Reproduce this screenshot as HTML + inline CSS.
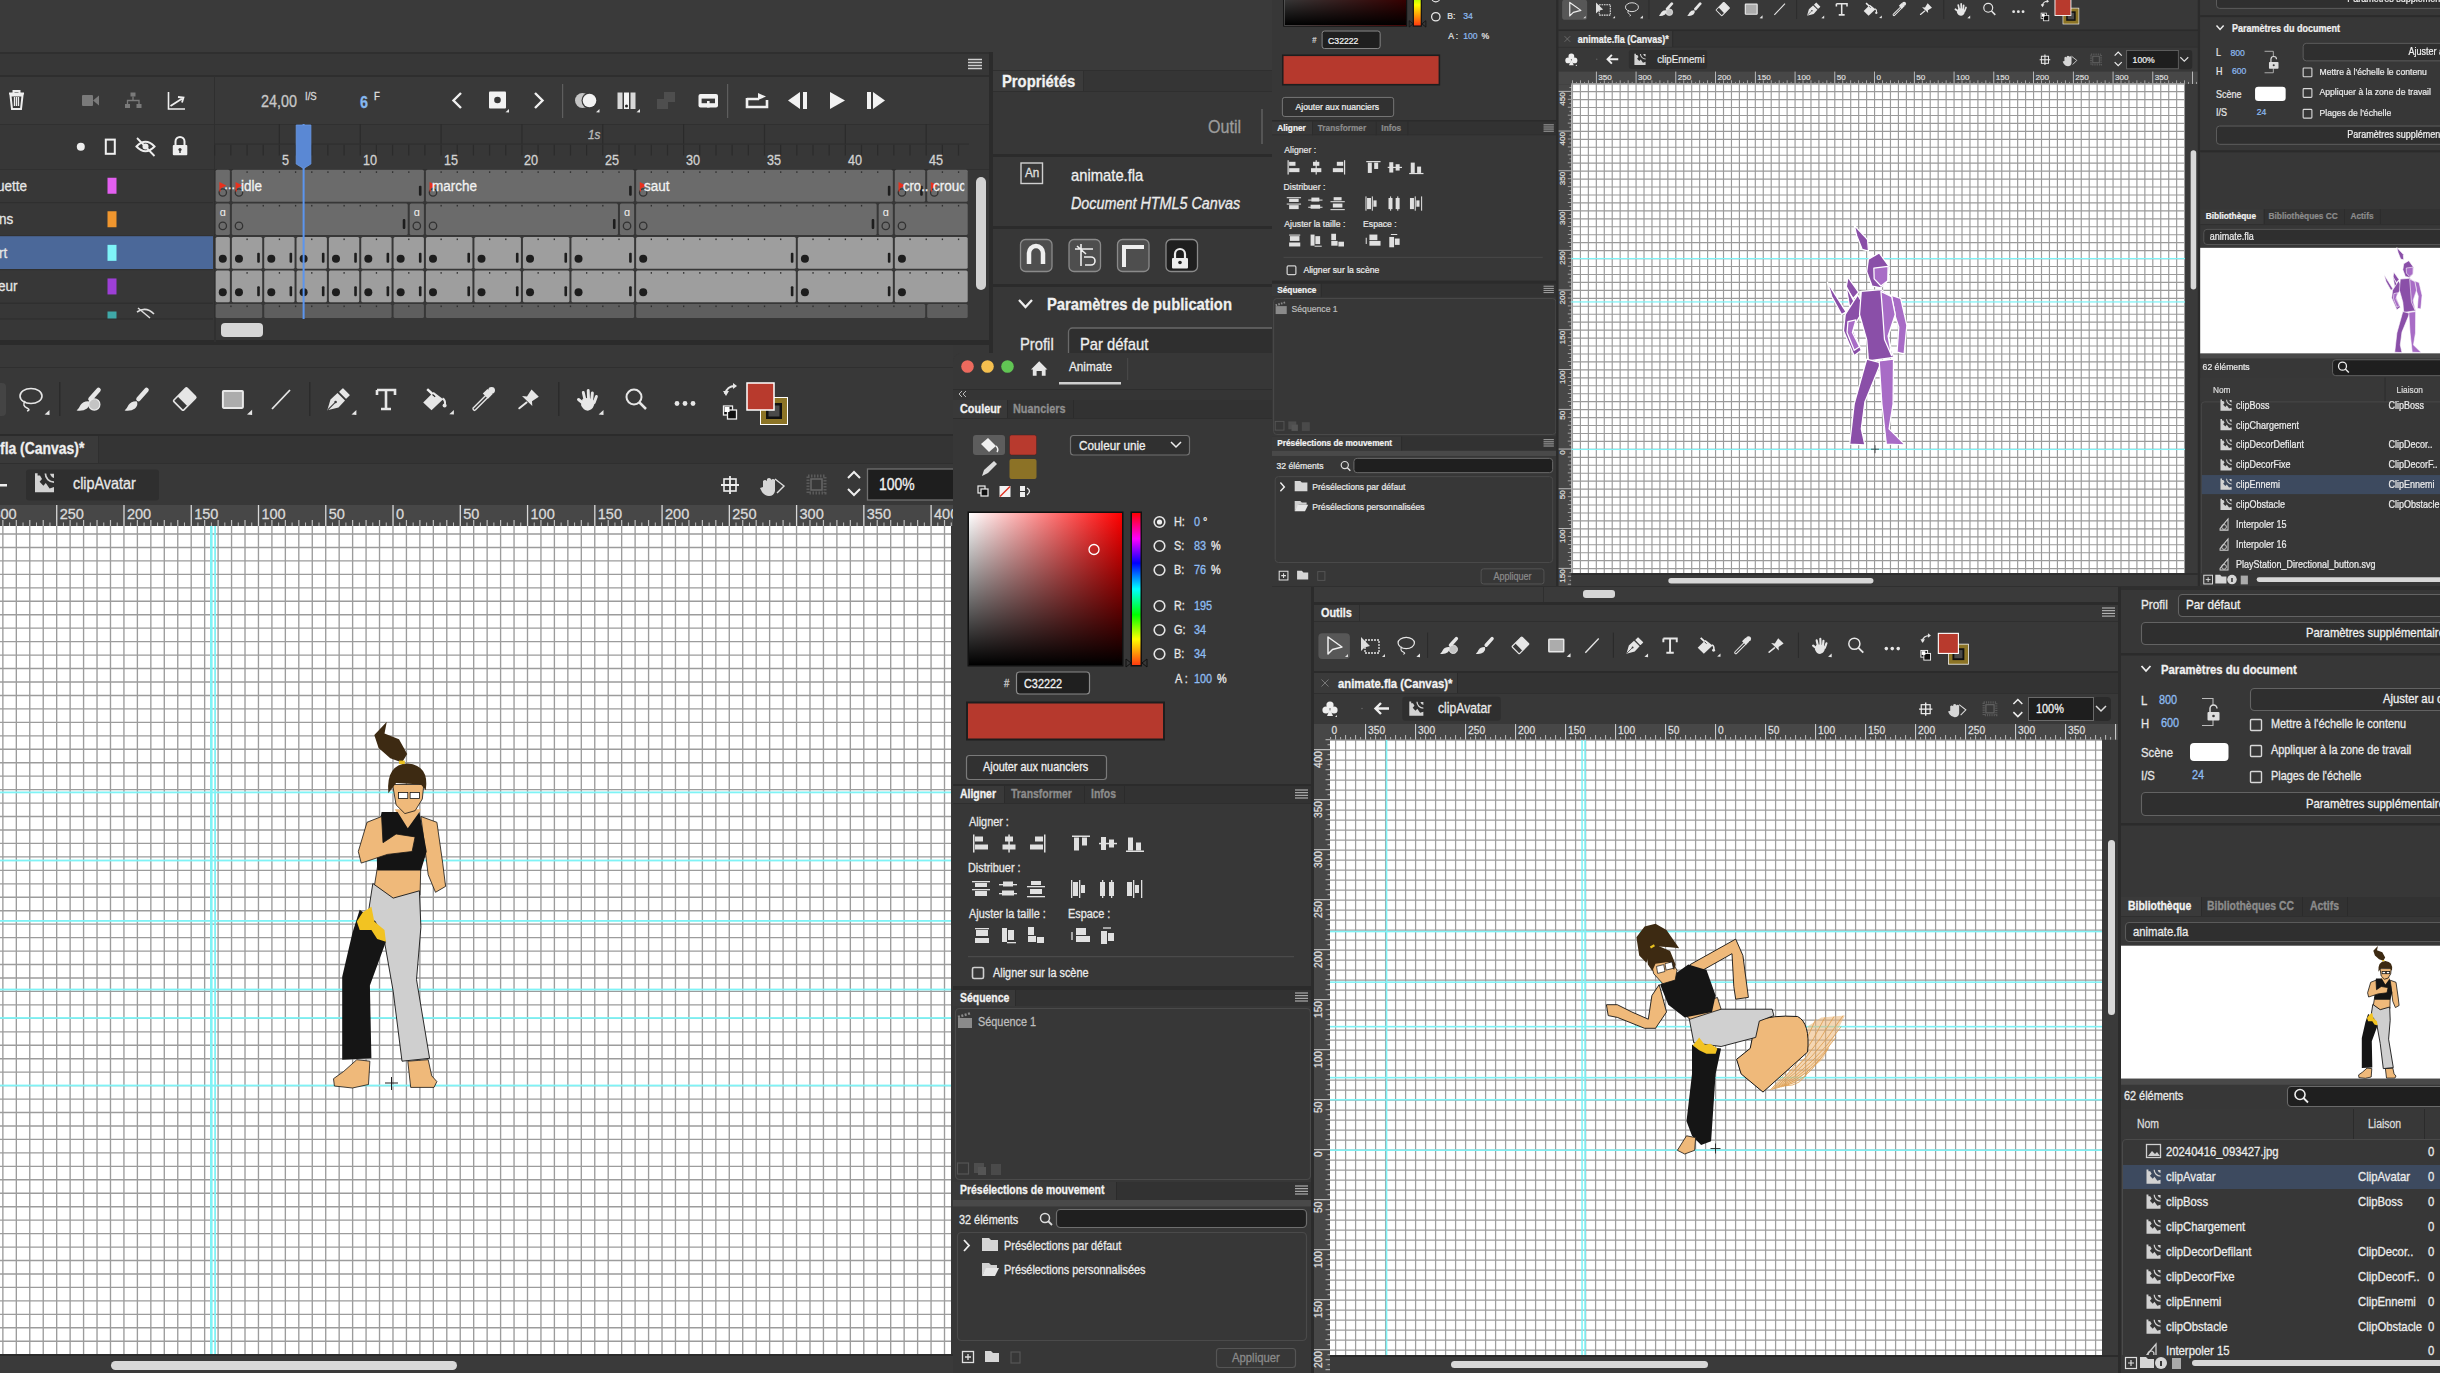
<!DOCTYPE html>
<html><head><meta charset="utf-8">
<style>
*{margin:0;padding:0;box-sizing:border-box}
html,body{width:2440px;height:1373px;overflow:hidden;background:#2f2f2f;font-family:"Liberation Sans",sans-serif;color:#e8e8e8}
.a{position:absolute}
.t{position:absolute;white-space:nowrap;line-height:1;transform:scaleX(.87);transform-origin:0 0;-webkit-text-stroke-width:.3px}
svg{overflow:visible}
</style></head><body>
<div class="a" style="left:993px;top:0;width:279px;height:52px;background:#3a3a3a"></div><div class="a" id="L" style="left:0;top:0;width:993px;height:1373px;background:#373737;overflow:hidden">
<div class="a" style="left:0px;top:0px;width:993px;height:52px;background:#3a3a3a;"></div>
<div class="a" style="left:0px;top:52px;width:993px;height:2px;background:#2f2f2f;"></div>
<div class="a" style="left:0px;top:54px;width:989px;height:22px;background:#373737;"></div>
<div class="a" style="left:0px;top:75px;width:989px;height:1.5px;background:#2e2e2e;"></div>
<div class="a" style="left:0px;top:76.5px;width:989px;height:47.5px;background:#393939;"></div>
<div class="a" style="left:0px;top:123.5px;width:989px;height:1px;background:#303030;"></div>
<div class="a" style="left:0px;top:124.5px;width:989px;height:45px;background:#373737;"></div>
<div class="a" style="left:0px;top:168.5px;width:989px;height:1.2px;background:#303030;"></div>
<div class="a" style="left:213.7px;top:76px;width:1.5px;height:266px;background:#2f2f2f;"></div>
<div class="a" style="left:0px;top:318px;width:989px;height:22px;background:#373737;"></div>
<div class="a" style="left:0px;top:340px;width:993px;height:5px;background:#2b2b2b;"></div>
<div class="a" style="left:989px;top:52px;width:4px;height:301px;background:#2b2b2b;"></div>
<div class="a" style="left:0px;top:345px;width:953px;height:21.5px;background:#383838;"></div>
<div class="a" style="left:0px;top:366.5px;width:953px;height:1px;background:#2f2f2f;"></div>
<div class="a" style="left:0px;top:367.5px;width:953px;height:66.5px;background:#383838;"></div>
<div class="a" style="left:0px;top:434px;width:953px;height:2px;background:#2b2b2b;"></div>
<div class="a" style="left:0px;top:436px;width:953px;height:27px;background:#343434;"></div>
<div class="a" style="left:0px;top:436px;width:98px;height:27px;background:#3a3a3a;"></div>
<div class="a" style="left:98px;top:436px;width:1px;height:27px;background:#2f2f2f;"></div>
<div class="a" style="left:0px;top:463px;width:953px;height:1px;background:#2f2f2f;"></div>
<div class="a" style="left:0px;top:464px;width:953px;height:41px;background:#383838;"></div>
<div class="a" style="left:0px;top:505px;width:953px;height:21px;background:#474747;"></div>
<svg class="a" style="left:0px;top:0px;" width="990" height="125" viewBox="0 0 990 125"><path d="M9 93.5 H24 M13.5 93 V91 H19.5 V93 M10.5 95.5 L12 109 H21 L22.5 95.5Z" fill="none" stroke="#eee" stroke-width="2"/><path d="M14.5 97 V106 M16.5 97 V106 M18.5 97 V106" stroke="#eee" stroke-width="1.3"/><rect x="82" y="95" width="11" height="11" rx="1" fill="#7a7a7a"/><path d="M93 100.5 L99 95.5 V105.5Z" fill="#7a7a7a"/><rect x="130.5" y="92.5" width="5" height="4" fill="#7a7a7a"/><rect x="125" y="104" width="5" height="4" fill="#7a7a7a"/><rect x="136.5" y="104" width="5" height="4" fill="#7a7a7a"/><path d="M133 96.5 V100.5 M127.5 104 V100.5 H139 V104" fill="none" stroke="#7a7a7a" stroke-width="1.3"/><path d="M168.5 92 V109 H185" fill="none" stroke="#eee" stroke-width="1.6"/><path d="M170.5 106 L183 98 M178 97 L183.5 97.5 L182 102.5" fill="none" stroke="#eee" stroke-width="1.8"/><path d="M461 93 L453.5 100.5 L461 108" fill="none" stroke="#f0f0f0" stroke-width="2.4"/><rect x="489" y="91.5" width="17" height="17" rx="1" fill="#f2f2f2"/><circle cx="497.5" cy="100" r="3.3" fill="#383838"/><path d="M505.5 112.3 L509 109 L509 112.5Z" fill="#e6e6e6"/><path d="M535 93 L542.5 100.5 L535 108" fill="none" stroke="#f0f0f0" stroke-width="2.4"/><rect x="562" y="84" width="1.2" height="34" fill="#5e5e5e"/><circle cx="582.5" cy="100.5" r="7.5" fill="#c4c4c4"/><circle cx="589.5" cy="100.5" r="8" fill="#383838"/><circle cx="589.5" cy="100.5" r="6.8" fill="#f2f2f2"/><path d="M596 112.3 L599.5 109 L599.5 112.5Z" fill="#e6e6e6"/><rect x="617.5" y="92.5" width="5" height="16.5" fill="#d8d8d8"/><rect x="624" y="92.5" width="5" height="16.5" fill="#f4f4f4"/><rect x="630.5" y="92.5" width="5" height="16.5" fill="#d8d8d8"/><circle cx="626.5" cy="106" r="1.5" fill="#222"/><path d="M636.5 112.3 L640 109 L640 112.5Z" fill="#e6e6e6"/><rect x="657" y="99" width="11" height="10" fill="#4e4e4e"/><rect x="664" y="92" width="11" height="10" fill="#4e4e4e"/><rect x="698.5" y="94" width="19.5" height="13.5" rx="2" fill="#f2f2f2"/><rect x="701.6" y="98.6" width="13.4" height="4.6" fill="#3a3a3a"/><rect x="707" y="101" width="2.6" height="6.5" fill="#f2f2f2"/><rect x="727" y="84" width="1.2" height="34" fill="#5e5e5e"/><path d="M747 98 V107 H767 V100 M747 99 H759" fill="none" stroke="#f0f0f0" stroke-width="2.6"/><path d="M758 93 L766 96.5 L758 100Z" fill="#f0f0f0"/><path d="M800 92 V109 L788 100.5Z" fill="#f2f2f2"/><rect x="803" y="92" width="4" height="17" fill="#f2f2f2"/><path d="M830 92 V109 L845 100.5Z" fill="#f2f2f2"/><rect x="867" y="92" width="4" height="17" fill="#f2f2f2"/><path d="M873 92 V109 L885 100.5Z" fill="#f2f2f2"/><path d="M968 59.5H982M968 62.5H982M968 65.5H982M968 68.5H982" stroke="#cfcfcf" stroke-width="1.4"/></svg>
<div class="t" style="left:260.5px;top:93px;font-size:16.5px;color:#c8c8c8;font-weight:normal;">24,00</div>
<div class="t" style="left:304.5px;top:90.5px;font-size:11px;color:#d8d8d8;font-weight:normal;">I/S</div>
<div class="t" style="left:360px;top:94px;font-size:16.5px;color:#86b8f0;font-weight:bold;">6</div>
<div class="t" style="left:373.5px;top:90.5px;font-size:11px;color:#e0e0e0;font-weight:normal;">F</div>
<svg class="a" style="left:0px;top:0px;" width="990" height="170" viewBox="0 0 990 170"><rect x="214.1" y="144.5" width="1.2" height="11" fill="#2b2b2b"/><rect x="230.27" y="144.5" width="1.2" height="11" fill="#2b2b2b"/><rect x="246.44" y="144.5" width="1.2" height="11" fill="#2b2b2b"/><rect x="262.61" y="144.5" width="1.2" height="11" fill="#2b2b2b"/><rect x="278.78" y="124" width="1.2" height="20" fill="#2b2b2b"/><rect x="278.78" y="144.5" width="1.2" height="11" fill="#2b2b2b"/><rect x="294.95" y="144.5" width="1.2" height="11" fill="#2b2b2b"/><rect x="311.12" y="144.5" width="1.2" height="11" fill="#2b2b2b"/><rect x="327.29" y="144.5" width="1.2" height="11" fill="#2b2b2b"/><rect x="343.46" y="144.5" width="1.2" height="11" fill="#2b2b2b"/><rect x="359.63" y="124" width="1.2" height="20" fill="#2b2b2b"/><rect x="359.63" y="144.5" width="1.2" height="11" fill="#2b2b2b"/><rect x="375.8" y="144.5" width="1.2" height="11" fill="#2b2b2b"/><rect x="391.97" y="144.5" width="1.2" height="11" fill="#2b2b2b"/><rect x="408.14" y="144.5" width="1.2" height="11" fill="#2b2b2b"/><rect x="424.31" y="144.5" width="1.2" height="11" fill="#2b2b2b"/><rect x="440.48" y="124" width="1.2" height="20" fill="#2b2b2b"/><rect x="440.48" y="144.5" width="1.2" height="11" fill="#2b2b2b"/><rect x="456.65" y="144.5" width="1.2" height="11" fill="#2b2b2b"/><rect x="472.82" y="144.5" width="1.2" height="11" fill="#2b2b2b"/><rect x="488.99" y="144.5" width="1.2" height="11" fill="#2b2b2b"/><rect x="505.16" y="144.5" width="1.2" height="11" fill="#2b2b2b"/><rect x="521.33" y="124" width="1.2" height="20" fill="#2b2b2b"/><rect x="521.33" y="144.5" width="1.2" height="11" fill="#2b2b2b"/><rect x="537.5" y="144.5" width="1.2" height="11" fill="#2b2b2b"/><rect x="553.67" y="144.5" width="1.2" height="11" fill="#2b2b2b"/><rect x="569.84" y="144.5" width="1.2" height="11" fill="#2b2b2b"/><rect x="586.01" y="144.5" width="1.2" height="11" fill="#2b2b2b"/><rect x="602.18" y="124" width="1.2" height="20" fill="#2b2b2b"/><rect x="602.18" y="144.5" width="1.2" height="11" fill="#2b2b2b"/><rect x="618.35" y="144.5" width="1.2" height="11" fill="#2b2b2b"/><rect x="634.52" y="144.5" width="1.2" height="11" fill="#2b2b2b"/><rect x="650.69" y="144.5" width="1.2" height="11" fill="#2b2b2b"/><rect x="666.86" y="144.5" width="1.2" height="11" fill="#2b2b2b"/><rect x="683.03" y="124" width="1.2" height="20" fill="#2b2b2b"/><rect x="683.03" y="144.5" width="1.2" height="11" fill="#2b2b2b"/><rect x="699.2" y="144.5" width="1.2" height="11" fill="#2b2b2b"/><rect x="715.37" y="144.5" width="1.2" height="11" fill="#2b2b2b"/><rect x="731.54" y="144.5" width="1.2" height="11" fill="#2b2b2b"/><rect x="747.71" y="144.5" width="1.2" height="11" fill="#2b2b2b"/><rect x="763.88" y="124" width="1.2" height="20" fill="#2b2b2b"/><rect x="763.88" y="144.5" width="1.2" height="11" fill="#2b2b2b"/><rect x="780.05" y="144.5" width="1.2" height="11" fill="#2b2b2b"/><rect x="796.22" y="144.5" width="1.2" height="11" fill="#2b2b2b"/><rect x="812.39" y="144.5" width="1.2" height="11" fill="#2b2b2b"/><rect x="828.56" y="144.5" width="1.2" height="11" fill="#2b2b2b"/><rect x="844.73" y="124" width="1.2" height="20" fill="#2b2b2b"/><rect x="844.73" y="144.5" width="1.2" height="11" fill="#2b2b2b"/><rect x="860.9" y="144.5" width="1.2" height="11" fill="#2b2b2b"/><rect x="877.07" y="144.5" width="1.2" height="11" fill="#2b2b2b"/><rect x="893.24" y="144.5" width="1.2" height="11" fill="#2b2b2b"/><rect x="909.41" y="144.5" width="1.2" height="11" fill="#2b2b2b"/><rect x="925.58" y="124" width="1.2" height="20" fill="#2b2b2b"/><rect x="925.58" y="144.5" width="1.2" height="11" fill="#2b2b2b"/><rect x="941.75" y="144.5" width="1.2" height="11" fill="#2b2b2b"/><rect x="957.92" y="144.5" width="1.2" height="11" fill="#2b2b2b"/><rect x="214" y="143.5" width="755" height="1.2" fill="#2f2f2f"/></svg>
<div class="t" style="left:281.88px;top:152.5px;font-size:14.5px;color:#d2d2d2;font-weight:normal;">5</div>
<div class="t" style="left:362.73px;top:152.5px;font-size:14.5px;color:#d2d2d2;font-weight:normal;">10</div>
<div class="t" style="left:443.58000000000004px;top:152.5px;font-size:14.5px;color:#d2d2d2;font-weight:normal;">15</div>
<div class="t" style="left:524.4300000000001px;top:152.5px;font-size:14.5px;color:#d2d2d2;font-weight:normal;">20</div>
<div class="t" style="left:605.28px;top:152.5px;font-size:14.5px;color:#d2d2d2;font-weight:normal;">25</div>
<div class="t" style="left:686.1300000000001px;top:152.5px;font-size:14.5px;color:#d2d2d2;font-weight:normal;">30</div>
<div class="t" style="left:766.98px;top:152.5px;font-size:14.5px;color:#d2d2d2;font-weight:normal;">35</div>
<div class="t" style="left:847.8300000000002px;top:152.5px;font-size:14.5px;color:#d2d2d2;font-weight:normal;">40</div>
<div class="t" style="left:928.6800000000001px;top:152.5px;font-size:14.5px;color:#d2d2d2;font-weight:normal;">45</div>
<div class="t" style="left:588px;top:127.5px;font-size:13.5px;color:#bdbdbd;font-weight:normal;font-style:italic">1s</div>
<svg class="a" style="left:0px;top:0px;" width="214" height="170" viewBox="0 0 214 170"><circle cx="80.8" cy="146.7" r="4" fill="#eee"/><rect x="105.8" y="139.6" width="9" height="14.2" fill="none" stroke="#f0f0f0" stroke-width="2"/><path d="M136.5 146.5 Q145.5 137 154.5 146.5 Q145.5 156 136.5 146.5Z" fill="none" stroke="#eee" stroke-width="2"/><circle cx="145.5" cy="146.5" r="3" fill="#eee"/><line x1="137" y1="138" x2="154.5" y2="156" stroke="#eee" stroke-width="1.8"/><path d="M175.5 145 V141.5 A4.5 4.5 0 0 1 184.5 141.5 V145" fill="none" stroke="#eee" stroke-width="2"/><rect x="172.8" y="145" width="14.5" height="10.3" rx="1" fill="#eee"/><circle cx="180" cy="149.5" r="1.6" fill="#383838"/><rect x="179.3" y="149.5" width="1.4" height="3.5" fill="#383838"/></svg>
<svg class="a" style="left:0px;top:0px;" width="214" height="320" viewBox="0 0 214 320"><rect x="0" y="202" width="213" height="1.2" fill="#2f2f2f"/><rect x="107.5" y="177.75" width="9" height="16" fill="#e35ff0"/><rect x="0" y="235.4" width="213" height="1.2" fill="#2f2f2f"/><rect x="107.5" y="211.25" width="9" height="16" fill="#f0962e"/><rect x="0" y="236.2" width="213" height="33.29999999999999" fill="#4b6899"/><rect x="0" y="269" width="213" height="1.2" fill="#2f2f2f"/><rect x="107.5" y="244.85" width="9" height="16" fill="#7ff4f8"/><rect x="0" y="302.6" width="213" height="1.2" fill="#2f2f2f"/><rect x="107.5" y="278.45" width="9" height="16" fill="#9d3fd6"/><rect x="0" y="318.3" width="213" height="1.2" fill="#2f2f2f"/><rect x="107.5" y="311.5" width="9" height="7" fill="#3fa8a8"/><path d="M137 312 Q146 306 154 314" fill="none" stroke="#ddd" stroke-width="1.6"/><line x1="138" y1="308" x2="150" y2="318" stroke="#ddd" stroke-width="1.5"/></svg>
<div class="t" style="left:-3px;top:177.75px;font-size:15.5px;color:#e6e6e6;font-weight:normal;">uette</div>
<div class="t" style="left:-1px;top:211.25px;font-size:15.5px;color:#e6e6e6;font-weight:normal;">ns</div>
<div class="t" style="left:-1px;top:244.85px;font-size:15.5px;color:#e6e6e6;font-weight:normal;">rt</div>
<div class="t" style="left:-2px;top:278.45000000000005px;font-size:15.5px;color:#e6e6e6;font-weight:normal;">eur</div>
<svg class="a" style="left:0px;top:0px;" width="990" height="320" viewBox="0 0 990 320"><rect x="215.7" y="169.8" width="14.17" height="31.9" rx="1.5" fill="#6b6b6b"/><circle cx="222.78" cy="192.5" r="3.7" fill="none" stroke="#323232" stroke-width="1.3"/><rect x="231.87" y="169.8" width="192.04" height="31.9" rx="1.5" fill="#6b6b6b"/><rect x="246.44" y="171.3" width="1.3" height="1.6" fill="#2f2f2f"/><rect x="262.61" y="171.3" width="1.3" height="1.6" fill="#2f2f2f"/><rect x="278.78" y="171.3" width="1.3" height="1.6" fill="#2f2f2f"/><rect x="294.95" y="171.3" width="1.3" height="1.6" fill="#2f2f2f"/><rect x="311.12" y="171.3" width="1.3" height="1.6" fill="#2f2f2f"/><rect x="327.29" y="171.3" width="1.3" height="1.6" fill="#2f2f2f"/><rect x="343.46" y="171.3" width="1.3" height="1.6" fill="#2f2f2f"/><rect x="359.63" y="171.3" width="1.3" height="1.6" fill="#2f2f2f"/><rect x="375.8" y="171.3" width="1.3" height="1.6" fill="#2f2f2f"/><rect x="391.97" y="171.3" width="1.3" height="1.6" fill="#2f2f2f"/><rect x="408.14" y="171.3" width="1.3" height="1.6" fill="#2f2f2f"/><circle cx="238.96" cy="192.5" r="3.7" fill="none" stroke="#323232" stroke-width="1.3"/><rect x="418.91" y="185.7" width="2.6" height="10" rx="1" fill="#1d1d1d"/><rect x="425.91" y="169.8" width="208.21" height="31.9" rx="1.5" fill="#6b6b6b"/><rect x="440.48" y="171.3" width="1.3" height="1.6" fill="#2f2f2f"/><rect x="456.65" y="171.3" width="1.3" height="1.6" fill="#2f2f2f"/><rect x="472.82" y="171.3" width="1.3" height="1.6" fill="#2f2f2f"/><rect x="488.99" y="171.3" width="1.3" height="1.6" fill="#2f2f2f"/><rect x="505.16" y="171.3" width="1.3" height="1.6" fill="#2f2f2f"/><rect x="521.33" y="171.3" width="1.3" height="1.6" fill="#2f2f2f"/><rect x="537.5" y="171.3" width="1.3" height="1.6" fill="#2f2f2f"/><rect x="553.67" y="171.3" width="1.3" height="1.6" fill="#2f2f2f"/><rect x="569.84" y="171.3" width="1.3" height="1.6" fill="#2f2f2f"/><rect x="586.01" y="171.3" width="1.3" height="1.6" fill="#2f2f2f"/><rect x="602.18" y="171.3" width="1.3" height="1.6" fill="#2f2f2f"/><rect x="618.35" y="171.3" width="1.3" height="1.6" fill="#2f2f2f"/><circle cx="433" cy="192.5" r="3.7" fill="none" stroke="#323232" stroke-width="1.3"/><rect x="629.12" y="185.7" width="2.6" height="10" rx="1" fill="#1d1d1d"/><rect x="636.12" y="169.8" width="256.72" height="31.9" rx="1.5" fill="#6b6b6b"/><rect x="650.69" y="171.3" width="1.3" height="1.6" fill="#2f2f2f"/><rect x="666.86" y="171.3" width="1.3" height="1.6" fill="#2f2f2f"/><rect x="683.03" y="171.3" width="1.3" height="1.6" fill="#2f2f2f"/><rect x="699.2" y="171.3" width="1.3" height="1.6" fill="#2f2f2f"/><rect x="715.37" y="171.3" width="1.3" height="1.6" fill="#2f2f2f"/><rect x="731.54" y="171.3" width="1.3" height="1.6" fill="#2f2f2f"/><rect x="747.71" y="171.3" width="1.3" height="1.6" fill="#2f2f2f"/><rect x="763.88" y="171.3" width="1.3" height="1.6" fill="#2f2f2f"/><rect x="780.05" y="171.3" width="1.3" height="1.6" fill="#2f2f2f"/><rect x="796.22" y="171.3" width="1.3" height="1.6" fill="#2f2f2f"/><rect x="812.39" y="171.3" width="1.3" height="1.6" fill="#2f2f2f"/><rect x="828.56" y="171.3" width="1.3" height="1.6" fill="#2f2f2f"/><rect x="844.73" y="171.3" width="1.3" height="1.6" fill="#2f2f2f"/><rect x="860.9" y="171.3" width="1.3" height="1.6" fill="#2f2f2f"/><rect x="877.07" y="171.3" width="1.3" height="1.6" fill="#2f2f2f"/><circle cx="643.21" cy="192.5" r="3.7" fill="none" stroke="#323232" stroke-width="1.3"/><rect x="887.84" y="185.7" width="2.6" height="10" rx="1" fill="#1d1d1d"/><rect x="894.84" y="169.8" width="30.34" height="31.9" rx="1.5" fill="#6b6b6b"/><rect x="909.41" y="171.3" width="1.3" height="1.6" fill="#2f2f2f"/><circle cx="901.93" cy="192.5" r="3.7" fill="none" stroke="#323232" stroke-width="1.3"/><rect x="920.18" y="185.7" width="2.6" height="10" rx="1" fill="#1d1d1d"/><rect x="927.18" y="169.8" width="40.52" height="31.9" rx="1.5" fill="#6b6b6b"/><rect x="941.75" y="171.3" width="1.3" height="1.6" fill="#2f2f2f"/><rect x="957.92" y="171.3" width="1.3" height="1.6" fill="#2f2f2f"/><circle cx="934.27" cy="192.5" r="3.7" fill="none" stroke="#323232" stroke-width="1.3"/><rect x="215.7" y="203.4" width="14.17" height="31.7" rx="1.5" fill="#6b6b6b"/><circle cx="222.78" cy="225.9" r="3.7" fill="none" stroke="#323232" stroke-width="1.3"/><text x="222.78" y="216.4" font-size="11" fill="#eee" text-anchor="middle" font-family="Liberation Sans">ɑ</text><rect x="231.87" y="203.4" width="175.87" height="31.7" rx="1.5" fill="#6b6b6b"/><rect x="246.44" y="204.9" width="1.3" height="1.6" fill="#2f2f2f"/><rect x="262.61" y="204.9" width="1.3" height="1.6" fill="#2f2f2f"/><rect x="278.78" y="204.9" width="1.3" height="1.6" fill="#2f2f2f"/><rect x="294.95" y="204.9" width="1.3" height="1.6" fill="#2f2f2f"/><rect x="311.12" y="204.9" width="1.3" height="1.6" fill="#2f2f2f"/><rect x="327.29" y="204.9" width="1.3" height="1.6" fill="#2f2f2f"/><rect x="343.46" y="204.9" width="1.3" height="1.6" fill="#2f2f2f"/><rect x="359.63" y="204.9" width="1.3" height="1.6" fill="#2f2f2f"/><rect x="375.8" y="204.9" width="1.3" height="1.6" fill="#2f2f2f"/><rect x="391.97" y="204.9" width="1.3" height="1.6" fill="#2f2f2f"/><circle cx="238.96" cy="225.9" r="3.7" fill="none" stroke="#323232" stroke-width="1.3"/><rect x="402.74" y="219.1" width="2.6" height="10" rx="1" fill="#1d1d1d"/><rect x="409.74" y="203.4" width="14.17" height="31.7" rx="1.5" fill="#6b6b6b"/><circle cx="416.82" cy="225.9" r="3.7" fill="none" stroke="#323232" stroke-width="1.3"/><text x="416.82" y="216.4" font-size="11" fill="#eee" text-anchor="middle" font-family="Liberation Sans">ɑ</text><rect x="425.91" y="203.4" width="192.04" height="31.7" rx="1.5" fill="#6b6b6b"/><rect x="440.48" y="204.9" width="1.3" height="1.6" fill="#2f2f2f"/><rect x="456.65" y="204.9" width="1.3" height="1.6" fill="#2f2f2f"/><rect x="472.82" y="204.9" width="1.3" height="1.6" fill="#2f2f2f"/><rect x="488.99" y="204.9" width="1.3" height="1.6" fill="#2f2f2f"/><rect x="505.16" y="204.9" width="1.3" height="1.6" fill="#2f2f2f"/><rect x="521.33" y="204.9" width="1.3" height="1.6" fill="#2f2f2f"/><rect x="537.5" y="204.9" width="1.3" height="1.6" fill="#2f2f2f"/><rect x="553.67" y="204.9" width="1.3" height="1.6" fill="#2f2f2f"/><rect x="569.84" y="204.9" width="1.3" height="1.6" fill="#2f2f2f"/><rect x="586.01" y="204.9" width="1.3" height="1.6" fill="#2f2f2f"/><rect x="602.18" y="204.9" width="1.3" height="1.6" fill="#2f2f2f"/><circle cx="433" cy="225.9" r="3.7" fill="none" stroke="#323232" stroke-width="1.3"/><rect x="612.95" y="219.1" width="2.6" height="10" rx="1" fill="#1d1d1d"/><rect x="619.95" y="203.4" width="14.17" height="31.7" rx="1.5" fill="#6b6b6b"/><circle cx="627.04" cy="225.9" r="3.7" fill="none" stroke="#323232" stroke-width="1.3"/><text x="627.04" y="216.4" font-size="11" fill="#eee" text-anchor="middle" font-family="Liberation Sans">ɑ</text><rect x="636.12" y="203.4" width="240.55" height="31.7" rx="1.5" fill="#6b6b6b"/><rect x="650.69" y="204.9" width="1.3" height="1.6" fill="#2f2f2f"/><rect x="666.86" y="204.9" width="1.3" height="1.6" fill="#2f2f2f"/><rect x="683.03" y="204.9" width="1.3" height="1.6" fill="#2f2f2f"/><rect x="699.2" y="204.9" width="1.3" height="1.6" fill="#2f2f2f"/><rect x="715.37" y="204.9" width="1.3" height="1.6" fill="#2f2f2f"/><rect x="731.54" y="204.9" width="1.3" height="1.6" fill="#2f2f2f"/><rect x="747.71" y="204.9" width="1.3" height="1.6" fill="#2f2f2f"/><rect x="763.88" y="204.9" width="1.3" height="1.6" fill="#2f2f2f"/><rect x="780.05" y="204.9" width="1.3" height="1.6" fill="#2f2f2f"/><rect x="796.22" y="204.9" width="1.3" height="1.6" fill="#2f2f2f"/><rect x="812.39" y="204.9" width="1.3" height="1.6" fill="#2f2f2f"/><rect x="828.56" y="204.9" width="1.3" height="1.6" fill="#2f2f2f"/><rect x="844.73" y="204.9" width="1.3" height="1.6" fill="#2f2f2f"/><rect x="860.9" y="204.9" width="1.3" height="1.6" fill="#2f2f2f"/><circle cx="643.21" cy="225.9" r="3.7" fill="none" stroke="#323232" stroke-width="1.3"/><rect x="871.67" y="219.1" width="2.6" height="10" rx="1" fill="#1d1d1d"/><rect x="878.67" y="203.4" width="14.17" height="31.7" rx="1.5" fill="#6b6b6b"/><circle cx="885.76" cy="225.9" r="3.7" fill="none" stroke="#323232" stroke-width="1.3"/><text x="885.76" y="216.4" font-size="11" fill="#eee" text-anchor="middle" font-family="Liberation Sans">ɑ</text><rect x="894.84" y="203.4" width="72.86" height="31.7" rx="1.5" fill="#6b6b6b"/><rect x="909.41" y="204.9" width="1.3" height="1.6" fill="#2f2f2f"/><rect x="925.58" y="204.9" width="1.3" height="1.6" fill="#2f2f2f"/><rect x="941.75" y="204.9" width="1.3" height="1.6" fill="#2f2f2f"/><rect x="957.92" y="204.9" width="1.3" height="1.6" fill="#2f2f2f"/><circle cx="901.93" cy="225.9" r="3.7" fill="none" stroke="#323232" stroke-width="1.3"/><rect x="215.7" y="237" width="14.17" height="31.7" rx="1.5" fill="#9e9e9e"/><circle cx="222.78" cy="258.7" r="4" fill="#1d1d1d"/><rect x="231.87" y="237" width="30.34" height="31.7" rx="1.5" fill="#9e9e9e"/><rect x="246.44" y="238.5" width="1.3" height="1.6" fill="#2f2f2f"/><circle cx="238.96" cy="258.7" r="4" fill="#1d1d1d"/><rect x="257.21" y="252.7" width="2.6" height="10" rx="1" fill="#1d1d1d"/><rect x="264.21" y="237" width="30.34" height="31.7" rx="1.5" fill="#9e9e9e"/><rect x="278.78" y="238.5" width="1.3" height="1.6" fill="#2f2f2f"/><circle cx="271.29" cy="258.7" r="4" fill="#1d1d1d"/><rect x="289.55" y="252.7" width="2.6" height="10" rx="1" fill="#1d1d1d"/><rect x="296.55" y="237" width="30.34" height="31.7" rx="1.5" fill="#9e9e9e"/><rect x="311.12" y="238.5" width="1.3" height="1.6" fill="#2f2f2f"/><circle cx="303.63" cy="258.7" r="4" fill="#1d1d1d"/><rect x="321.89" y="252.7" width="2.6" height="10" rx="1" fill="#1d1d1d"/><rect x="328.89" y="237" width="30.34" height="31.7" rx="1.5" fill="#9e9e9e"/><rect x="343.46" y="238.5" width="1.3" height="1.6" fill="#2f2f2f"/><circle cx="335.97" cy="258.7" r="4" fill="#1d1d1d"/><rect x="354.23" y="252.7" width="2.6" height="10" rx="1" fill="#1d1d1d"/><rect x="361.23" y="237" width="30.34" height="31.7" rx="1.5" fill="#9e9e9e"/><rect x="375.8" y="238.5" width="1.3" height="1.6" fill="#2f2f2f"/><circle cx="368.31" cy="258.7" r="4" fill="#1d1d1d"/><rect x="386.57" y="252.7" width="2.6" height="10" rx="1" fill="#1d1d1d"/><rect x="393.57" y="237" width="30.34" height="31.7" rx="1.5" fill="#9e9e9e"/><rect x="408.14" y="238.5" width="1.3" height="1.6" fill="#2f2f2f"/><circle cx="400.65" cy="258.7" r="4" fill="#1d1d1d"/><rect x="418.91" y="252.7" width="2.6" height="10" rx="1" fill="#1d1d1d"/><rect x="425.91" y="237" width="46.51" height="31.7" rx="1.5" fill="#9e9e9e"/><rect x="440.48" y="238.5" width="1.3" height="1.6" fill="#2f2f2f"/><rect x="456.65" y="238.5" width="1.3" height="1.6" fill="#2f2f2f"/><circle cx="433" cy="258.7" r="4" fill="#1d1d1d"/><rect x="467.42" y="252.7" width="2.6" height="10" rx="1" fill="#1d1d1d"/><rect x="474.42" y="237" width="46.51" height="31.7" rx="1.5" fill="#9e9e9e"/><rect x="488.99" y="238.5" width="1.3" height="1.6" fill="#2f2f2f"/><rect x="505.16" y="238.5" width="1.3" height="1.6" fill="#2f2f2f"/><circle cx="481.5" cy="258.7" r="4" fill="#1d1d1d"/><rect x="515.93" y="252.7" width="2.6" height="10" rx="1" fill="#1d1d1d"/><rect x="522.93" y="237" width="46.51" height="31.7" rx="1.5" fill="#9e9e9e"/><rect x="537.5" y="238.5" width="1.3" height="1.6" fill="#2f2f2f"/><rect x="553.67" y="238.5" width="1.3" height="1.6" fill="#2f2f2f"/><circle cx="530.02" cy="258.7" r="4" fill="#1d1d1d"/><rect x="564.44" y="252.7" width="2.6" height="10" rx="1" fill="#1d1d1d"/><rect x="571.44" y="237" width="62.68" height="31.7" rx="1.5" fill="#9e9e9e"/><rect x="586.01" y="238.5" width="1.3" height="1.6" fill="#2f2f2f"/><rect x="602.18" y="238.5" width="1.3" height="1.6" fill="#2f2f2f"/><rect x="618.35" y="238.5" width="1.3" height="1.6" fill="#2f2f2f"/><circle cx="578.53" cy="258.7" r="4" fill="#1d1d1d"/><rect x="629.12" y="252.7" width="2.6" height="10" rx="1" fill="#1d1d1d"/><rect x="636.12" y="237" width="159.7" height="31.7" rx="1.5" fill="#9e9e9e"/><rect x="650.69" y="238.5" width="1.3" height="1.6" fill="#2f2f2f"/><rect x="666.86" y="238.5" width="1.3" height="1.6" fill="#2f2f2f"/><rect x="683.03" y="238.5" width="1.3" height="1.6" fill="#2f2f2f"/><rect x="699.2" y="238.5" width="1.3" height="1.6" fill="#2f2f2f"/><rect x="715.37" y="238.5" width="1.3" height="1.6" fill="#2f2f2f"/><rect x="731.54" y="238.5" width="1.3" height="1.6" fill="#2f2f2f"/><rect x="747.71" y="238.5" width="1.3" height="1.6" fill="#2f2f2f"/><rect x="763.88" y="238.5" width="1.3" height="1.6" fill="#2f2f2f"/><rect x="780.05" y="238.5" width="1.3" height="1.6" fill="#2f2f2f"/><circle cx="643.21" cy="258.7" r="4" fill="#1d1d1d"/><rect x="790.82" y="252.7" width="2.6" height="10" rx="1" fill="#1d1d1d"/><rect x="797.82" y="237" width="95.02" height="31.7" rx="1.5" fill="#9e9e9e"/><rect x="812.39" y="238.5" width="1.3" height="1.6" fill="#2f2f2f"/><rect x="828.56" y="238.5" width="1.3" height="1.6" fill="#2f2f2f"/><rect x="844.73" y="238.5" width="1.3" height="1.6" fill="#2f2f2f"/><rect x="860.9" y="238.5" width="1.3" height="1.6" fill="#2f2f2f"/><rect x="877.07" y="238.5" width="1.3" height="1.6" fill="#2f2f2f"/><circle cx="804.91" cy="258.7" r="4" fill="#1d1d1d"/><rect x="887.84" y="252.7" width="2.6" height="10" rx="1" fill="#1d1d1d"/><rect x="894.84" y="237" width="72.86" height="31.7" rx="1.5" fill="#9e9e9e"/><rect x="909.41" y="238.5" width="1.3" height="1.6" fill="#2f2f2f"/><rect x="925.58" y="238.5" width="1.3" height="1.6" fill="#2f2f2f"/><rect x="941.75" y="238.5" width="1.3" height="1.6" fill="#2f2f2f"/><rect x="957.92" y="238.5" width="1.3" height="1.6" fill="#2f2f2f"/><circle cx="901.93" cy="258.7" r="4" fill="#1d1d1d"/><rect x="215.7" y="270.6" width="14.17" height="31.7" rx="1.5" fill="#9e9e9e"/><circle cx="222.78" cy="292.3" r="4" fill="#1d1d1d"/><rect x="231.87" y="270.6" width="30.34" height="31.7" rx="1.5" fill="#9e9e9e"/><rect x="246.44" y="272.1" width="1.3" height="1.6" fill="#2f2f2f"/><circle cx="238.96" cy="292.3" r="4" fill="#1d1d1d"/><rect x="257.21" y="286.3" width="2.6" height="10" rx="1" fill="#1d1d1d"/><rect x="264.21" y="270.6" width="30.34" height="31.7" rx="1.5" fill="#9e9e9e"/><rect x="278.78" y="272.1" width="1.3" height="1.6" fill="#2f2f2f"/><circle cx="271.29" cy="292.3" r="4" fill="#1d1d1d"/><rect x="289.55" y="286.3" width="2.6" height="10" rx="1" fill="#1d1d1d"/><rect x="296.55" y="270.6" width="30.34" height="31.7" rx="1.5" fill="#9e9e9e"/><rect x="311.12" y="272.1" width="1.3" height="1.6" fill="#2f2f2f"/><circle cx="303.63" cy="292.3" r="4" fill="#1d1d1d"/><rect x="321.89" y="286.3" width="2.6" height="10" rx="1" fill="#1d1d1d"/><rect x="328.89" y="270.6" width="30.34" height="31.7" rx="1.5" fill="#9e9e9e"/><rect x="343.46" y="272.1" width="1.3" height="1.6" fill="#2f2f2f"/><circle cx="335.97" cy="292.3" r="4" fill="#1d1d1d"/><rect x="354.23" y="286.3" width="2.6" height="10" rx="1" fill="#1d1d1d"/><rect x="361.23" y="270.6" width="30.34" height="31.7" rx="1.5" fill="#9e9e9e"/><rect x="375.8" y="272.1" width="1.3" height="1.6" fill="#2f2f2f"/><circle cx="368.31" cy="292.3" r="4" fill="#1d1d1d"/><rect x="386.57" y="286.3" width="2.6" height="10" rx="1" fill="#1d1d1d"/><rect x="393.57" y="270.6" width="30.34" height="31.7" rx="1.5" fill="#9e9e9e"/><rect x="408.14" y="272.1" width="1.3" height="1.6" fill="#2f2f2f"/><circle cx="400.65" cy="292.3" r="4" fill="#1d1d1d"/><rect x="418.91" y="286.3" width="2.6" height="10" rx="1" fill="#1d1d1d"/><rect x="425.91" y="270.6" width="46.51" height="31.7" rx="1.5" fill="#9e9e9e"/><rect x="440.48" y="272.1" width="1.3" height="1.6" fill="#2f2f2f"/><rect x="456.65" y="272.1" width="1.3" height="1.6" fill="#2f2f2f"/><circle cx="433" cy="292.3" r="4" fill="#1d1d1d"/><rect x="467.42" y="286.3" width="2.6" height="10" rx="1" fill="#1d1d1d"/><rect x="474.42" y="270.6" width="46.51" height="31.7" rx="1.5" fill="#9e9e9e"/><rect x="488.99" y="272.1" width="1.3" height="1.6" fill="#2f2f2f"/><rect x="505.16" y="272.1" width="1.3" height="1.6" fill="#2f2f2f"/><circle cx="481.5" cy="292.3" r="4" fill="#1d1d1d"/><rect x="515.93" y="286.3" width="2.6" height="10" rx="1" fill="#1d1d1d"/><rect x="522.93" y="270.6" width="46.51" height="31.7" rx="1.5" fill="#9e9e9e"/><rect x="537.5" y="272.1" width="1.3" height="1.6" fill="#2f2f2f"/><rect x="553.67" y="272.1" width="1.3" height="1.6" fill="#2f2f2f"/><circle cx="530.02" cy="292.3" r="4" fill="#1d1d1d"/><rect x="564.44" y="286.3" width="2.6" height="10" rx="1" fill="#1d1d1d"/><rect x="571.44" y="270.6" width="62.68" height="31.7" rx="1.5" fill="#9e9e9e"/><rect x="586.01" y="272.1" width="1.3" height="1.6" fill="#2f2f2f"/><rect x="602.18" y="272.1" width="1.3" height="1.6" fill="#2f2f2f"/><rect x="618.35" y="272.1" width="1.3" height="1.6" fill="#2f2f2f"/><circle cx="578.53" cy="292.3" r="4" fill="#1d1d1d"/><rect x="629.12" y="286.3" width="2.6" height="10" rx="1" fill="#1d1d1d"/><rect x="636.12" y="270.6" width="159.7" height="31.7" rx="1.5" fill="#9e9e9e"/><rect x="650.69" y="272.1" width="1.3" height="1.6" fill="#2f2f2f"/><rect x="666.86" y="272.1" width="1.3" height="1.6" fill="#2f2f2f"/><rect x="683.03" y="272.1" width="1.3" height="1.6" fill="#2f2f2f"/><rect x="699.2" y="272.1" width="1.3" height="1.6" fill="#2f2f2f"/><rect x="715.37" y="272.1" width="1.3" height="1.6" fill="#2f2f2f"/><rect x="731.54" y="272.1" width="1.3" height="1.6" fill="#2f2f2f"/><rect x="747.71" y="272.1" width="1.3" height="1.6" fill="#2f2f2f"/><rect x="763.88" y="272.1" width="1.3" height="1.6" fill="#2f2f2f"/><rect x="780.05" y="272.1" width="1.3" height="1.6" fill="#2f2f2f"/><circle cx="643.21" cy="292.3" r="4" fill="#1d1d1d"/><rect x="790.82" y="286.3" width="2.6" height="10" rx="1" fill="#1d1d1d"/><rect x="797.82" y="270.6" width="95.02" height="31.7" rx="1.5" fill="#9e9e9e"/><rect x="812.39" y="272.1" width="1.3" height="1.6" fill="#2f2f2f"/><rect x="828.56" y="272.1" width="1.3" height="1.6" fill="#2f2f2f"/><rect x="844.73" y="272.1" width="1.3" height="1.6" fill="#2f2f2f"/><rect x="860.9" y="272.1" width="1.3" height="1.6" fill="#2f2f2f"/><rect x="877.07" y="272.1" width="1.3" height="1.6" fill="#2f2f2f"/><circle cx="804.91" cy="292.3" r="4" fill="#1d1d1d"/><rect x="887.84" y="286.3" width="2.6" height="10" rx="1" fill="#1d1d1d"/><rect x="894.84" y="270.6" width="72.86" height="31.7" rx="1.5" fill="#9e9e9e"/><rect x="909.41" y="272.1" width="1.3" height="1.6" fill="#2f2f2f"/><rect x="925.58" y="272.1" width="1.3" height="1.6" fill="#2f2f2f"/><rect x="941.75" y="272.1" width="1.3" height="1.6" fill="#2f2f2f"/><rect x="957.92" y="272.1" width="1.3" height="1.6" fill="#2f2f2f"/><circle cx="901.93" cy="292.3" r="4" fill="#1d1d1d"/><rect x="215.7" y="304" width="46.51" height="14" rx="1.5" fill="#5e5e5e"/><rect x="230.27" y="305.5" width="1.3" height="1.6" fill="#2f2f2f"/><rect x="246.44" y="305.5" width="1.3" height="1.6" fill="#2f2f2f"/><rect x="264.21" y="304" width="127.36" height="14" rx="1.5" fill="#5e5e5e"/><rect x="278.78" y="305.5" width="1.3" height="1.6" fill="#2f2f2f"/><rect x="294.95" y="305.5" width="1.3" height="1.6" fill="#2f2f2f"/><rect x="311.12" y="305.5" width="1.3" height="1.6" fill="#2f2f2f"/><rect x="327.29" y="305.5" width="1.3" height="1.6" fill="#2f2f2f"/><rect x="343.46" y="305.5" width="1.3" height="1.6" fill="#2f2f2f"/><rect x="359.63" y="305.5" width="1.3" height="1.6" fill="#2f2f2f"/><rect x="375.8" y="305.5" width="1.3" height="1.6" fill="#2f2f2f"/><rect x="393.57" y="304" width="30.34" height="14" rx="1.5" fill="#5e5e5e"/><rect x="408.14" y="305.5" width="1.3" height="1.6" fill="#2f2f2f"/><rect x="425.91" y="304" width="208.21" height="14" rx="1.5" fill="#5e5e5e"/><rect x="440.48" y="305.5" width="1.3" height="1.6" fill="#2f2f2f"/><rect x="456.65" y="305.5" width="1.3" height="1.6" fill="#2f2f2f"/><rect x="472.82" y="305.5" width="1.3" height="1.6" fill="#2f2f2f"/><rect x="488.99" y="305.5" width="1.3" height="1.6" fill="#2f2f2f"/><rect x="505.16" y="305.5" width="1.3" height="1.6" fill="#2f2f2f"/><rect x="521.33" y="305.5" width="1.3" height="1.6" fill="#2f2f2f"/><rect x="537.5" y="305.5" width="1.3" height="1.6" fill="#2f2f2f"/><rect x="553.67" y="305.5" width="1.3" height="1.6" fill="#2f2f2f"/><rect x="569.84" y="305.5" width="1.3" height="1.6" fill="#2f2f2f"/><rect x="586.01" y="305.5" width="1.3" height="1.6" fill="#2f2f2f"/><rect x="602.18" y="305.5" width="1.3" height="1.6" fill="#2f2f2f"/><rect x="618.35" y="305.5" width="1.3" height="1.6" fill="#2f2f2f"/><rect x="636.12" y="304" width="289.06" height="14" rx="1.5" fill="#5e5e5e"/><rect x="650.69" y="305.5" width="1.3" height="1.6" fill="#2f2f2f"/><rect x="666.86" y="305.5" width="1.3" height="1.6" fill="#2f2f2f"/><rect x="683.03" y="305.5" width="1.3" height="1.6" fill="#2f2f2f"/><rect x="699.2" y="305.5" width="1.3" height="1.6" fill="#2f2f2f"/><rect x="715.37" y="305.5" width="1.3" height="1.6" fill="#2f2f2f"/><rect x="731.54" y="305.5" width="1.3" height="1.6" fill="#2f2f2f"/><rect x="747.71" y="305.5" width="1.3" height="1.6" fill="#2f2f2f"/><rect x="763.88" y="305.5" width="1.3" height="1.6" fill="#2f2f2f"/><rect x="780.05" y="305.5" width="1.3" height="1.6" fill="#2f2f2f"/><rect x="796.22" y="305.5" width="1.3" height="1.6" fill="#2f2f2f"/><rect x="812.39" y="305.5" width="1.3" height="1.6" fill="#2f2f2f"/><rect x="828.56" y="305.5" width="1.3" height="1.6" fill="#2f2f2f"/><rect x="844.73" y="305.5" width="1.3" height="1.6" fill="#2f2f2f"/><rect x="860.9" y="305.5" width="1.3" height="1.6" fill="#2f2f2f"/><rect x="877.07" y="305.5" width="1.3" height="1.6" fill="#2f2f2f"/><rect x="893.24" y="305.5" width="1.3" height="1.6" fill="#2f2f2f"/><rect x="909.41" y="305.5" width="1.3" height="1.6" fill="#2f2f2f"/><rect x="927.18" y="304" width="40.52" height="14" rx="1.5" fill="#5e5e5e"/><rect x="941.75" y="305.5" width="1.3" height="1.6" fill="#2f2f2f"/><rect x="957.92" y="305.5" width="1.3" height="1.6" fill="#2f2f2f"/><path d="M220 183 V191.5 M220 183 L225 185.5 L220 188Z" fill="#e8321e" stroke="#e8321e" stroke-width="1.2"/><path d="M236.17 183 V191.5 M236.17 183 L241.17 185.5 L236.17 188Z" fill="#e8321e" stroke="#e8321e" stroke-width="1.2"/><path d="M430.21 183 V191.5 M430.21 183 L435.21 185.5 L430.21 188Z" fill="#e8321e" stroke="#e8321e" stroke-width="1.2"/><path d="M640.42 183 V191.5 M640.42 183 L645.42 185.5 L640.42 188Z" fill="#e8321e" stroke="#e8321e" stroke-width="1.2"/><path d="M899.14 183 V191.5 M899.14 183 L904.14 185.5 L899.14 188Z" fill="#e8321e" stroke="#e8321e" stroke-width="1.2"/><path d="M931.48 183 V191.5 M931.48 183 L936.48 185.5 L931.48 188Z" fill="#e8321e" stroke="#e8321e" stroke-width="1.2"/><rect x="302.6" y="124" width="2" height="195" fill="#5b95ee"/><path d="M296.2 125 H310.9 V164 L303.6 168.5 L296.2 164Z" fill="#5a88d4" stroke="#6b9ae6" stroke-width="0.8"/></svg>
<div class="t" style="left:223.7px;top:178px;font-size:13px;color:#f2f2f2;font-weight:normal;">…</div>
<div class="t" style="left:240.87px;top:177.5px;font-size:15.5px;color:#f2f2f2;font-weight:normal;">idle</div>
<div class="t" style="left:431.91px;top:177.5px;font-size:15.5px;color:#f2f2f2;font-weight:normal;">marche</div>
<div class="t" style="left:644.1200000000001px;top:177.5px;font-size:15.5px;color:#f2f2f2;font-weight:normal;">saut</div>
<div class="t" style="left:902.8400000000001px;top:177.5px;font-size:15px;color:#f2f2f2;font-weight:normal;">cro..</div>
<div class="t" style="left:933.1800000000001px;top:177.5px;font-size:15.5px;color:#f2f2f2;font-weight:normal;width:36px;overflow:hidden">crouc</div>
<div class="a" style="left:221px;top:322.5px;width:42px;height:14px;background:#d6d6d6;border-radius:4px"></div>
<div class="a" style="left:975.5px;top:177px;width:10px;height:113px;background:#d2d2d2;border-radius:5px"></div>
<div class="a" style="left:214px;top:318px;width:2px;height:24px;background:#303030;"></div>
<svg class="a" style="left:0px;top:0px;" width="953" height="440" viewBox="0 0 953 440"><rect x="-20" y="383" width="26" height="33" rx="4" fill="#444444"/><ellipse cx="31" cy="396" rx="11" ry="7.5" fill="none" stroke="#e6e6e6" stroke-width="1.6"/><path d="M25 401 Q22 406 27 408 Q31 410 27 411" fill="none" stroke="#e6e6e6" stroke-width="1.5"/><path d="M44.6 414.6 L49.5 410 L49.5 415Z" fill="#e6e6e6"/><rect x="59" y="382" width="1.5" height="34" fill="#2b2b2b"/><path d="M98.5 390 L90.5 399" stroke="#e6e6e6" stroke-width="4.6" stroke-linecap="round"/><path d="M88.5 401.2 Q83 401 80.5 405 Q79 408.5 76.6 410.6 Q83 411.6 87 408.5 Q90 405.5 89.2 402.2Z" fill="#e6e6e6"/><circle cx="94.3" cy="404.5" r="5.6" fill="#c4c4c4" stroke="#eaeaea" stroke-width="1.2"/><path d="M146.5 390 L138.5 399" stroke="#e6e6e6" stroke-width="4.6" stroke-linecap="round"/><path d="M136.5 401.2 Q131 401 128.5 405 Q127 408.5 124.6 410.6 Q131 411.6 135 408.5 Q138 405.5 137.2 402.2Z" fill="#e6e6e6"/><g transform="translate(184.7 399.1) rotate(-45)"><rect x="-9.4" y="-7" width="18.8" height="14" rx="1.2" fill="none" stroke="#e6e6e6" stroke-width="1.6"/><rect x="-3.2" y="-7" width="12.6" height="14" rx="1" fill="#e6e6e6"/></g><rect x="222.9" y="390.9" width="20" height="17" rx="0.8" fill="#acacac" stroke="#e8e8e8" stroke-width="2"/><path d="M247 414.6 L252.1 409.8 L252.1 415Z" fill="#e6e6e6"/><line x1="272" y1="409" x2="290" y2="390" stroke="#e6e6e6" stroke-width="1.8"/><rect x="309" y="382" width="1.5" height="34" fill="#2b2b2b"/><path d="M327.3 410.3 L330.5 399.5 L337.5 393 L345 400.5 L338.5 407.5Z" fill="#e6e6e6"/><path d="M327.8 409.8 L335 402.6" stroke="#3a3a3a" stroke-width="1.1"/><circle cx="335.6" cy="402" r="1.3" fill="#3a3a3a"/><g transform="translate(344.5 393.5) rotate(45)"><rect x="-5" y="-2.8" width="10" height="5.6" rx="0.6" fill="#e6e6e6"/></g><path d="M351.5 414.6 L356.4 410 L356.4 415Z" fill="#e6e6e6"/><path d="M377 390 H395 V395 M377 390 V395 M386 390 V409 M381 409 H391" fill="none" stroke="#e6e6e6" stroke-width="2.6"/><path d="M423.2 402.4 L433.7 391.9 L443.2 399.3 L431.5 410.3Z" fill="#e6e6e6"/><path d="M427.2 389.1 L435.2 396.5" stroke="#f0f0f0" stroke-width="2.4"/><path d="M432.5 394.5 L435.2 396.8" stroke="#222" stroke-width="1.2"/><path d="M442.5 398.5 Q445.5 400 445 404.5" stroke="#e6e6e6" stroke-width="2" fill="none"/><circle cx="444.6" cy="405.6" r="2" fill="#e6e6e6"/><path d="M449.3 414.3 L453.9 410 L453.9 414.6Z" fill="#e6e6e6"/><path d="M474.5 408.8 L487 396.3" stroke="#e6e6e6" stroke-width="4.4" stroke-linecap="round"/><path d="M474.5 408.8 L487 396.3" stroke="#3a3a3a" stroke-width="1.6" stroke-linecap="round"/><path d="M482.8 393.6 L487.5 388.9 L492.7 394.1 L488 398.8Z" fill="#e6e6e6"/><circle cx="491.6" cy="390.3" r="3.4" fill="#e6e6e6"/><path d="M519.3 408.3 L526.5 402.5" stroke="#e6e6e6" stroke-width="2" stroke-linecap="round"/><path d="M522 396 L527 396.5 L531.5 389.5 L538.8 396.8 L532 401.3 L532.3 406 Z" fill="#e6e6e6"/><rect x="558" y="382" width="1.5" height="34" fill="#2b2b2b"/><g stroke="#e6e6e6" stroke-width="2.9" stroke-linecap="round"><path d="M583.3 392.5 L585 400"/><path d="M588.2 390.5 L588.6 400"/><path d="M592.4 393 L591.6 401"/><path d="M596.4 396.4 L594.2 402.5"/><path d="M578.5 399.5 L583.5 403.5"/></g><path d="M582.5 399 Q590 396 594.8 401.5 Q594 409.5 588.5 410.6 Q583.5 411 581 405Z" fill="#e6e6e6"/><path d="M598.6 414.6 L603.5 410 L603.5 415Z" fill="#e6e6e6"/><circle cx="634" cy="397" r="7.5" fill="none" stroke="#e6e6e6" stroke-width="2"/><line x1="639.5" y1="402.5" x2="646" y2="409" stroke="#e6e6e6" stroke-width="2.5"/><circle cx="677" cy="403.5" r="2.4" fill="#e6e6e6"/><circle cx="685" cy="403.5" r="2.4" fill="#e6e6e6"/><circle cx="693" cy="403.5" r="2.4" fill="#e6e6e6"/><path d="M725 394 Q727 386 735 386" fill="none" stroke="#e6e6e6" stroke-width="1.8"/><path d="M733 383 L737 386 L733 389Z" fill="#e6e6e6"/><path d="M723 391 L726 396 L729 391Z" fill="#e6e6e6"/><rect x="723.5" y="406" width="9" height="9" fill="#111" stroke="#eee" stroke-width="1.3"/><rect x="727.5" y="410" width="9" height="9" fill="#111" stroke="#eee" stroke-width="1.3"/><rect x="724.5" y="407" width="5" height="5" fill="#fff"/><rect x="760.5" y="397.5" width="27" height="27" fill="#8c7426" stroke="#fff" stroke-width="1"/><rect x="766" y="403" width="16" height="16" fill="#111"/><rect x="768.5" y="405.5" width="11" height="11" fill="#4a4a4a"/><rect x="747" y="383" width="27" height="27" fill="#b83a2d" stroke="#fff" stroke-width="1.5"/></svg>
<svg class="a" style="left:0px;top:0px;" width="953" height="505" viewBox="0 0 953 505"><rect x="0" y="484" width="7" height="2.5" fill="#eee"/><rect x="26" y="469.5" width="133" height="31" rx="3" fill="#2f2f2f"/><g transform="translate(35 473.2) scale(1.0)"><path d="M0 0 H2.6 V2.4 H5 L7 5.8 L4.6 8.6 L8.4 12.6 L10.8 9.8 L14.6 15.2 L19 13.8 V19.1 H0Z" fill="#d2d2d2"/><path d="M10.4 0.4 A8.6 8.6 0 0 0 19 9" fill="none" stroke="#d2d2d2" stroke-width="1.7"/><path d="M15 0.6 H19 V4.8 Q16 4.2 15 0.6Z" fill="#d2d2d2"/></g><path d="M730 476 V494 M721 485 H739" stroke="#eee" stroke-width="1.8"/><rect x="724" y="479" width="12" height="12" fill="none" stroke="#eee" stroke-width="1.6"/><path d="M763 487 V481 Q765 479 767 481 V486 V479 Q769 477 771 479 V486 V480 Q773 478 775 480 V491 Q774 496 769 496 Q765 496 762 492 L760 488Z" fill="#d6d6d6"/><path d="M775 479 L784 486 L777 493" fill="none" stroke="#ddd" stroke-width="1.4"/><rect x="808" y="476" width="17" height="17" fill="none" stroke="#5a5a5a" stroke-width="3" stroke-dasharray="1.5 1.5"/><rect x="811" y="479" width="11" height="11" fill="none" stroke="#666" stroke-width="1.5"/><path d="M848 478 L854 472 L860 478 M848 489 L854 495 L860 489" fill="none" stroke="#eee" stroke-width="2"/><rect x="867.5" y="469" width="90" height="31" fill="#1e1e1e" stroke="#707070" stroke-width="1.3"/></svg>
<div class="t" style="left:73px;top:474.5px;font-size:16.5px;color:#eaeaea;font-weight:normal;">clipAvatar</div>
<div class="t" style="left:879px;top:476.5px;font-size:16px;color:#f2f2f2;font-weight:normal;">100%</div>
<div class="t" style="left:0px;top:440.5px;font-size:16px;color:#efefef;font-weight:bold;">fla (Canvas)*</div>
<svg class="a" style="left:0px;top:0px;" width="953" height="526" viewBox="0 0 953 526"><rect x="2.27" y="520" width="1.2" height="6" fill="#bdbdbd"/><rect x="9.1" y="522.5" width="1" height="3.5" fill="#bdbdbd"/><rect x="15.72" y="520" width="1.2" height="6" fill="#bdbdbd"/><rect x="22.55" y="522.5" width="1" height="3.5" fill="#bdbdbd"/><rect x="29.18" y="520" width="1.2" height="6" fill="#bdbdbd"/><rect x="36" y="522.5" width="1" height="3.5" fill="#bdbdbd"/><rect x="42.63" y="520" width="1.2" height="6" fill="#bdbdbd"/><rect x="49.45" y="522.5" width="1" height="3.5" fill="#bdbdbd"/><rect x="56.08" y="505" width="1.3" height="21" fill="#d8d8d8"/><rect x="62.91" y="522.5" width="1" height="3.5" fill="#bdbdbd"/><rect x="69.53" y="520" width="1.2" height="6" fill="#bdbdbd"/><rect x="76.36" y="522.5" width="1" height="3.5" fill="#bdbdbd"/><rect x="82.98" y="520" width="1.2" height="6" fill="#bdbdbd"/><rect x="89.81" y="522.5" width="1" height="3.5" fill="#bdbdbd"/><rect x="96.44" y="520" width="1.2" height="6" fill="#bdbdbd"/><rect x="103.26" y="522.5" width="1" height="3.5" fill="#bdbdbd"/><rect x="109.89" y="520" width="1.2" height="6" fill="#bdbdbd"/><rect x="116.71" y="522.5" width="1" height="3.5" fill="#bdbdbd"/><rect x="123.34" y="505" width="1.3" height="21" fill="#d8d8d8"/><rect x="130.17" y="522.5" width="1" height="3.5" fill="#bdbdbd"/><rect x="136.79" y="520" width="1.2" height="6" fill="#bdbdbd"/><rect x="143.62" y="522.5" width="1" height="3.5" fill="#bdbdbd"/><rect x="150.24" y="520" width="1.2" height="6" fill="#bdbdbd"/><rect x="157.07" y="522.5" width="1" height="3.5" fill="#bdbdbd"/><rect x="163.7" y="520" width="1.2" height="6" fill="#bdbdbd"/><rect x="170.52" y="522.5" width="1" height="3.5" fill="#bdbdbd"/><rect x="177.15" y="520" width="1.2" height="6" fill="#bdbdbd"/><rect x="183.97" y="522.5" width="1" height="3.5" fill="#bdbdbd"/><rect x="190.6" y="505" width="1.3" height="21" fill="#d8d8d8"/><rect x="197.43" y="522.5" width="1" height="3.5" fill="#bdbdbd"/><rect x="204.05" y="520" width="1.2" height="6" fill="#bdbdbd"/><rect x="210.88" y="522.5" width="1" height="3.5" fill="#bdbdbd"/><rect x="217.5" y="520" width="1.2" height="6" fill="#bdbdbd"/><rect x="224.33" y="522.5" width="1" height="3.5" fill="#bdbdbd"/><rect x="230.96" y="520" width="1.2" height="6" fill="#bdbdbd"/><rect x="237.78" y="522.5" width="1" height="3.5" fill="#bdbdbd"/><rect x="244.41" y="520" width="1.2" height="6" fill="#bdbdbd"/><rect x="251.23" y="522.5" width="1" height="3.5" fill="#bdbdbd"/><rect x="257.86" y="505" width="1.3" height="21" fill="#d8d8d8"/><rect x="264.69" y="522.5" width="1" height="3.5" fill="#bdbdbd"/><rect x="271.31" y="520" width="1.2" height="6" fill="#bdbdbd"/><rect x="278.14" y="522.5" width="1" height="3.5" fill="#bdbdbd"/><rect x="284.76" y="520" width="1.2" height="6" fill="#bdbdbd"/><rect x="291.59" y="522.5" width="1" height="3.5" fill="#bdbdbd"/><rect x="298.22" y="520" width="1.2" height="6" fill="#bdbdbd"/><rect x="305.04" y="522.5" width="1" height="3.5" fill="#bdbdbd"/><rect x="311.67" y="520" width="1.2" height="6" fill="#bdbdbd"/><rect x="318.49" y="522.5" width="1" height="3.5" fill="#bdbdbd"/><rect x="325.12" y="505" width="1.3" height="21" fill="#d8d8d8"/><rect x="331.95" y="522.5" width="1" height="3.5" fill="#bdbdbd"/><rect x="338.57" y="520" width="1.2" height="6" fill="#bdbdbd"/><rect x="345.4" y="522.5" width="1" height="3.5" fill="#bdbdbd"/><rect x="352.02" y="520" width="1.2" height="6" fill="#bdbdbd"/><rect x="358.85" y="522.5" width="1" height="3.5" fill="#bdbdbd"/><rect x="365.48" y="520" width="1.2" height="6" fill="#bdbdbd"/><rect x="372.3" y="522.5" width="1" height="3.5" fill="#bdbdbd"/><rect x="378.93" y="520" width="1.2" height="6" fill="#bdbdbd"/><rect x="385.75" y="522.5" width="1" height="3.5" fill="#bdbdbd"/><rect x="392.38" y="505" width="1.3" height="21" fill="#d8d8d8"/><rect x="399.21" y="522.5" width="1" height="3.5" fill="#bdbdbd"/><rect x="405.83" y="520" width="1.2" height="6" fill="#bdbdbd"/><rect x="412.66" y="522.5" width="1" height="3.5" fill="#bdbdbd"/><rect x="419.28" y="520" width="1.2" height="6" fill="#bdbdbd"/><rect x="426.11" y="522.5" width="1" height="3.5" fill="#bdbdbd"/><rect x="432.74" y="520" width="1.2" height="6" fill="#bdbdbd"/><rect x="439.56" y="522.5" width="1" height="3.5" fill="#bdbdbd"/><rect x="446.19" y="520" width="1.2" height="6" fill="#bdbdbd"/><rect x="453.01" y="522.5" width="1" height="3.5" fill="#bdbdbd"/><rect x="459.64" y="505" width="1.3" height="21" fill="#d8d8d8"/><rect x="466.47" y="522.5" width="1" height="3.5" fill="#bdbdbd"/><rect x="473.09" y="520" width="1.2" height="6" fill="#bdbdbd"/><rect x="479.92" y="522.5" width="1" height="3.5" fill="#bdbdbd"/><rect x="486.54" y="520" width="1.2" height="6" fill="#bdbdbd"/><rect x="493.37" y="522.5" width="1" height="3.5" fill="#bdbdbd"/><rect x="500" y="520" width="1.2" height="6" fill="#bdbdbd"/><rect x="506.82" y="522.5" width="1" height="3.5" fill="#bdbdbd"/><rect x="513.45" y="520" width="1.2" height="6" fill="#bdbdbd"/><rect x="520.27" y="522.5" width="1" height="3.5" fill="#bdbdbd"/><rect x="526.9" y="505" width="1.3" height="21" fill="#d8d8d8"/><rect x="533.73" y="522.5" width="1" height="3.5" fill="#bdbdbd"/><rect x="540.35" y="520" width="1.2" height="6" fill="#bdbdbd"/><rect x="547.18" y="522.5" width="1" height="3.5" fill="#bdbdbd"/><rect x="553.8" y="520" width="1.2" height="6" fill="#bdbdbd"/><rect x="560.63" y="522.5" width="1" height="3.5" fill="#bdbdbd"/><rect x="567.26" y="520" width="1.2" height="6" fill="#bdbdbd"/><rect x="574.08" y="522.5" width="1" height="3.5" fill="#bdbdbd"/><rect x="580.71" y="520" width="1.2" height="6" fill="#bdbdbd"/><rect x="587.53" y="522.5" width="1" height="3.5" fill="#bdbdbd"/><rect x="594.16" y="505" width="1.3" height="21" fill="#d8d8d8"/><rect x="600.99" y="522.5" width="1" height="3.5" fill="#bdbdbd"/><rect x="607.61" y="520" width="1.2" height="6" fill="#bdbdbd"/><rect x="614.44" y="522.5" width="1" height="3.5" fill="#bdbdbd"/><rect x="621.06" y="520" width="1.2" height="6" fill="#bdbdbd"/><rect x="627.89" y="522.5" width="1" height="3.5" fill="#bdbdbd"/><rect x="634.52" y="520" width="1.2" height="6" fill="#bdbdbd"/><rect x="641.34" y="522.5" width="1" height="3.5" fill="#bdbdbd"/><rect x="647.97" y="520" width="1.2" height="6" fill="#bdbdbd"/><rect x="654.79" y="522.5" width="1" height="3.5" fill="#bdbdbd"/><rect x="661.42" y="505" width="1.3" height="21" fill="#d8d8d8"/><rect x="668.25" y="522.5" width="1" height="3.5" fill="#bdbdbd"/><rect x="674.87" y="520" width="1.2" height="6" fill="#bdbdbd"/><rect x="681.7" y="522.5" width="1" height="3.5" fill="#bdbdbd"/><rect x="688.32" y="520" width="1.2" height="6" fill="#bdbdbd"/><rect x="695.15" y="522.5" width="1" height="3.5" fill="#bdbdbd"/><rect x="701.78" y="520" width="1.2" height="6" fill="#bdbdbd"/><rect x="708.6" y="522.5" width="1" height="3.5" fill="#bdbdbd"/><rect x="715.23" y="520" width="1.2" height="6" fill="#bdbdbd"/><rect x="722.05" y="522.5" width="1" height="3.5" fill="#bdbdbd"/><rect x="728.68" y="505" width="1.3" height="21" fill="#d8d8d8"/><rect x="735.51" y="522.5" width="1" height="3.5" fill="#bdbdbd"/><rect x="742.13" y="520" width="1.2" height="6" fill="#bdbdbd"/><rect x="748.96" y="522.5" width="1" height="3.5" fill="#bdbdbd"/><rect x="755.58" y="520" width="1.2" height="6" fill="#bdbdbd"/><rect x="762.41" y="522.5" width="1" height="3.5" fill="#bdbdbd"/><rect x="769.04" y="520" width="1.2" height="6" fill="#bdbdbd"/><rect x="775.86" y="522.5" width="1" height="3.5" fill="#bdbdbd"/><rect x="782.49" y="520" width="1.2" height="6" fill="#bdbdbd"/><rect x="789.31" y="522.5" width="1" height="3.5" fill="#bdbdbd"/><rect x="795.94" y="505" width="1.3" height="21" fill="#d8d8d8"/><rect x="802.77" y="522.5" width="1" height="3.5" fill="#bdbdbd"/><rect x="809.39" y="520" width="1.2" height="6" fill="#bdbdbd"/><rect x="816.22" y="522.5" width="1" height="3.5" fill="#bdbdbd"/><rect x="822.84" y="520" width="1.2" height="6" fill="#bdbdbd"/><rect x="829.67" y="522.5" width="1" height="3.5" fill="#bdbdbd"/><rect x="836.3" y="520" width="1.2" height="6" fill="#bdbdbd"/><rect x="843.12" y="522.5" width="1" height="3.5" fill="#bdbdbd"/><rect x="849.75" y="520" width="1.2" height="6" fill="#bdbdbd"/><rect x="856.57" y="522.5" width="1" height="3.5" fill="#bdbdbd"/><rect x="863.2" y="505" width="1.3" height="21" fill="#d8d8d8"/><rect x="870.03" y="522.5" width="1" height="3.5" fill="#bdbdbd"/><rect x="876.65" y="520" width="1.2" height="6" fill="#bdbdbd"/><rect x="883.48" y="522.5" width="1" height="3.5" fill="#bdbdbd"/><rect x="890.1" y="520" width="1.2" height="6" fill="#bdbdbd"/><rect x="896.93" y="522.5" width="1" height="3.5" fill="#bdbdbd"/><rect x="903.56" y="520" width="1.2" height="6" fill="#bdbdbd"/><rect x="910.38" y="522.5" width="1" height="3.5" fill="#bdbdbd"/><rect x="917.01" y="520" width="1.2" height="6" fill="#bdbdbd"/><rect x="923.83" y="522.5" width="1" height="3.5" fill="#bdbdbd"/><rect x="930.46" y="505" width="1.3" height="21" fill="#d8d8d8"/><rect x="937.29" y="522.5" width="1" height="3.5" fill="#bdbdbd"/><rect x="943.91" y="520" width="1.2" height="6" fill="#bdbdbd"/><rect x="950.74" y="522.5" width="1" height="3.5" fill="#bdbdbd"/></svg>
<div class="t" style="left:-7.579999999999984px;top:507px;font-size:14.5px;color:#dadada;font-weight:normal;transform:none">300</div>
<div class="t" style="left:59.68000000000001px;top:507px;font-size:14.5px;color:#dadada;font-weight:normal;transform:none">250</div>
<div class="t" style="left:126.94px;top:507px;font-size:14.5px;color:#dadada;font-weight:normal;transform:none">200</div>
<div class="t" style="left:194.20000000000002px;top:507px;font-size:14.5px;color:#dadada;font-weight:normal;transform:none">150</div>
<div class="t" style="left:261.46000000000004px;top:507px;font-size:14.5px;color:#dadada;font-weight:normal;transform:none">100</div>
<div class="t" style="left:328.72px;top:507px;font-size:14.5px;color:#dadada;font-weight:normal;transform:none">50</div>
<div class="t" style="left:395.98px;top:507px;font-size:14.5px;color:#dadada;font-weight:normal;transform:none">0</div>
<div class="t" style="left:463.24px;top:507px;font-size:14.5px;color:#dadada;font-weight:normal;transform:none">50</div>
<div class="t" style="left:530.5px;top:507px;font-size:14.5px;color:#dadada;font-weight:normal;transform:none">100</div>
<div class="t" style="left:597.76px;top:507px;font-size:14.5px;color:#dadada;font-weight:normal;transform:none">150</div>
<div class="t" style="left:665.02px;top:507px;font-size:14.5px;color:#dadada;font-weight:normal;transform:none">200</div>
<div class="t" style="left:732.28px;top:507px;font-size:14.5px;color:#dadada;font-weight:normal;transform:none">250</div>
<div class="t" style="left:799.54px;top:507px;font-size:14.5px;color:#dadada;font-weight:normal;transform:none">300</div>
<div class="t" style="left:866.8px;top:507px;font-size:14.5px;color:#dadada;font-weight:normal;transform:none">350</div>
<div class="t" style="left:934.0600000000001px;top:507px;font-size:14.5px;color:#dadada;font-weight:normal;transform:none">400</div>
<svg class="a" style="left:0px;top:526px;background:#fff;" width="951" height="828" viewBox="0 0 951 828"><path d="M2.87 0V828M16.32 0V828M29.77 0V828M43.23 0V828M56.68 0V828M70.13 0V828M83.58 0V828M97.03 0V828M110.49 0V828M123.94 0V828M137.39 0V828M150.84 0V828M164.29 0V828M177.75 0V828M191.2 0V828M204.65 0V828M218.1 0V828M231.55 0V828M245.01 0V828M258.46 0V828M271.91 0V828M285.36 0V828M298.81 0V828M312.27 0V828M325.72 0V828M339.17 0V828M352.62 0V828M366.07 0V828M379.53 0V828M392.98 0V828M406.43 0V828M419.88 0V828M433.33 0V828M446.79 0V828M460.24 0V828M473.69 0V828M487.14 0V828M500.59 0V828M514.05 0V828M527.5 0V828M540.95 0V828M554.4 0V828M567.85 0V828M581.31 0V828M594.76 0V828M608.21 0V828M621.66 0V828M635.11 0V828M648.57 0V828M662.02 0V828M675.47 0V828M688.92 0V828M702.37 0V828M715.83 0V828M729.28 0V828M742.73 0V828M756.18 0V828M769.63 0V828M783.09 0V828M796.54 0V828M809.99 0V828M823.44 0V828M836.89 0V828M850.35 0V828M863.8 0V828M877.25 0V828M890.7 0V828M904.15 0V828M917.61 0V828M931.06 0V828M944.51 0V828M0 8H951M0 21.45H951M0 34.91H951M0 48.36H951M0 61.82H951M0 75.27H951M0 88.72H951M0 102.18H951M0 115.63H951M0 129.09H951M0 142.54H951M0 155.99H951M0 169.45H951M0 182.9H951M0 196.36H951M0 209.81H951M0 223.26H951M0 236.72H951M0 250.17H951M0 263.63H951M0 277.08H951M0 290.53H951M0 303.99H951M0 317.44H951M0 330.9H951M0 344.35H951M0 357.8H951M0 371.26H951M0 384.71H951M0 398.17H951M0 411.62H951M0 425.07H951M0 438.53H951M0 451.98H951M0 465.44H951M0 478.89H951M0 492.34H951M0 505.8H951M0 519.25H951M0 532.71H951M0 546.16H951M0 559.61H951M0 573.07H951M0 586.52H951M0 599.98H951M0 613.43H951M0 626.88H951M0 640.34H951M0 653.79H951M0 667.25H951M0 680.7H951M0 694.15H951M0 707.61H951M0 721.06H951M0 734.52H951M0 747.97H951M0 761.42H951M0 774.88H951M0 788.33H951M0 801.79H951M0 815.24H951M0 828.69H951" stroke="#9c9c9c" stroke-width="1.35" fill="none"/><rect x="0" y="265.5" width="951" height="1.8" fill="#7ff3f6"/><rect x="0" y="333.6" width="951" height="1.8" fill="#7ff3f6"/><rect x="0" y="394" width="951" height="1.8" fill="#7ff3f6"/><rect x="0" y="462.6" width="951" height="1.8" fill="#7ff3f6"/><rect x="0" y="491.1" width="951" height="1.8" fill="#7ff3f6"/><rect x="0" y="558.6" width="951" height="1.8" fill="#7ff3f6"/><rect x="210" y="0" width="2.6" height="828" fill="#7ff3f6"/><rect x="214.2" y="0" width="1.8" height="828" fill="#7ff3f6"/></svg>
<svg class="a" style="left:0;top:0" width="953" height="1373"><polygon points="333.5,1078.7 343.7,1071.4 356.8,1059.7 369.9,1061.2 368.5,1084.5 352.4,1088.0 334.4,1086.0" fill="#efb97a" stroke="#141414" stroke-width="0.8"/><polygon points="407.8,1061.2 428.2,1059.7 431.7,1075.8 436.9,1081.6 434.0,1087.4 410.7,1087.4" fill="#efb97a" stroke="#141414" stroke-width="0.8"/><polygon points="420.9,816.5 436.9,822.3 442.7,863.1 445.6,886.4 435.5,892.3 428.2,874.8 425.3,851.5" fill="#efb97a" stroke="#141414" stroke-width="0.8"/><polygon points="378.1,863.1 420.9,863.1 420.0,895.2 393.2,901.0 374.3,886.4" fill="#efb97a" stroke="#141414" stroke-width="0.8"/><polygon points="372.8,883.5 393.2,898.1 419.4,890.8 420.9,927.2 416.5,979.6 429.6,1058.3 402.0,1061.2 393.2,991.3 384.5,941.8 367.0,921.4" fill="#cfcfcf" stroke="#141414" stroke-width="0.9"/><polygon points="359.7,909.7 375.7,921.4 385.9,941.8 369.9,985.5 371.4,1058.3 342.2,1059.7 342.2,976.7 352.4,933.0" fill="#151515"/><polygon points="356.8,921.4 362.6,912.6 371.4,906.8 374.3,921.4 384.5,930.1 385.9,941.8 377.2,938.9 371.4,930.1 359.7,930.1" fill="#f2c322"/><polygon points="394.7,809.2 420.9,809.2 407.8,832.5" fill="#efb97a"/><polygon points="381.6,812.1 397.6,812.1 407.8,828.2 419.4,812.1 426.7,851.5 420.9,870.4 377.2,870.4 376.3,839.8" fill="#141414"/><polygon points="381.6,816.5 367.0,822.3 358.3,851.5 361.2,863.1 387.4,854.4 412.1,851.5 415.1,836.9 396.1,834.0 383.0,842.7" fill="#efb97a" stroke="#141414" stroke-width="0.8"/><polygon points="392.6,784.5 423.8,784.5 422.3,799.0 415.1,810.7 404.9,813.6 396.1,804.9" fill="#efb97a" stroke="#141414" stroke-width="0.8"/><path d="M388.3 793.2 Q385.9 764.1 407.8 763.5 Q429.6 765.5 425.8 790.3 L420.9 784.5 L396.1 783.0Z" fill="#3d2a12"/><polygon points="374.3,735.0 386.8,721.8 384.5,733.5 399.0,739.3 407.2,753.9 402.0,762.6 390.3,758.3 378.6,748.1" fill="#3d2a12"/><rect x="399.0" y="760.6" width="5.8" height="3.5" fill="#e8c020"/><rect x="398.5" y="792.6" width="9.3" height="5.8" fill="#fff" stroke="#141414" stroke-width="0.8"/><rect x="410.1" y="792.6" width="9.3" height="5.8" fill="#fff" stroke="#141414" stroke-width="0.8"/><path d="M385 1083 H398 M391.5 1077 V1090" stroke="#222" stroke-width="1"/></svg>
<div class="a" style="left:0px;top:1354px;width:953px;height:2px;background:#2b2b2b;"></div>
<div class="a" style="left:0px;top:1356px;width:953px;height:17px;background:#3a3a3a;"></div>
<div class="a" style="left:110.6px;top:1361px;width:346px;height:9px;background:#d8d8d8;border-radius:5px"></div>
</div>
<div class="a" id="P" style="left:993px;top:52px;width:279px;height:301px;background:#373737;overflow:hidden">
<div class="a" style="left:0px;top:0px;width:279px;height:18px;background:#3a3a3a;"></div>
<div class="a" style="left:0px;top:17.5px;width:279px;height:1.2px;background:#2f2f2f;"></div>
<div class="a" style="left:0px;top:18.5px;width:279px;height:21px;background:#353535;"></div>
<div class="a" style="left:0px;top:18.5px;width:90px;height:21px;background:#3b3b3b;"></div>
<div class="a" style="left:90px;top:18.5px;width:1.2px;height:21px;background:#2f2f2f;"></div>
<div class="a" style="left:0px;top:39px;width:279px;height:1.2px;background:#2f2f2f;"></div>
<div class="t" style="left:9px;top:20.5px;font-size:17px;color:#f2f2f2;font-weight:bold;">Propriétés</div>
<div class="t" style="left:215px;top:66px;font-size:18.5px;color:#9c9c9c;font-weight:normal;">Outil</div>
<div class="a" style="left:267.5px;top:57px;width:2px;height:35px;background:#555;"></div>
<div class="a" style="left:0px;top:102px;width:279px;height:2.5px;background:#2b2b2b;"></div>
<svg class="a" style="left:0px;top:0px;" width="279" height="301" viewBox="0 0 279 301"><rect x="28" y="111" width="21.5" height="20.5" fill="none" stroke="#d0d0d0" stroke-width="1.4"/><rect x="27.5" y="187.5" width="31.5" height="32" rx="5" fill="#4e4e4e" stroke="#8a8a8a" stroke-width="1.3"/><rect x="76.0" y="187.5" width="31.5" height="32" rx="5" fill="#4e4e4e" stroke="#8a8a8a" stroke-width="1.3"/><rect x="124.5" y="187.5" width="31.5" height="32" rx="5" fill="#4e4e4e" stroke="#8a8a8a" stroke-width="1.3"/><rect x="173.0" y="187.5" width="31.5" height="32" rx="5" fill="#1f1f1f" stroke="#8a8a8a" stroke-width="1.3"/><path d="M36 212 V201 A7 7 0 0 1 50 201 V212" fill="none" stroke="#f0f0f0" stroke-width="4.5"/><path d="M82 197 H100 M88 192 V214 M84 194 L93 202 M91 205 H98 A4 4 0 0 1 98 213 H92" fill="none" stroke="#eee" stroke-width="1.6"/><path d="M131 215 V195 H151" fill="none" stroke="#eee" stroke-width="4"/><path d="M182 206 V202 A5 5 0 0 1 192 202 V206" fill="none" stroke="#eee" stroke-width="2.2"/><rect x="179" y="206" width="16" height="10.5" rx="1" fill="#eee"/><circle cx="187" cy="210.5" r="1.8" fill="#222"/><path d="M26 248 L32.5 255 L39 248" fill="none" stroke="#eee" stroke-width="2.3"/><rect x="75.5" y="276" width="215" height="30" rx="4" fill="#2f2f2f" stroke="#6a6a6a" stroke-width="1.3"/></svg>
<div class="a" style="left:0px;top:174px;width:279px;height:2.5px;background:#2b2b2b;"></div>
<div class="a" style="left:0px;top:232px;width:279px;height:2.5px;background:#2b2b2b;"></div>
<div class="t" style="left:32px;top:114px;font-size:13.5px;color:#e0e0e0;font-weight:normal;">An</div>
<div class="t" style="left:78px;top:114.5px;font-size:17px;color:#f0f0f0;font-weight:normal;">animate.fla</div>
<div class="t" style="left:78px;top:143px;font-size:16.5px;color:#ececec;font-weight:normal;font-style:italic">Document HTML5 Canvas</div>
<div class="t" style="left:54px;top:244px;font-size:17px;color:#f0f0f0;font-weight:bold;">Paramètres de publication</div>
<div class="t" style="left:27px;top:284px;font-size:17px;color:#eaeaea;font-weight:normal;">Profil</div>
<div class="t" style="left:87px;top:284px;font-size:17px;color:#f0f0f0;font-weight:normal;">Par défaut</div>
</div>
<div class="a" id="C" style="left:953px;top:353px;width:358px;height:1020px;background:#373737;overflow:hidden;border-top-left-radius:9px">
<div class="a" style="left:0px;top:0px;width:358px;height:36px;background:#373737;"></div>
<div class="a" style="left:0px;top:35.5px;width:358px;height:1.2px;background:#2d2d2d;"></div>
<div class="a" style="left:0px;top:36.5px;width:358px;height:11px;background:#353535;"></div>
<div class="a" style="left:0px;top:47px;width:358px;height:18px;background:#323232;"></div>
<div class="a" style="left:0px;top:47px;width:54px;height:18px;background:#393939;"></div>
<div class="a" style="left:54px;top:47px;width:1.2px;height:18px;background:#2b2b2b;"></div>
<div class="a" style="left:120px;top:47px;width:1.2px;height:18px;background:#2b2b2b;"></div>
<div class="a" style="left:0px;top:64.5px;width:358px;height:1px;background:#2e2e2e;"></div>
<svg class="a" style="left:0px;top:0px;" width="358" height="440" viewBox="0 0 358 440"><circle cx="14.5" cy="13.5" r="6.3" fill="#ec6a5e"/><circle cx="34.5" cy="13.5" r="6.3" fill="#f4bf4f"/><circle cx="54.5" cy="13.5" r="6.3" fill="#61c554"/><path d="M78 16.5 L86.20000000000005 8.300000000000011 L94.40000000000009 16.5 L92.59999999999991 16.5 L92.59999999999991 22.69999999999999 L88.79999999999995 22.69999999999999 L88.79999999999995 18 L83.59999999999991 18 L83.59999999999991 22.69999999999999 L79.79999999999995 22.69999999999999 L79.79999999999995 16.5Z" fill="#e6e6e6"/><rect x="106" y="29" width="62" height="2.5" fill="#cfcfcf"/><rect x="174" y="5" width="1.2" height="22" fill="#474747"/><path d="M9 38 L6 41 L9 44 M13 38 L10 41 L13 44" fill="none" stroke="#bbb" stroke-width="1"/><rect x="20" y="82" width="32" height="20" rx="3" fill="#5d5d5d"/><path d="M28 91 L35 85 L43 93 L36 99Z" fill="#f0f0f0"/><path d="M43 93 Q46 96 44 99" fill="none" stroke="#f0f0f0" stroke-width="1.5"/><rect x="56.5" y="82" width="27" height="20" rx="2" fill="#b83a2e" stroke="#4a2020" stroke-width="0.5"/><path d="M29 123 L31 117 L41 108 L44 111 L35 120Z" fill="#dcdcdc"/><rect x="56.5" y="106" width="27" height="20" rx="2" fill="#8c7226"/><rect x="25" y="133" width="7" height="7" fill="none" stroke="#eee" stroke-width="1.2"/><rect x="28" y="136" width="7" height="7" fill="#111" stroke="#eee" stroke-width="1.2"/><rect x="46.5" y="133" width="11" height="11" fill="#f2f2f2"/><line x1="47" y1="143.5" x2="57" y2="133.5" stroke="#e03020" stroke-width="1.5"/><rect x="67" y="133" width="5" height="5" fill="#eee"/><rect x="67" y="139" width="5" height="5" fill="#eee"/><path d="M74 135 Q79 138 74 142" fill="none" stroke="#eee" stroke-width="1.3"/><rect x="117.5" y="82.5" width="119" height="19.5" rx="3" fill="#303030" stroke="#717171" stroke-width="1.2"/><path d="M218 89 L223 94 L228 89" fill="none" stroke="#eee" stroke-width="1.5"/><defs><linearGradient id="gsat" x1="0" x2="1" y1="0" y2="0"><stop offset="0" stop-color="#fff"/><stop offset="1" stop-color="#f00"/></linearGradient><linearGradient id="gval" x1="0" x2="0" y1="0" y2="1"><stop offset="0" stop-color="#000" stop-opacity="0"/><stop offset="1" stop-color="#000"/></linearGradient><linearGradient id="ghue" x1="0" x2="0" y1="0" y2="1"><stop offset="0" stop-color="#f00"/><stop offset="0.17" stop-color="#f0f"/><stop offset="0.33" stop-color="#00f"/><stop offset="0.5" stop-color="#0ff"/><stop offset="0.67" stop-color="#0f0"/><stop offset="0.83" stop-color="#ff0"/><stop offset="1" stop-color="#ff3a10"/></linearGradient></defs><rect x="14.5" y="158.5" width="156" height="155" fill="#111"/><rect x="16" y="160" width="153" height="152" fill="url(#gsat)"/><rect x="16" y="160" width="153" height="152" fill="url(#gval)"/><circle cx="141" cy="196.5" r="5" fill="none" stroke="#fff" stroke-width="1.3"/><rect x="177.5" y="158.5" width="11.5" height="155" fill="#111"/><rect x="179" y="160" width="8.5" height="152" fill="url(#ghue)"/><path d="M173 306 L178 310 L173 314Z M194 306 L189 310 L194 314Z" fill="none" stroke="#111" stroke-width="1"/><circle cx="206.5" cy="169" r="5.3" fill="none" stroke="#e6e6e6" stroke-width="1.6"/><circle cx="206.5" cy="169" r="2.6" fill="#f0f0f0"/><circle cx="206.5" cy="193" r="5.3" fill="none" stroke="#e6e6e6" stroke-width="1.6"/><circle cx="206.5" cy="217" r="5.3" fill="none" stroke="#e6e6e6" stroke-width="1.6"/><circle cx="206.5" cy="253" r="5.3" fill="none" stroke="#e6e6e6" stroke-width="1.6"/><circle cx="206.5" cy="277" r="5.3" fill="none" stroke="#e6e6e6" stroke-width="1.6"/><circle cx="206.5" cy="301" r="5.3" fill="none" stroke="#e6e6e6" stroke-width="1.6"/><rect x="63.5" y="319" width="73" height="22" rx="3" fill="#1f1f1f" stroke="#8a8a8a" stroke-width="1.2"/><rect x="13" y="348.5" width="199" height="39" fill="#1e1e1e"/><rect x="15" y="350.5" width="195" height="35" fill="#b6392d"/><rect x="13.5" y="402.5" width="140" height="24" rx="3" fill="#313131" stroke="#7a7a7a" stroke-width="1.2"/></svg>
<div class="t" style="left:116px;top:7px;font-size:13.5px;color:#ececec;font-weight:normal;">Animate</div>
<div class="t" style="left:7px;top:50px;font-size:12.5px;color:#f2f2f2;font-weight:bold;">Couleur</div>
<div class="t" style="left:60px;top:50px;font-size:12.5px;color:#8e8e8e;font-weight:bold;">Nuanciers</div>
<div class="t" style="left:126px;top:85.5px;font-size:13.5px;color:#eeeeee;font-weight:normal;">Couleur unie</div>
<div class="t" style="left:221px;top:162.5px;font-size:12.5px;color:#e6e6e6;font-weight:normal;">H:</div>
<div class="t" style="left:241px;top:162.5px;font-size:12.5px;color:#8ebcf2;font-weight:normal;">0</div>
<div class="t" style="left:250.29999999999995px;top:162.5px;font-size:12.5px;color:#eeeeee;font-weight:normal;">°</div>
<div class="t" style="left:221px;top:186.5px;font-size:12.5px;color:#e6e6e6;font-weight:normal;">S:</div>
<div class="t" style="left:241px;top:186.5px;font-size:12.5px;color:#8ebcf2;font-weight:normal;">83</div>
<div class="t" style="left:257.5999999999999px;top:186.5px;font-size:12.5px;color:#eeeeee;font-weight:normal;">%</div>
<div class="t" style="left:221px;top:210.5px;font-size:12.5px;color:#e6e6e6;font-weight:normal;">B:</div>
<div class="t" style="left:241px;top:210.5px;font-size:12.5px;color:#8ebcf2;font-weight:normal;">76</div>
<div class="t" style="left:257.5999999999999px;top:210.5px;font-size:12.5px;color:#eeeeee;font-weight:normal;">%</div>
<div class="t" style="left:221px;top:246.5px;font-size:12.5px;color:#e6e6e6;font-weight:normal;">R:</div>
<div class="t" style="left:241px;top:246.5px;font-size:12.5px;color:#8ebcf2;font-weight:normal;">195</div>
<div class="t" style="left:221px;top:270.5px;font-size:12.5px;color:#e6e6e6;font-weight:normal;">G:</div>
<div class="t" style="left:241px;top:270.5px;font-size:12.5px;color:#8ebcf2;font-weight:normal;">34</div>
<div class="t" style="left:221px;top:294.5px;font-size:12.5px;color:#e6e6e6;font-weight:normal;">B:</div>
<div class="t" style="left:241px;top:294.5px;font-size:12.5px;color:#8ebcf2;font-weight:normal;">34</div>
<div class="t" style="left:222px;top:319.5px;font-size:12.5px;color:#e6e6e6;font-weight:normal;">A :</div>
<div class="t" style="left:241px;top:319.5px;font-size:12.5px;color:#8ebcf2;font-weight:normal;">100</div>
<div class="t" style="left:264px;top:319.5px;font-size:12.5px;color:#eeeeee;font-weight:normal;">%</div>
<div class="t" style="left:51px;top:325px;font-size:11px;color:#cfcfcf;font-weight:normal;">#</div>
<div class="t" style="left:71px;top:325px;font-size:12.5px;color:#f2f2f2;font-weight:normal;">C32222</div>
<div class="t" style="left:30px;top:408px;font-size:12.5px;color:#f0f0f0;font-weight:normal;">Ajouter aux nuanciers</div>
<div class="a" style="left:0px;top:431px;width:358px;height:2px;background:#2b2b2b;"></div>
<div class="a" style="left:0px;top:433px;width:358px;height:17px;background:#323232;"></div>
<div class="a" style="left:0px;top:433px;width:51px;height:17px;background:#393939;"></div>
<div class="a" style="left:51px;top:433px;width:1px;height:17px;background:#2b2b2b;"></div>
<div class="a" style="left:131px;top:433px;width:1px;height:17px;background:#2b2b2b;"></div>
<div class="a" style="left:171px;top:433px;width:1px;height:17px;background:#2b2b2b;"></div>
<div class="a" style="left:0px;top:449.5px;width:358px;height:1px;background:#2e2e2e;"></div>
<div class="t" style="left:7px;top:435px;font-size:12px;color:#f2f2f2;font-weight:bold;">Aligner</div>
<div class="t" style="left:58px;top:435px;font-size:12px;color:#8c8c8c;font-weight:bold;">Transformer</div>
<div class="t" style="left:138px;top:435px;font-size:12px;color:#8c8c8c;font-weight:bold;">Infos</div>
<div class="t" style="left:16px;top:462.5px;font-size:12.5px;color:#e8e8e8;font-weight:normal;">Aligner :</div>
<div class="t" style="left:15px;top:509px;font-size:12.5px;color:#e8e8e8;font-weight:normal;">Distribuer :</div>
<div class="t" style="left:16px;top:555px;font-size:12.5px;color:#e8e8e8;font-weight:normal;">Ajuster la taille :</div>
<div class="t" style="left:115px;top:555px;font-size:12.5px;color:#e8e8e8;font-weight:normal;">Espace :</div>
<div class="t" style="left:40px;top:613.5px;font-size:12.5px;color:#ececec;font-weight:normal;">Aligner sur la scène</div>
<svg class="a" style="left:0;top:0" width="358" height="1020" viewBox="0 0 358 1020"><path d="M342 437h13M342 439.70000000000005h13M342 442.29999999999995h13M342 445h13" stroke="#c4c4c4" stroke-width="1"/><rect x="20" y="481.5" width="1.5" height="18" fill="#e0e0e0"/><rect x="22" y="483.5" width="8" height="5" fill="#e0e0e0"/><rect x="22" y="491.5" width="13" height="5" fill="#e0e0e0"/><rect x="55.3" y="481.5" width="1.5" height="18" fill="#e0e0e0"/><rect x="52" y="483.5" width="8" height="5" fill="#e0e0e0"/><rect x="49.5" y="491.5" width="13" height="5" fill="#e0e0e0"/><rect x="91" y="481.5" width="1.5" height="18" fill="#e0e0e0"/><rect x="82" y="483.5" width="8" height="5" fill="#e0e0e0"/><rect x="77" y="491.5" width="13" height="5" fill="#e0e0e0"/><rect x="119" y="482.5" width="18" height="1.5" fill="#e0e0e0"/><rect x="121" y="484.5" width="5" height="13" fill="#e0e0e0"/><rect x="129" y="484.5" width="5" height="8" fill="#e0e0e0"/><rect x="146" y="489.8" width="18" height="1.5" fill="#e0e0e0"/><rect x="148" y="484.0" width="5" height="13" fill="#e0e0e0"/><rect x="156" y="486.5" width="5" height="8" fill="#e0e0e0"/><rect x="173" y="497.5" width="18" height="1.5" fill="#e0e0e0"/><rect x="175" y="484.5" width="5" height="13" fill="#e0e0e0"/><rect x="183" y="489.5" width="5" height="8" fill="#e0e0e0"/><rect x="19" y="528" width="18" height="1.3" fill="#e0e0e0"/><rect x="22" y="530" width="12" height="4" fill="#e0e0e0"/><rect x="19" y="536" width="18" height="1.3" fill="#e0e0e0"/><rect x="22" y="538" width="12" height="5" fill="#e0e0e0"/><rect x="46" y="531" width="18" height="1.3" fill="#e0e0e0"/><rect x="50" y="528.5" width="10" height="5" fill="#e0e0e0"/><rect x="46" y="540" width="18" height="1.3" fill="#e0e0e0"/><rect x="49" y="537.5" width="12" height="5" fill="#e0e0e0"/><rect x="78" y="528" width="10" height="4" fill="#e0e0e0"/><rect x="74" y="533" width="18" height="1.3" fill="#e0e0e0"/><rect x="77" y="536" width="12" height="5" fill="#e0e0e0"/><rect x="74" y="543" width="18" height="1.3" fill="#e0e0e0"/><rect x="118" y="527" width="1.3" height="18" fill="#e0e0e0"/><rect x="120" y="529" width="5" height="14" fill="#e0e0e0"/><rect x="126" y="527" width="1.3" height="18" fill="#e0e0e0"/><rect x="128" y="532" width="4" height="8" fill="#e0e0e0"/><rect x="147" y="529" width="5" height="14" fill="#e0e0e0"/><rect x="149" y="527" width="1.3" height="18" fill="#e0e0e0"/><rect x="156" y="529" width="5" height="14" fill="#e0e0e0"/><rect x="158" y="527" width="1.3" height="18" fill="#e0e0e0"/><rect x="174" y="529" width="5" height="14" fill="#e0e0e0"/><rect x="180" y="527" width="1.3" height="18" fill="#e0e0e0"/><rect x="182" y="532" width="4" height="8" fill="#e0e0e0"/><rect x="188" y="527" width="1.3" height="18" fill="#e0e0e0"/><rect x="22" y="575" width="14" height="1.3" fill="#e0e0e0"/><rect x="23" y="577" width="12" height="6" fill="#e0e0e0"/><rect x="22" y="585" width="14" height="5" fill="#e0e0e0"/><rect x="49" y="575" width="5" height="14" fill="#e0e0e0"/><rect x="55" y="577" width="6" height="10" fill="#e0e0e0"/><rect x="54" y="589" width="9" height="1.3" fill="#e0e0e0"/><rect x="75" y="574" width="6" height="8" fill="#e0e0e0"/><rect x="75" y="583" width="8" height="6" fill="#e0e0e0"/><rect x="84" y="584" width="7" height="6" fill="#e0e0e0"/><rect x="123" y="575" width="10" height="7" fill="#e0e0e0"/><rect x="123" y="583" width="14" height="6" fill="#e0e0e0"/><path d="M119 579 V587" stroke="#e0e0e0" stroke-width="1.3"/><rect x="148" y="578" width="6" height="13" fill="#e0e0e0"/><rect x="155" y="580" width="6" height="8" fill="#e0e0e0"/><path d="M150 575 H158" stroke="#e0e0e0" stroke-width="1.3"/><rect x="15" y="603" width="326" height="1.2" fill="#4a4a4a"/><rect x="19.5" y="614.5" width="11" height="11" rx="1.5" fill="none" stroke="#cfcfcf" stroke-width="1.6"/><rect x="0" y="633" width="358" height="4" fill="#2b2b2b"/><rect x="0" y="637" width="358" height="16" fill="#323232"/><rect x="0" y="637" width="62" height="16" fill="#393939"/><rect x="62" y="637" width="1" height="16" fill="#2b2b2b"/><path d="M342 640h13M342 642.7h13M342 645.3h13M342 648h13" stroke="#c4c4c4" stroke-width="1"/><rect x="2.5" y="655.5" width="355" height="171" rx="4" fill="#373737" stroke="#4a4a4a" stroke-width="1.2"/><rect x="5" y="665" width="14" height="10" fill="#8a8a8a"/><path d="M5 664 L18 660" stroke="#8a8a8a" stroke-width="2.5" stroke-dasharray="2 1.5"/><rect x="4.5" y="810" width="11" height="11" fill="none" stroke="#555" stroke-width="1.2"/><rect x="21" y="810" width="10" height="10" fill="#4e4e4e"/><rect x="25" y="814" width="8" height="8" fill="#555"/><rect x="38" y="811" width="10" height="11" fill="#4a4a4a"/><rect x="0" y="829" width="358" height="18" fill="#323232"/><rect x="0" y="829" width="163" height="18" fill="#393939"/><rect x="163" y="829" width="1" height="18" fill="#2b2b2b"/><rect x="0" y="847" width="358" height="6.5" fill="#494949"/><path d="M342 833h13M342 835.7h13M342 838.3h13M342 841h13" stroke="#c4c4c4" stroke-width="1"/><circle cx="92" cy="865" r="4.5" fill="none" stroke="#ddd" stroke-width="1.5"/><line x1="95" y1="868" x2="99" y2="872" stroke="#ddd" stroke-width="1.8"/><rect x="103.5" y="856.5" width="250" height="18" rx="4" fill="#1f1f1f" stroke="#6e6e6e" stroke-width="1.2"/><rect x="4.5" y="879.5" width="349" height="108" rx="4" fill="#373737" stroke="#4a4a4a" stroke-width="1.2"/><path d="M11 887 L16 892.5 L11 898" fill="none" stroke="#eee" stroke-width="1.8"/><path d="M29 885 H36 L38 887 H45 V898 H29Z" fill="#d6d6d6"/><path d="M29 910 H36 L38 912 H44 V915 H34 L29 923Z" fill="#d0d0d0"/><path d="M33 915 H46 L42 923 H29Z" fill="#e6e6e6"/><rect x="9.5" y="998.5" width="11" height="11" fill="none" stroke="#e0e0e0" stroke-width="1.3"/><path d="M15 1001 V1007 M12 1004 H18" stroke="#e0e0e0" stroke-width="1.3"/><path d="M32 998 H38 L40 1000 H46 V1009 H32Z" fill="#d6d6d6"/><rect x="58" y="999" width="9" height="11" fill="none" stroke="#555" stroke-width="1.2"/><rect x="263.5" y="995.5" width="79" height="19" rx="3" fill="#373737" stroke="#555" stroke-width="1.2"/><rect x="358" y="0" width="3" height="1020" fill="#2b2b2b"/></svg>
<div class="t" style="left:7px;top:638.5px;font-size:12px;color:#f2f2f2;font-weight:bold;">Séquence</div>
<div class="t" style="left:25px;top:662.5px;font-size:12.5px;color:#bdbdbd;font-weight:normal;">Séquence 1</div>
<div class="t" style="left:7px;top:831px;font-size:12px;color:#f2f2f2;font-weight:bold;">Présélections de mouvement</div>
<div class="t" style="left:6px;top:860.5px;font-size:12.5px;color:#eaeaea;font-weight:normal;">32 éléments</div>
<div class="t" style="left:51px;top:886.5px;font-size:12.5px;color:#eaeaea;font-weight:normal;">Présélections par défaut</div>
<div class="t" style="left:51px;top:911px;font-size:12.5px;color:#eaeaea;font-weight:normal;">Présélections personnalisées</div>
<div class="t" style="left:279px;top:998px;font-size:13px;color:#8a8a8a;font-weight:normal;">Appliquer</div>
</div>
<div class="a" id="BR" style="left:0;top:0;width:2440px;height:1373px;overflow:hidden;clip-path:inset(587px 0 0 1311px)">
<div class="a" style="left:1311px;top:587px;width:1129px;height:786px;background:#373737;"></div>
<div class="a" style="left:1311px;top:587px;width:3px;height:786px;background:#2b2b2b;"></div>
<div class="a" style="left:1314px;top:587px;width:804px;height:16px;background:#3a3a3a;"></div>
<div class="a" style="left:1543px;top:587px;width:1px;height:16px;background:#2f2f2f;"></div>
<div class="a" style="left:1583px;top:590px;width:31.5px;height:8px;background:#d6d6d6;border-radius:3px"></div>
<div class="a" style="left:1314px;top:602px;width:807px;height:2.5px;background:#2b2b2b;"></div>
<div class="a" style="left:1314px;top:604.5px;width:804px;height:17px;background:#373737;"></div>
<div class="a" style="left:1314px;top:604.5px;width:45px;height:17px;background:#393939;"></div>
<div class="a" style="left:1359px;top:604.5px;width:1px;height:17px;background:#2f2f2f;"></div>
<div class="a" style="left:1314px;top:621px;width:804px;height:1px;background:#2f2f2f;"></div>
<div class="t" style="left:1321px;top:606.5px;font-size:12.5px;color:#f2f2f2;font-weight:bold;">Outils</div>
<div class="a" style="left:1314px;top:622px;width:804px;height:49px;background:#383838;"></div>
<div class="a" style="left:1314px;top:670.5px;width:807px;height:2.5px;background:#2b2b2b;"></div>
<svg class="a" style="left:0px;top:0px;" width="2440" height="700" viewBox="0 0 2440 700"><rect x="1318.4" y="633.2" width="31.5" height="25.7" rx="4" fill="#575757"/><path d="M1328 637 L1328 654 L1332.5 649.5 L1342 647 Z" fill="none" stroke="#eee" stroke-width="1.5" stroke-linejoin="round"/><path d="M1345 657 L1348 657 L1348 654Z" fill="#ddd"/><path d="M1361 637 V651 L1364.5 647.5 L1370 646Z" fill="#ddd"/><rect x="1365" y="640" width="14" height="13" fill="none" stroke="#e6e6e6" stroke-width="1.3" stroke-dasharray="2 1"/><path d="M1382 657 L1385 657 L1385 654Z" fill="#ddd"/><g transform="translate(1383.2 348.73) scale(0.74316)"><ellipse cx="31" cy="396" rx="11" ry="7.5" fill="none" stroke="#e6e6e6" stroke-width="1.6"/><path d="M25 401 Q22 406 27 408 Q31 410 27 411" fill="none" stroke="#e6e6e6" stroke-width="1.5"/><path d="M44.6 414.6 L49.5 410 L49.5 415Z" fill="#e6e6e6"/><rect x="59" y="382" width="1.5" height="34" fill="#2b2b2b"/><path d="M98.5 390 L90.5 399" stroke="#e6e6e6" stroke-width="4.6" stroke-linecap="round"/><path d="M88.5 401.2 Q83 401 80.5 405 Q79 408.5 76.6 410.6 Q83 411.6 87 408.5 Q90 405.5 89.2 402.2Z" fill="#e6e6e6"/><circle cx="94.3" cy="404.5" r="5.6" fill="#c4c4c4" stroke="#eaeaea" stroke-width="1.2"/><path d="M146.5 390 L138.5 399" stroke="#e6e6e6" stroke-width="4.6" stroke-linecap="round"/><path d="M136.5 401.2 Q131 401 128.5 405 Q127 408.5 124.6 410.6 Q131 411.6 135 408.5 Q138 405.5 137.2 402.2Z" fill="#e6e6e6"/><g transform="translate(184.7 399.1) rotate(-45)"><rect x="-9.4" y="-7" width="18.8" height="14" rx="1.2" fill="none" stroke="#e6e6e6" stroke-width="1.6"/><rect x="-3.2" y="-7" width="12.6" height="14" rx="1" fill="#e6e6e6"/></g><rect x="222.9" y="390.9" width="20" height="17" rx="0.8" fill="#acacac" stroke="#e8e8e8" stroke-width="2"/><path d="M247 414.6 L252.1 409.8 L252.1 415Z" fill="#e6e6e6"/><line x1="272" y1="409" x2="290" y2="390" stroke="#e6e6e6" stroke-width="1.8"/><rect x="309" y="382" width="1.5" height="34" fill="#2b2b2b"/><path d="M327.3 410.3 L330.5 399.5 L337.5 393 L345 400.5 L338.5 407.5Z" fill="#e6e6e6"/><path d="M327.8 409.8 L335 402.6" stroke="#3a3a3a" stroke-width="1.1"/><circle cx="335.6" cy="402" r="1.3" fill="#3a3a3a"/><g transform="translate(344.5 393.5) rotate(45)"><rect x="-5" y="-2.8" width="10" height="5.6" rx="0.6" fill="#e6e6e6"/></g><path d="M351.5 414.6 L356.4 410 L356.4 415Z" fill="#e6e6e6"/><path d="M377 390 H395 V395 M377 390 V395 M386 390 V409 M381 409 H391" fill="none" stroke="#e6e6e6" stroke-width="2.6"/><path d="M423.2 402.4 L433.7 391.9 L443.2 399.3 L431.5 410.3Z" fill="#e6e6e6"/><path d="M427.2 389.1 L435.2 396.5" stroke="#f0f0f0" stroke-width="2.4"/><path d="M432.5 394.5 L435.2 396.8" stroke="#222" stroke-width="1.2"/><path d="M442.5 398.5 Q445.5 400 445 404.5" stroke="#e6e6e6" stroke-width="2" fill="none"/><circle cx="444.6" cy="405.6" r="2" fill="#e6e6e6"/><path d="M449.3 414.3 L453.9 410 L453.9 414.6Z" fill="#e6e6e6"/><path d="M474.5 408.8 L487 396.3" stroke="#e6e6e6" stroke-width="4.4" stroke-linecap="round"/><path d="M474.5 408.8 L487 396.3" stroke="#3a3a3a" stroke-width="1.6" stroke-linecap="round"/><path d="M482.8 393.6 L487.5 388.9 L492.7 394.1 L488 398.8Z" fill="#e6e6e6"/><circle cx="491.6" cy="390.3" r="3.4" fill="#e6e6e6"/><path d="M519.3 408.3 L526.5 402.5" stroke="#e6e6e6" stroke-width="2" stroke-linecap="round"/><path d="M522 396 L527 396.5 L531.5 389.5 L538.8 396.8 L532 401.3 L532.3 406 Z" fill="#e6e6e6"/><rect x="558" y="382" width="1.5" height="34" fill="#2b2b2b"/><g stroke="#e6e6e6" stroke-width="2.9" stroke-linecap="round"><path d="M583.3 392.5 L585 400"/><path d="M588.2 390.5 L588.6 400"/><path d="M592.4 393 L591.6 401"/><path d="M596.4 396.4 L594.2 402.5"/><path d="M578.5 399.5 L583.5 403.5"/></g><path d="M582.5 399 Q590 396 594.8 401.5 Q594 409.5 588.5 410.6 Q583.5 411 581 405Z" fill="#e6e6e6"/><path d="M598.6 414.6 L603.5 410 L603.5 415Z" fill="#e6e6e6"/><circle cx="634" cy="397" r="7.5" fill="none" stroke="#e6e6e6" stroke-width="2"/><line x1="639.5" y1="402.5" x2="646" y2="409" stroke="#e6e6e6" stroke-width="2.5"/><circle cx="677" cy="403.5" r="2.4" fill="#e6e6e6"/><circle cx="685" cy="403.5" r="2.4" fill="#e6e6e6"/><circle cx="693" cy="403.5" r="2.4" fill="#e6e6e6"/><path d="M725 394 Q727 386 735 386" fill="none" stroke="#e6e6e6" stroke-width="1.8"/><path d="M733 383 L737 386 L733 389Z" fill="#e6e6e6"/><path d="M723 391 L726 396 L729 391Z" fill="#e6e6e6"/><rect x="723.5" y="406" width="9" height="9" fill="#111" stroke="#eee" stroke-width="1.3"/><rect x="727.5" y="410" width="9" height="9" fill="#111" stroke="#eee" stroke-width="1.3"/><rect x="724.5" y="407" width="5" height="5" fill="#fff"/><rect x="760.5" y="397.5" width="27" height="27" fill="#8c7426" stroke="#fff" stroke-width="1"/><rect x="766" y="403" width="16" height="16" fill="#111"/><rect x="768.5" y="405.5" width="11" height="11" fill="#4a4a4a"/><rect x="747" y="383" width="27" height="27" fill="#b83a2d" stroke="#fff" stroke-width="1.5"/></g><path d="M2102 608h13M2102 610.7h13M2102 613.4h13M2102 616.1h13" stroke="#c4c4c4" stroke-width="1"/></svg>
<div class="a" style="left:1314px;top:673px;width:804px;height:20px;background:#333333;"></div>
<div class="a" style="left:1314px;top:673px;width:142.5px;height:20px;background:#3a3a3a;"></div>
<div class="a" style="left:1456.5px;top:673px;width:1px;height:20px;background:#2b2b2b;"></div>
<div class="a" style="left:1314px;top:692.5px;width:804px;height:1px;background:#2f2f2f;"></div>
<div class="t" style="left:1338px;top:676.5px;font-size:13px;color:#f2f2f2;font-weight:bold;">animate.fla (Canvas)*</div>
<div class="a" style="left:1314px;top:693.5px;width:804px;height:30.5px;background:#383838;"></div>
<svg class="a" style="left:0px;top:0px;" width="2440" height="730" viewBox="0 0 2440 730"><path d="M1321.5 679.5 L1328.5 686.5 M1328.5 679.5 L1321.5 686.5" stroke="#777" stroke-width="1"/><rect x="1402.3" y="696.7" width="98.5" height="24" rx="3" fill="#2f2f2f"/><circle cx="1330" cy="705" r="3.6" fill="#eee"/><circle cx="1326" cy="710" r="3.6" fill="#eee"/><circle cx="1334" cy="710" r="3.6" fill="#eee"/><path d="M1330 709 L1327 716 H1333Z" fill="#eee"/><path d="M1335 717 L1337 717 L1337 715Z" fill="#ddd"/><circle cx="1362" cy="708.5" r="0.8" fill="#666"/><path d="M1376 708.5 H1389 M1381 703 L1375.5 708.5 L1381 714" fill="none" stroke="#eee" stroke-width="2.4"/><g transform="translate(1409.3 701.5) scale(0.74)"><path d="M0 0 H2.6 V2.4 H5 L7 5.8 L4.6 8.6 L8.4 12.6 L10.8 9.8 L14.6 15.2 L19 13.8 V19.1 H0Z" fill="#d2d2d2"/><path d="M10.4 0.4 A8.6 8.6 0 0 0 19 9" fill="none" stroke="#d2d2d2" stroke-width="1.7"/><path d="M15 0.6 H19 V4.8 Q16 4.2 15 0.6Z" fill="#d2d2d2"/></g><g transform="translate(1383.2 348.73) scale(0.74316)"><path d="M730 476 V494 M721 485 H739" stroke="#eee" stroke-width="1.8"/><rect x="724" y="479" width="12" height="12" fill="none" stroke="#eee" stroke-width="1.6"/><path d="M763 487 V481 Q765 479 767 481 V486 V479 Q769 477 771 479 V486 V480 Q773 478 775 480 V491 Q774 496 769 496 Q765 496 762 492 L760 488Z" fill="#d6d6d6"/><path d="M775 479 L784 486 L777 493" fill="none" stroke="#ddd" stroke-width="1.4"/><rect x="808" y="476" width="17" height="17" fill="none" stroke="#5a5a5a" stroke-width="3" stroke-dasharray="1.5 1.5"/><rect x="811" y="479" width="11" height="11" fill="none" stroke="#666" stroke-width="1.5"/><path d="M848 478 L854 472 L860 478 M848 489 L854 495 L860 489" fill="none" stroke="#eee" stroke-width="2"/></g><rect x="2093" y="697" width="18" height="24" rx="4" fill="#2b2b2b"/><path d="M2096 706 L2101 711 L2106 706" fill="none" stroke="#ddd" stroke-width="1.5"/><rect x="2028.5" y="697.5" width="65" height="23" fill="#1e1e1e" stroke="#6a6a6a" stroke-width="1"/></svg>
<div class="t" style="left:1437.5px;top:700.5px;font-size:14px;color:#eaeaea;font-weight:normal;">clipAvatar</div>
<div class="t" style="left:2036px;top:702.5px;font-size:12.5px;color:#f2f2f2;font-weight:normal;">100%</div>
<div class="a" style="left:1314px;top:724px;width:804px;height:15.6px;background:#474747;"></div>
<div class="a" style="left:1314px;top:739.6px;width:16px;height:633.4px;background:#474747;"></div>
<svg class="a" style="left:0px;top:0px;" width="2440" height="1373" viewBox="0 0 2440 1373"><rect x="1330.2" y="737" width="0.9" height="2.6" fill="#bdbdbd"/><rect x="1335.1" y="735" width="1" height="4.6" fill="#bdbdbd"/><rect x="1340.2" y="737" width="0.9" height="2.6" fill="#bdbdbd"/><rect x="1345.1" y="735" width="1" height="4.6" fill="#bdbdbd"/><rect x="1350.2" y="737" width="0.9" height="2.6" fill="#bdbdbd"/><rect x="1355.1" y="735" width="1" height="4.6" fill="#bdbdbd"/><rect x="1360.2" y="737" width="0.9" height="2.6" fill="#bdbdbd"/><rect x="1365.1" y="724" width="1" height="15.6" fill="#d4d4d4"/><rect x="1370.2" y="737" width="0.9" height="2.6" fill="#bdbdbd"/><rect x="1375.1" y="735" width="1" height="4.6" fill="#bdbdbd"/><rect x="1380.2" y="737" width="0.9" height="2.6" fill="#bdbdbd"/><rect x="1385.1" y="735" width="1" height="4.6" fill="#bdbdbd"/><rect x="1390.2" y="737" width="0.9" height="2.6" fill="#bdbdbd"/><rect x="1395.1" y="735" width="1" height="4.6" fill="#bdbdbd"/><rect x="1400.2" y="737" width="0.9" height="2.6" fill="#bdbdbd"/><rect x="1405.1" y="735" width="1" height="4.6" fill="#bdbdbd"/><rect x="1410.2" y="737" width="0.9" height="2.6" fill="#bdbdbd"/><rect x="1415.1" y="724" width="1" height="15.6" fill="#d4d4d4"/><rect x="1420.2" y="737" width="0.9" height="2.6" fill="#bdbdbd"/><rect x="1425.1" y="735" width="1" height="4.6" fill="#bdbdbd"/><rect x="1430.2" y="737" width="0.9" height="2.6" fill="#bdbdbd"/><rect x="1435.1" y="735" width="1" height="4.6" fill="#bdbdbd"/><rect x="1440.2" y="737" width="0.9" height="2.6" fill="#bdbdbd"/><rect x="1445.1" y="735" width="1" height="4.6" fill="#bdbdbd"/><rect x="1450.2" y="737" width="0.9" height="2.6" fill="#bdbdbd"/><rect x="1455.1" y="735" width="1" height="4.6" fill="#bdbdbd"/><rect x="1460.2" y="737" width="0.9" height="2.6" fill="#bdbdbd"/><rect x="1465.1" y="724" width="1" height="15.6" fill="#d4d4d4"/><rect x="1470.2" y="737" width="0.9" height="2.6" fill="#bdbdbd"/><rect x="1475.1" y="735" width="1" height="4.6" fill="#bdbdbd"/><rect x="1480.2" y="737" width="0.9" height="2.6" fill="#bdbdbd"/><rect x="1485.1" y="735" width="1" height="4.6" fill="#bdbdbd"/><rect x="1490.2" y="737" width="0.9" height="2.6" fill="#bdbdbd"/><rect x="1495.1" y="735" width="1" height="4.6" fill="#bdbdbd"/><rect x="1500.2" y="737" width="0.9" height="2.6" fill="#bdbdbd"/><rect x="1505.1" y="735" width="1" height="4.6" fill="#bdbdbd"/><rect x="1510.2" y="737" width="0.9" height="2.6" fill="#bdbdbd"/><rect x="1515.1" y="724" width="1" height="15.6" fill="#d4d4d4"/><rect x="1520.2" y="737" width="0.9" height="2.6" fill="#bdbdbd"/><rect x="1525.1" y="735" width="1" height="4.6" fill="#bdbdbd"/><rect x="1530.2" y="737" width="0.9" height="2.6" fill="#bdbdbd"/><rect x="1535.1" y="735" width="1" height="4.6" fill="#bdbdbd"/><rect x="1540.2" y="737" width="0.9" height="2.6" fill="#bdbdbd"/><rect x="1545.1" y="735" width="1" height="4.6" fill="#bdbdbd"/><rect x="1550.2" y="737" width="0.9" height="2.6" fill="#bdbdbd"/><rect x="1555.1" y="735" width="1" height="4.6" fill="#bdbdbd"/><rect x="1560.2" y="737" width="0.9" height="2.6" fill="#bdbdbd"/><rect x="1565.1" y="724" width="1" height="15.6" fill="#d4d4d4"/><rect x="1570.2" y="737" width="0.9" height="2.6" fill="#bdbdbd"/><rect x="1575.1" y="735" width="1" height="4.6" fill="#bdbdbd"/><rect x="1580.2" y="737" width="0.9" height="2.6" fill="#bdbdbd"/><rect x="1585.1" y="735" width="1" height="4.6" fill="#bdbdbd"/><rect x="1590.2" y="737" width="0.9" height="2.6" fill="#bdbdbd"/><rect x="1595.1" y="735" width="1" height="4.6" fill="#bdbdbd"/><rect x="1600.2" y="737" width="0.9" height="2.6" fill="#bdbdbd"/><rect x="1605.1" y="735" width="1" height="4.6" fill="#bdbdbd"/><rect x="1610.2" y="737" width="0.9" height="2.6" fill="#bdbdbd"/><rect x="1615.1" y="724" width="1" height="15.6" fill="#d4d4d4"/><rect x="1620.2" y="737" width="0.9" height="2.6" fill="#bdbdbd"/><rect x="1625.1" y="735" width="1" height="4.6" fill="#bdbdbd"/><rect x="1630.2" y="737" width="0.9" height="2.6" fill="#bdbdbd"/><rect x="1635.1" y="735" width="1" height="4.6" fill="#bdbdbd"/><rect x="1640.2" y="737" width="0.9" height="2.6" fill="#bdbdbd"/><rect x="1645.1" y="735" width="1" height="4.6" fill="#bdbdbd"/><rect x="1650.2" y="737" width="0.9" height="2.6" fill="#bdbdbd"/><rect x="1655.1" y="735" width="1" height="4.6" fill="#bdbdbd"/><rect x="1660.2" y="737" width="0.9" height="2.6" fill="#bdbdbd"/><rect x="1665.1" y="724" width="1" height="15.6" fill="#d4d4d4"/><rect x="1670.2" y="737" width="0.9" height="2.6" fill="#bdbdbd"/><rect x="1675.1" y="735" width="1" height="4.6" fill="#bdbdbd"/><rect x="1680.2" y="737" width="0.9" height="2.6" fill="#bdbdbd"/><rect x="1685.1" y="735" width="1" height="4.6" fill="#bdbdbd"/><rect x="1690.2" y="737" width="0.9" height="2.6" fill="#bdbdbd"/><rect x="1695.1" y="735" width="1" height="4.6" fill="#bdbdbd"/><rect x="1700.2" y="737" width="0.9" height="2.6" fill="#bdbdbd"/><rect x="1705.1" y="735" width="1" height="4.6" fill="#bdbdbd"/><rect x="1710.2" y="737" width="0.9" height="2.6" fill="#bdbdbd"/><rect x="1715.1" y="724" width="1" height="15.6" fill="#d4d4d4"/><rect x="1720.2" y="737" width="0.9" height="2.6" fill="#bdbdbd"/><rect x="1725.1" y="735" width="1" height="4.6" fill="#bdbdbd"/><rect x="1730.2" y="737" width="0.9" height="2.6" fill="#bdbdbd"/><rect x="1735.1" y="735" width="1" height="4.6" fill="#bdbdbd"/><rect x="1740.2" y="737" width="0.9" height="2.6" fill="#bdbdbd"/><rect x="1745.1" y="735" width="1" height="4.6" fill="#bdbdbd"/><rect x="1750.2" y="737" width="0.9" height="2.6" fill="#bdbdbd"/><rect x="1755.1" y="735" width="1" height="4.6" fill="#bdbdbd"/><rect x="1760.2" y="737" width="0.9" height="2.6" fill="#bdbdbd"/><rect x="1765.1" y="724" width="1" height="15.6" fill="#d4d4d4"/><rect x="1770.2" y="737" width="0.9" height="2.6" fill="#bdbdbd"/><rect x="1775.1" y="735" width="1" height="4.6" fill="#bdbdbd"/><rect x="1780.2" y="737" width="0.9" height="2.6" fill="#bdbdbd"/><rect x="1785.1" y="735" width="1" height="4.6" fill="#bdbdbd"/><rect x="1790.2" y="737" width="0.9" height="2.6" fill="#bdbdbd"/><rect x="1795.1" y="735" width="1" height="4.6" fill="#bdbdbd"/><rect x="1800.2" y="737" width="0.9" height="2.6" fill="#bdbdbd"/><rect x="1805.1" y="735" width="1" height="4.6" fill="#bdbdbd"/><rect x="1810.2" y="737" width="0.9" height="2.6" fill="#bdbdbd"/><rect x="1815.1" y="724" width="1" height="15.6" fill="#d4d4d4"/><rect x="1820.2" y="737" width="0.9" height="2.6" fill="#bdbdbd"/><rect x="1825.1" y="735" width="1" height="4.6" fill="#bdbdbd"/><rect x="1830.2" y="737" width="0.9" height="2.6" fill="#bdbdbd"/><rect x="1835.1" y="735" width="1" height="4.6" fill="#bdbdbd"/><rect x="1840.2" y="737" width="0.9" height="2.6" fill="#bdbdbd"/><rect x="1845.1" y="735" width="1" height="4.6" fill="#bdbdbd"/><rect x="1850.2" y="737" width="0.9" height="2.6" fill="#bdbdbd"/><rect x="1855.1" y="735" width="1" height="4.6" fill="#bdbdbd"/><rect x="1860.2" y="737" width="0.9" height="2.6" fill="#bdbdbd"/><rect x="1865.1" y="724" width="1" height="15.6" fill="#d4d4d4"/><rect x="1870.2" y="737" width="0.9" height="2.6" fill="#bdbdbd"/><rect x="1875.1" y="735" width="1" height="4.6" fill="#bdbdbd"/><rect x="1880.2" y="737" width="0.9" height="2.6" fill="#bdbdbd"/><rect x="1885.1" y="735" width="1" height="4.6" fill="#bdbdbd"/><rect x="1890.2" y="737" width="0.9" height="2.6" fill="#bdbdbd"/><rect x="1895.1" y="735" width="1" height="4.6" fill="#bdbdbd"/><rect x="1900.2" y="737" width="0.9" height="2.6" fill="#bdbdbd"/><rect x="1905.1" y="735" width="1" height="4.6" fill="#bdbdbd"/><rect x="1910.2" y="737" width="0.9" height="2.6" fill="#bdbdbd"/><rect x="1915.1" y="724" width="1" height="15.6" fill="#d4d4d4"/><rect x="1920.2" y="737" width="0.9" height="2.6" fill="#bdbdbd"/><rect x="1925.1" y="735" width="1" height="4.6" fill="#bdbdbd"/><rect x="1930.2" y="737" width="0.9" height="2.6" fill="#bdbdbd"/><rect x="1935.1" y="735" width="1" height="4.6" fill="#bdbdbd"/><rect x="1940.2" y="737" width="0.9" height="2.6" fill="#bdbdbd"/><rect x="1945.1" y="735" width="1" height="4.6" fill="#bdbdbd"/><rect x="1950.2" y="737" width="0.9" height="2.6" fill="#bdbdbd"/><rect x="1955.1" y="735" width="1" height="4.6" fill="#bdbdbd"/><rect x="1960.2" y="737" width="0.9" height="2.6" fill="#bdbdbd"/><rect x="1965.1" y="724" width="1" height="15.6" fill="#d4d4d4"/><rect x="1970.2" y="737" width="0.9" height="2.6" fill="#bdbdbd"/><rect x="1975.1" y="735" width="1" height="4.6" fill="#bdbdbd"/><rect x="1980.2" y="737" width="0.9" height="2.6" fill="#bdbdbd"/><rect x="1985.1" y="735" width="1" height="4.6" fill="#bdbdbd"/><rect x="1990.2" y="737" width="0.9" height="2.6" fill="#bdbdbd"/><rect x="1995.1" y="735" width="1" height="4.6" fill="#bdbdbd"/><rect x="2000.2" y="737" width="0.9" height="2.6" fill="#bdbdbd"/><rect x="2005.1" y="735" width="1" height="4.6" fill="#bdbdbd"/><rect x="2010.2" y="737" width="0.9" height="2.6" fill="#bdbdbd"/><rect x="2015.1" y="724" width="1" height="15.6" fill="#d4d4d4"/><rect x="2020.2" y="737" width="0.9" height="2.6" fill="#bdbdbd"/><rect x="2025.1" y="735" width="1" height="4.6" fill="#bdbdbd"/><rect x="2030.2" y="737" width="0.9" height="2.6" fill="#bdbdbd"/><rect x="2035.1" y="735" width="1" height="4.6" fill="#bdbdbd"/><rect x="2040.2" y="737" width="0.9" height="2.6" fill="#bdbdbd"/><rect x="2045.1" y="735" width="1" height="4.6" fill="#bdbdbd"/><rect x="2050.2" y="737" width="0.9" height="2.6" fill="#bdbdbd"/><rect x="2055.1" y="735" width="1" height="4.6" fill="#bdbdbd"/><rect x="2060.2" y="737" width="0.9" height="2.6" fill="#bdbdbd"/><rect x="2065.1" y="724" width="1" height="15.6" fill="#d4d4d4"/><rect x="2070.2" y="737" width="0.9" height="2.6" fill="#bdbdbd"/><rect x="2075.1" y="735" width="1" height="4.6" fill="#bdbdbd"/><rect x="2080.2" y="737" width="0.9" height="2.6" fill="#bdbdbd"/><rect x="2085.1" y="735" width="1" height="4.6" fill="#bdbdbd"/><rect x="2090.2" y="737" width="0.9" height="2.6" fill="#bdbdbd"/><rect x="2095.1" y="735" width="1" height="4.6" fill="#bdbdbd"/><rect x="2100.2" y="737" width="0.9" height="2.6" fill="#bdbdbd"/><rect x="2105.1" y="735" width="1" height="4.6" fill="#bdbdbd"/><rect x="2110.2" y="737" width="0.9" height="2.6" fill="#bdbdbd"/><rect x="2115.1" y="724" width="1" height="15.6" fill="#d4d4d4"/><rect x="1325.5" y="739.2" width="4.5" height="1" fill="#bdbdbd"/><rect x="1327.5" y="744.3" width="2.5" height="0.9" fill="#bdbdbd"/><rect x="1314" y="749.2" width="16" height="1" fill="#d4d4d4"/><rect x="1327.5" y="754.3" width="2.5" height="0.9" fill="#bdbdbd"/><rect x="1325.5" y="759.2" width="4.5" height="1" fill="#bdbdbd"/><rect x="1327.5" y="764.3" width="2.5" height="0.9" fill="#bdbdbd"/><rect x="1325.5" y="769.2" width="4.5" height="1" fill="#bdbdbd"/><rect x="1327.5" y="774.3" width="2.5" height="0.9" fill="#bdbdbd"/><rect x="1325.5" y="779.2" width="4.5" height="1" fill="#bdbdbd"/><rect x="1327.5" y="784.3" width="2.5" height="0.9" fill="#bdbdbd"/><rect x="1325.5" y="789.2" width="4.5" height="1" fill="#bdbdbd"/><rect x="1327.5" y="794.3" width="2.5" height="0.9" fill="#bdbdbd"/><rect x="1314" y="799.2" width="16" height="1" fill="#d4d4d4"/><rect x="1327.5" y="804.3" width="2.5" height="0.9" fill="#bdbdbd"/><rect x="1325.5" y="809.2" width="4.5" height="1" fill="#bdbdbd"/><rect x="1327.5" y="814.3" width="2.5" height="0.9" fill="#bdbdbd"/><rect x="1325.5" y="819.2" width="4.5" height="1" fill="#bdbdbd"/><rect x="1327.5" y="824.3" width="2.5" height="0.9" fill="#bdbdbd"/><rect x="1325.5" y="829.2" width="4.5" height="1" fill="#bdbdbd"/><rect x="1327.5" y="834.3" width="2.5" height="0.9" fill="#bdbdbd"/><rect x="1325.5" y="839.2" width="4.5" height="1" fill="#bdbdbd"/><rect x="1327.5" y="844.3" width="2.5" height="0.9" fill="#bdbdbd"/><rect x="1314" y="849.2" width="16" height="1" fill="#d4d4d4"/><rect x="1327.5" y="854.3" width="2.5" height="0.9" fill="#bdbdbd"/><rect x="1325.5" y="859.2" width="4.5" height="1" fill="#bdbdbd"/><rect x="1327.5" y="864.3" width="2.5" height="0.9" fill="#bdbdbd"/><rect x="1325.5" y="869.2" width="4.5" height="1" fill="#bdbdbd"/><rect x="1327.5" y="874.3" width="2.5" height="0.9" fill="#bdbdbd"/><rect x="1325.5" y="879.2" width="4.5" height="1" fill="#bdbdbd"/><rect x="1327.5" y="884.3" width="2.5" height="0.9" fill="#bdbdbd"/><rect x="1325.5" y="889.2" width="4.5" height="1" fill="#bdbdbd"/><rect x="1327.5" y="894.3" width="2.5" height="0.9" fill="#bdbdbd"/><rect x="1314" y="899.2" width="16" height="1" fill="#d4d4d4"/><rect x="1327.5" y="904.3" width="2.5" height="0.9" fill="#bdbdbd"/><rect x="1325.5" y="909.2" width="4.5" height="1" fill="#bdbdbd"/><rect x="1327.5" y="914.3" width="2.5" height="0.9" fill="#bdbdbd"/><rect x="1325.5" y="919.2" width="4.5" height="1" fill="#bdbdbd"/><rect x="1327.5" y="924.3" width="2.5" height="0.9" fill="#bdbdbd"/><rect x="1325.5" y="929.2" width="4.5" height="1" fill="#bdbdbd"/><rect x="1327.5" y="934.3" width="2.5" height="0.9" fill="#bdbdbd"/><rect x="1325.5" y="939.2" width="4.5" height="1" fill="#bdbdbd"/><rect x="1327.5" y="944.3" width="2.5" height="0.9" fill="#bdbdbd"/><rect x="1314" y="949.2" width="16" height="1" fill="#d4d4d4"/><rect x="1327.5" y="954.3" width="2.5" height="0.9" fill="#bdbdbd"/><rect x="1325.5" y="959.2" width="4.5" height="1" fill="#bdbdbd"/><rect x="1327.5" y="964.3" width="2.5" height="0.9" fill="#bdbdbd"/><rect x="1325.5" y="969.2" width="4.5" height="1" fill="#bdbdbd"/><rect x="1327.5" y="974.3" width="2.5" height="0.9" fill="#bdbdbd"/><rect x="1325.5" y="979.2" width="4.5" height="1" fill="#bdbdbd"/><rect x="1327.5" y="984.3" width="2.5" height="0.9" fill="#bdbdbd"/><rect x="1325.5" y="989.2" width="4.5" height="1" fill="#bdbdbd"/><rect x="1327.5" y="994.3" width="2.5" height="0.9" fill="#bdbdbd"/><rect x="1314" y="999.2" width="16" height="1" fill="#d4d4d4"/><rect x="1327.5" y="1004.3" width="2.5" height="0.9" fill="#bdbdbd"/><rect x="1325.5" y="1009.2" width="4.5" height="1" fill="#bdbdbd"/><rect x="1327.5" y="1014.3" width="2.5" height="0.9" fill="#bdbdbd"/><rect x="1325.5" y="1019.2" width="4.5" height="1" fill="#bdbdbd"/><rect x="1327.5" y="1024.3" width="2.5" height="0.9" fill="#bdbdbd"/><rect x="1325.5" y="1029.2" width="4.5" height="1" fill="#bdbdbd"/><rect x="1327.5" y="1034.3" width="2.5" height="0.9" fill="#bdbdbd"/><rect x="1325.5" y="1039.2" width="4.5" height="1" fill="#bdbdbd"/><rect x="1327.5" y="1044.3" width="2.5" height="0.9" fill="#bdbdbd"/><rect x="1314" y="1049.2" width="16" height="1" fill="#d4d4d4"/><rect x="1327.5" y="1054.3" width="2.5" height="0.9" fill="#bdbdbd"/><rect x="1325.5" y="1059.2" width="4.5" height="1" fill="#bdbdbd"/><rect x="1327.5" y="1064.3" width="2.5" height="0.9" fill="#bdbdbd"/><rect x="1325.5" y="1069.2" width="4.5" height="1" fill="#bdbdbd"/><rect x="1327.5" y="1074.3" width="2.5" height="0.9" fill="#bdbdbd"/><rect x="1325.5" y="1079.2" width="4.5" height="1" fill="#bdbdbd"/><rect x="1327.5" y="1084.3" width="2.5" height="0.9" fill="#bdbdbd"/><rect x="1325.5" y="1089.2" width="4.5" height="1" fill="#bdbdbd"/><rect x="1327.5" y="1094.3" width="2.5" height="0.9" fill="#bdbdbd"/><rect x="1314" y="1099.2" width="16" height="1" fill="#d4d4d4"/><rect x="1327.5" y="1104.3" width="2.5" height="0.9" fill="#bdbdbd"/><rect x="1325.5" y="1109.2" width="4.5" height="1" fill="#bdbdbd"/><rect x="1327.5" y="1114.3" width="2.5" height="0.9" fill="#bdbdbd"/><rect x="1325.5" y="1119.2" width="4.5" height="1" fill="#bdbdbd"/><rect x="1327.5" y="1124.3" width="2.5" height="0.9" fill="#bdbdbd"/><rect x="1325.5" y="1129.2" width="4.5" height="1" fill="#bdbdbd"/><rect x="1327.5" y="1134.3" width="2.5" height="0.9" fill="#bdbdbd"/><rect x="1325.5" y="1139.2" width="4.5" height="1" fill="#bdbdbd"/><rect x="1327.5" y="1144.3" width="2.5" height="0.9" fill="#bdbdbd"/><rect x="1314" y="1149.2" width="16" height="1" fill="#d4d4d4"/><rect x="1327.5" y="1154.3" width="2.5" height="0.9" fill="#bdbdbd"/><rect x="1325.5" y="1159.2" width="4.5" height="1" fill="#bdbdbd"/><rect x="1327.5" y="1164.3" width="2.5" height="0.9" fill="#bdbdbd"/><rect x="1325.5" y="1169.2" width="4.5" height="1" fill="#bdbdbd"/><rect x="1327.5" y="1174.3" width="2.5" height="0.9" fill="#bdbdbd"/><rect x="1325.5" y="1179.2" width="4.5" height="1" fill="#bdbdbd"/><rect x="1327.5" y="1184.3" width="2.5" height="0.9" fill="#bdbdbd"/><rect x="1325.5" y="1189.2" width="4.5" height="1" fill="#bdbdbd"/><rect x="1327.5" y="1194.3" width="2.5" height="0.9" fill="#bdbdbd"/><rect x="1314" y="1199.2" width="16" height="1" fill="#d4d4d4"/><rect x="1327.5" y="1204.3" width="2.5" height="0.9" fill="#bdbdbd"/><rect x="1325.5" y="1209.2" width="4.5" height="1" fill="#bdbdbd"/><rect x="1327.5" y="1214.3" width="2.5" height="0.9" fill="#bdbdbd"/><rect x="1325.5" y="1219.2" width="4.5" height="1" fill="#bdbdbd"/><rect x="1327.5" y="1224.3" width="2.5" height="0.9" fill="#bdbdbd"/><rect x="1325.5" y="1229.2" width="4.5" height="1" fill="#bdbdbd"/><rect x="1327.5" y="1234.3" width="2.5" height="0.9" fill="#bdbdbd"/><rect x="1325.5" y="1239.2" width="4.5" height="1" fill="#bdbdbd"/><rect x="1327.5" y="1244.3" width="2.5" height="0.9" fill="#bdbdbd"/><rect x="1314" y="1249.2" width="16" height="1" fill="#d4d4d4"/><rect x="1327.5" y="1254.3" width="2.5" height="0.9" fill="#bdbdbd"/><rect x="1325.5" y="1259.2" width="4.5" height="1" fill="#bdbdbd"/><rect x="1327.5" y="1264.3" width="2.5" height="0.9" fill="#bdbdbd"/><rect x="1325.5" y="1269.2" width="4.5" height="1" fill="#bdbdbd"/><rect x="1327.5" y="1274.3" width="2.5" height="0.9" fill="#bdbdbd"/><rect x="1325.5" y="1279.2" width="4.5" height="1" fill="#bdbdbd"/><rect x="1327.5" y="1284.3" width="2.5" height="0.9" fill="#bdbdbd"/><rect x="1325.5" y="1289.2" width="4.5" height="1" fill="#bdbdbd"/><rect x="1327.5" y="1294.3" width="2.5" height="0.9" fill="#bdbdbd"/><rect x="1314" y="1299.2" width="16" height="1" fill="#d4d4d4"/><rect x="1327.5" y="1304.3" width="2.5" height="0.9" fill="#bdbdbd"/><rect x="1325.5" y="1309.2" width="4.5" height="1" fill="#bdbdbd"/><rect x="1327.5" y="1314.3" width="2.5" height="0.9" fill="#bdbdbd"/><rect x="1325.5" y="1319.2" width="4.5" height="1" fill="#bdbdbd"/><rect x="1327.5" y="1324.3" width="2.5" height="0.9" fill="#bdbdbd"/><rect x="1325.5" y="1329.2" width="4.5" height="1" fill="#bdbdbd"/><rect x="1327.5" y="1334.3" width="2.5" height="0.9" fill="#bdbdbd"/><rect x="1325.5" y="1339.2" width="4.5" height="1" fill="#bdbdbd"/><rect x="1327.5" y="1344.3" width="2.5" height="0.9" fill="#bdbdbd"/><rect x="1314" y="1349.2" width="16" height="1" fill="#d4d4d4"/><rect x="1327.5" y="1354.3" width="2.5" height="0.9" fill="#bdbdbd"/><rect x="1325.5" y="1359.2" width="4.5" height="1" fill="#bdbdbd"/><rect x="1327.5" y="1364.3" width="2.5" height="0.9" fill="#bdbdbd"/><rect x="1325.5" y="1369.2" width="4.5" height="1" fill="#bdbdbd"/></svg>
<div class="t" style="left:1368.1px;top:726px;font-size:10.2px;color:#dcdcdc;font-weight:normal;transform:none">350</div>
<div class="t" style="left:1418.1px;top:726px;font-size:10.2px;color:#dcdcdc;font-weight:normal;transform:none">300</div>
<div class="t" style="left:1468.1px;top:726px;font-size:10.2px;color:#dcdcdc;font-weight:normal;transform:none">250</div>
<div class="t" style="left:1518.1px;top:726px;font-size:10.2px;color:#dcdcdc;font-weight:normal;transform:none">200</div>
<div class="t" style="left:1568.1px;top:726px;font-size:10.2px;color:#dcdcdc;font-weight:normal;transform:none">150</div>
<div class="t" style="left:1618.1px;top:726px;font-size:10.2px;color:#dcdcdc;font-weight:normal;transform:none">100</div>
<div class="t" style="left:1668.1px;top:726px;font-size:10.2px;color:#dcdcdc;font-weight:normal;transform:none">50</div>
<div class="t" style="left:1718.1px;top:726px;font-size:10.2px;color:#dcdcdc;font-weight:normal;transform:none">0</div>
<div class="t" style="left:1768.1px;top:726px;font-size:10.2px;color:#dcdcdc;font-weight:normal;transform:none">50</div>
<div class="t" style="left:1818.1px;top:726px;font-size:10.2px;color:#dcdcdc;font-weight:normal;transform:none">100</div>
<div class="t" style="left:1868.1px;top:726px;font-size:10.2px;color:#dcdcdc;font-weight:normal;transform:none">150</div>
<div class="t" style="left:1918.1px;top:726px;font-size:10.2px;color:#dcdcdc;font-weight:normal;transform:none">200</div>
<div class="t" style="left:1968.1px;top:726px;font-size:10.2px;color:#dcdcdc;font-weight:normal;transform:none">250</div>
<div class="t" style="left:2018.1px;top:726px;font-size:10.2px;color:#dcdcdc;font-weight:normal;transform:none">300</div>
<div class="t" style="left:2068.1px;top:726px;font-size:10.2px;color:#dcdcdc;font-weight:normal;transform:none">350</div>
<div class="t" style="left:1331.5px;top:726px;font-size:10.2px;color:#dcdcdc;font-weight:normal;transform:none">0</div>
<div class="t" style="left:1314px;top:768.21px;font-size:10.2px;color:#dcdcdc;transform:rotate(-90deg);transform-origin:0 0">400</div>
<div class="t" style="left:1314px;top:818.21px;font-size:10.2px;color:#dcdcdc;transform:rotate(-90deg);transform-origin:0 0">350</div>
<div class="t" style="left:1314px;top:868.21px;font-size:10.2px;color:#dcdcdc;transform:rotate(-90deg);transform-origin:0 0">300</div>
<div class="t" style="left:1314px;top:918.21px;font-size:10.2px;color:#dcdcdc;transform:rotate(-90deg);transform-origin:0 0">250</div>
<div class="t" style="left:1314px;top:968.21px;font-size:10.2px;color:#dcdcdc;transform:rotate(-90deg);transform-origin:0 0">200</div>
<div class="t" style="left:1314px;top:1018.21px;font-size:10.2px;color:#dcdcdc;transform:rotate(-90deg);transform-origin:0 0">150</div>
<div class="t" style="left:1314px;top:1068.21px;font-size:10.2px;color:#dcdcdc;transform:rotate(-90deg);transform-origin:0 0">100</div>
<div class="t" style="left:1314px;top:1112.54px;font-size:10.2px;color:#dcdcdc;transform:rotate(-90deg);transform-origin:0 0">50</div>
<div class="t" style="left:1314px;top:1156.87px;font-size:10.2px;color:#dcdcdc;transform:rotate(-90deg);transform-origin:0 0">0</div>
<div class="t" style="left:1314px;top:1212.54px;font-size:10.2px;color:#dcdcdc;transform:rotate(-90deg);transform-origin:0 0">50</div>
<div class="t" style="left:1314px;top:1268.21px;font-size:10.2px;color:#dcdcdc;transform:rotate(-90deg);transform-origin:0 0">100</div>
<div class="t" style="left:1314px;top:1318.21px;font-size:10.2px;color:#dcdcdc;transform:rotate(-90deg);transform-origin:0 0">150</div>
<div class="t" style="left:1314px;top:1368.21px;font-size:10.2px;color:#dcdcdc;transform:rotate(-90deg);transform-origin:0 0">200</div>
<svg class="a" style="left:1330px;top:739.6px;background:#fff;" width="772" height="615.8000000000001" viewBox="0 0 772 615.8000000000001"><path d="M5.6 0V615.8000000000001M15.6 0V615.8000000000001M25.6 0V615.8000000000001M35.6 0V615.8000000000001M45.6 0V615.8000000000001M55.6 0V615.8000000000001M65.6 0V615.8000000000001M75.6 0V615.8000000000001M85.6 0V615.8000000000001M95.6 0V615.8000000000001M105.6 0V615.8000000000001M115.6 0V615.8000000000001M125.6 0V615.8000000000001M135.6 0V615.8000000000001M145.6 0V615.8000000000001M155.6 0V615.8000000000001M165.6 0V615.8000000000001M175.6 0V615.8000000000001M185.6 0V615.8000000000001M195.6 0V615.8000000000001M205.6 0V615.8000000000001M215.6 0V615.8000000000001M225.6 0V615.8000000000001M235.6 0V615.8000000000001M245.6 0V615.8000000000001M255.6 0V615.8000000000001M265.6 0V615.8000000000001M275.6 0V615.8000000000001M285.6 0V615.8000000000001M295.6 0V615.8000000000001M305.6 0V615.8000000000001M315.6 0V615.8000000000001M325.6 0V615.8000000000001M335.6 0V615.8000000000001M345.6 0V615.8000000000001M355.6 0V615.8000000000001M365.6 0V615.8000000000001M375.6 0V615.8000000000001M385.6 0V615.8000000000001M395.6 0V615.8000000000001M405.6 0V615.8000000000001M415.6 0V615.8000000000001M425.6 0V615.8000000000001M435.6 0V615.8000000000001M445.6 0V615.8000000000001M455.6 0V615.8000000000001M465.6 0V615.8000000000001M475.6 0V615.8000000000001M485.6 0V615.8000000000001M495.6 0V615.8000000000001M505.6 0V615.8000000000001M515.6 0V615.8000000000001M525.6 0V615.8000000000001M535.6 0V615.8000000000001M545.6 0V615.8000000000001M555.6 0V615.8000000000001M565.6 0V615.8000000000001M575.6 0V615.8000000000001M585.6 0V615.8000000000001M595.6 0V615.8000000000001M605.6 0V615.8000000000001M615.6 0V615.8000000000001M625.6 0V615.8000000000001M635.6 0V615.8000000000001M645.6 0V615.8000000000001M655.6 0V615.8000000000001M665.6 0V615.8000000000001M675.6 0V615.8000000000001M685.6 0V615.8000000000001M695.6 0V615.8000000000001M705.6 0V615.8000000000001M715.6 0V615.8000000000001M725.6 0V615.8000000000001M735.6 0V615.8000000000001M745.6 0V615.8000000000001M755.6 0V615.8000000000001M765.6 0V615.8000000000001M0 0.1H772M0 10.1H772M0 20.1H772M0 30.1H772M0 40.1H772M0 50.1H772M0 60.1H772M0 70.1H772M0 80.1H772M0 90.1H772M0 100.1H772M0 110.1H772M0 120.1H772M0 130.1H772M0 140.1H772M0 150.1H772M0 160.1H772M0 170.1H772M0 180.1H772M0 190.1H772M0 200.1H772M0 210.1H772M0 220.1H772M0 230.1H772M0 240.1H772M0 250.1H772M0 260.1H772M0 270.1H772M0 280.1H772M0 290.1H772M0 300.1H772M0 310.1H772M0 320.1H772M0 330.1H772M0 340.1H772M0 350.1H772M0 360.1H772M0 370.1H772M0 380.1H772M0 390.1H772M0 400.1H772M0 410.1H772M0 420.1H772M0 430.1H772M0 440.1H772M0 450.1H772M0 460.1H772M0 470.1H772M0 480.1H772M0 490.1H772M0 500.1H772M0 510.1H772M0 520.1H772M0 530.1H772M0 540.1H772M0 550.1H772M0 560.1H772M0 570.1H772M0 580.1H772M0 590.1H772M0 600.1H772M0 610.1H772" stroke="#9e9e9e" stroke-width="1.25" fill="none"/><rect x="0" y="190.75" width="772" height="1.6" fill="#7ff3f6"/><rect x="0" y="241.35" width="772" height="1.6" fill="#7ff3f6"/><rect x="0" y="285.85" width="772" height="1.6" fill="#7ff3f6"/><rect x="0" y="336.85" width="772" height="1.6" fill="#7ff3f6"/><rect x="0" y="358.95" width="772" height="1.6" fill="#7ff3f6"/><rect x="0" y="409.35" width="772" height="1.6" fill="#7ff3f6"/><rect x="55.75" y="0" width="1.6" height="615.8" fill="#7ff3f6"/><rect x="251.25" y="0" width="1.6" height="615.8" fill="#7ff3f6"/><rect x="254.25" y="0" width="1.6" height="615.8" fill="#7ff3f6"/></svg>
<svg class="a" style="left:0;top:0" width="2440" height="1373"><polygon points="1770.2,1090.2 1793.9,1083.0 1823.0,1059.3 1844.9,1015.6 1821.2,1017.4 1807.6,1026.5 1806.7,1055.7 1781.2,1079.3" fill="#ebb474" opacity="0.55"/><path d="M1770.2 1090.2 Q1798.0 1062.7 1815.8 1019.2" stroke="#dd9c4c" stroke-width="0.9" fill="none" opacity="0.9"/><path d="M1772.1 1089.7 Q1803.5 1061.6 1824.9 1017.4" stroke="#dd9c4c" stroke-width="0.9" fill="none" opacity="0.9"/><path d="M1773.9 1089.2 Q1808.9 1060.8 1834.0 1016.5" stroke="#dd9c4c" stroke-width="0.9" fill="none" opacity="0.9"/><path d="M1775.7 1088.6 Q1814.4 1060.1 1843.1 1015.6" stroke="#dd9c4c" stroke-width="0.9" fill="none" opacity="0.9"/><path d="M1777.5 1088.1 Q1814.4 1065.3 1841.2 1026.5" stroke="#dd9c4c" stroke-width="0.9" fill="none" opacity="0.9"/><path d="M1779.3 1087.5 Q1812.6 1070.5 1835.8 1037.4" stroke="#dd9c4c" stroke-width="0.9" fill="none" opacity="0.9"/><path d="M1781.2 1087.0 Q1809.8 1075.7 1828.5 1048.4" stroke="#dd9c4c" stroke-width="0.9" fill="none" opacity="0.9"/><path d="M1783.0 1086.4 Q1806.2 1080.9 1819.4 1059.3" stroke="#dd9c4c" stroke-width="0.9" fill="none" opacity="0.9"/><path d="M1784.8 1085.9 Q1801.6 1086.0 1808.5 1070.2" stroke="#dd9c4c" stroke-width="0.9" fill="none" opacity="0.9"/><polygon points="1692.0,1044.7 1721.1,1048.4 1715.6,1073.9 1711.1,1141.2 1701.1,1144.9 1692.0,1135.8 1686.5,1121.2 1692.0,1073.9" fill="#151515"/><polygon points="1677.4,1150.3 1686.5,1135.8 1695.6,1137.6 1694.7,1150.3 1684.7,1154.0" fill="#efb97a" stroke="#141414" stroke-width="0.8"/><path d="M1755.7 1021.1 Q1772.1 1014.7 1797.6 1016.5 Q1810.3 1022.9 1807.6 1052.0 L1763.0 1092.1 L1741.1 1073.9 L1736.6 1059.3 L1750.2 1048.4Z" fill="#efb97a" stroke="#141414" stroke-width="1"/><polygon points="1688.3,1013.8 1721.1,1009.2 1772.1,1009.2 1773.9,1015.6 1759.3,1021.1 1755.7,1037.4 1721.1,1046.5 1693.8,1042.9" fill="#d0d0d0" stroke="#141414" stroke-width="0.9"/><polygon points="1692.9,1045.6 1699.2,1037.4 1704.7,1044.7 1710.2,1043.8 1717.4,1048.4 1715.6,1053.8 1706.5,1053.8 1699.2,1050.2" fill="#f2c322"/><polygon points="1659.2,984.6 1651.9,995.6 1648.3,1019.2 1631.9,1012.0 1617.3,1004.7 1606.4,1004.7 1608.2,1015.6 1617.3,1017.4 1644.6,1028.3 1655.5,1028.3 1666.5,1012.0" fill="#efb97a" stroke="#141414" stroke-width="0.9"/><polygon points="1681.0,1012.0 1717.4,997.4 1721.1,1009.2 1690.1,1019.2" fill="#efb97a" stroke="#141414" stroke-width="0.8"/><polygon points="1690.1,964.6 1735.7,939.1 1742.9,955.5 1748.4,997.4 1735.7,999.2 1733.8,986.5 1732.0,953.7 1702.9,970.1 1692.0,979.2" fill="#efb97a" stroke="#141414" stroke-width="0.9"/><polygon points="1660.1,984.6 1688.3,964.6 1706.5,970.1 1715.6,995.6 1712.0,1012.0 1684.7,1017.4 1668.3,1004.7" fill="#151515"/><polygon points="1651.0,962.8 1670.1,960.1 1677.0,970.1 1675.2,980.1 1662.8,983.7 1653.7,973.7" fill="#efb97a" stroke="#141414" stroke-width="0.8"/><polygon points="1636.4,937.3 1644.6,926.4 1655.5,923.7 1666.5,930.0 1679.2,948.2 1670.1,947.3 1659.2,946.4 1650.1,951.9 1646.4,962.8 1639.2,955.5" fill="#3d2a12"/><polygon points="1646.4,952.8 1657.4,945.5 1670.1,951.0 1675.6,964.6 1674.1,970.1 1668.3,961.9 1655.5,963.7 1652.3,971.0 1647.9,964.6" fill="#3d2a12"/><rect x="1650.1" y="945.5" width="4.6" height="2.2" fill="#e8c020" transform="rotate(-30 1651.9 946.4)"/><polygon points="1656.5,966.4 1663.7,964.6 1665.0,971.5 1657.7,973.4" fill="#fff" stroke="#141414" stroke-width="0.7"/><polygon points="1665.0,963.7 1671.9,961.9 1673.4,968.3 1666.1,970.1" fill="#fff" stroke="#141414" stroke-width="0.7"/><path d="M1710.5 1148.5 h10 M1715.5 1143.5 v10" stroke="#222" stroke-width="0.9"/></svg>
<div class="a" style="left:2102px;top:739.6px;width:16px;height:615.8000000000001px;background:#3a3a3a;"></div>
<div class="a" style="left:2107.5px;top:840px;width:7px;height:175px;background:#d8d8d8;border-radius:4px"></div>
<div class="a" style="left:1330px;top:1355.4px;width:788px;height:17.6px;background:#3a3a3a;"></div>
<div class="a" style="left:1330px;top:1355.4px;width:788px;height:1.5px;background:#2b2b2b;"></div>
<div class="a" style="left:1450.7px;top:1361px;width:257.3px;height:6.5px;background:#d8d8d8;border-radius:4px"></div>
<div class="a" style="left:2118px;top:587px;width:3px;height:786px;background:#2b2b2b;"></div>
<div class="a" style="left:2121px;top:587px;width:319px;height:310px;background:#373737;"></div>
<div class="a" style="left:2121px;top:587px;width:319px;height:3px;background:#2f2f2f;"></div>
<svg class="a" style="left:0px;top:0px;" width="2440" height="1373" viewBox="0 0 2440 1373"><rect x="2178.5" y="594.5" width="270" height="22" rx="4" fill="#2f2f2f" stroke="#636363" stroke-width="1.1"/><rect x="2141.5" y="622.5" width="310" height="22" rx="4" fill="#2f2f2f" stroke="#636363" stroke-width="1.1"/><rect x="2121" y="653" width="319" height="2.5" fill="#2b2b2b"/><path d="M2141.5 666 L2146 671 L2150.5 666" fill="none" stroke="#eee" stroke-width="1.8"/><path d="M2202 698.5 H2213 V705 M2202 725.5 H2213 V720" fill="none" stroke="#bbb" stroke-width="1.1"/><path d="M2210 712 V708.5 A3.5 3.5 0 0 1 2217 708.5" fill="none" stroke="#ddd" stroke-width="1.5"/><rect x="2207.5" y="712" width="12" height="8.5" rx="1" fill="#ddd"/><circle cx="2213.5" cy="716" r="1.3" fill="#383838"/><rect x="2250.5" y="688.5" width="200" height="22" rx="4" fill="#2f2f2f" stroke="#636363" stroke-width="1.1"/><rect x="2250.5" y="719.5" width="11" height="11" rx="1" fill="none" stroke="#d8d8d8" stroke-width="1.4"/><rect x="2250.5" y="745.5" width="11" height="11" rx="1" fill="none" stroke="#d8d8d8" stroke-width="1.4"/><rect x="2250.5" y="771.5" width="11" height="11" rx="1" fill="none" stroke="#d8d8d8" stroke-width="1.4"/><rect x="2190" y="743" width="38.5" height="18" rx="4" fill="#ffffff"/><rect x="2141.5" y="792.5" width="310" height="23" rx="4" fill="#2f2f2f" stroke="#636363" stroke-width="1.1"/><rect x="2121" y="823" width="319" height="2.5" fill="#2b2b2b"/></svg>
<div class="t" style="left:2141px;top:598px;font-size:13.5px;color:#eaeaea;font-weight:normal;">Profil</div>
<div class="t" style="left:2186px;top:598px;font-size:13.5px;color:#f0f0f0;font-weight:normal;">Par défaut</div>
<div class="t" style="left:2306px;top:626px;font-size:13px;color:#f0f0f0;font-weight:normal;">Paramètres supplémentaires</div>
<div class="t" style="left:2161px;top:662.5px;font-size:13px;color:#f0f0f0;font-weight:bold;">Paramètres du document</div>
<div class="t" style="left:2141px;top:694px;font-size:13px;color:#e6e6e6;font-weight:normal;">L</div>
<div class="t" style="left:2159px;top:694px;font-size:12.5px;color:#8ebcf2;font-weight:normal;">800</div>
<div class="t" style="left:2141px;top:717px;font-size:13px;color:#e6e6e6;font-weight:normal;">H</div>
<div class="t" style="left:2161px;top:717px;font-size:12.5px;color:#8ebcf2;font-weight:normal;">600</div>
<div class="t" style="left:2383px;top:692px;font-size:13px;color:#f0f0f0;font-weight:normal;">Ajuster au c</div>
<div class="t" style="left:2271px;top:718px;font-size:12.5px;color:#eaeaea;font-weight:normal;">Mettre à l'échelle le contenu</div>
<div class="t" style="left:2271px;top:744px;font-size:12.5px;color:#eaeaea;font-weight:normal;">Appliquer à la zone de travail</div>
<div class="t" style="left:2271px;top:770px;font-size:12.5px;color:#eaeaea;font-weight:normal;">Plages de l'échelle</div>
<div class="t" style="left:2141px;top:746px;font-size:13px;color:#e6e6e6;font-weight:normal;">Scène</div>
<div class="t" style="left:2141px;top:769px;font-size:13px;color:#e6e6e6;font-weight:normal;">I/S</div>
<div class="t" style="left:2192px;top:769px;font-size:12.5px;color:#8ebcf2;font-weight:normal;">24</div>
<div class="t" style="left:2306px;top:796.5px;font-size:13px;color:#f0f0f0;font-weight:normal;">Paramètres supplémentaires</div>
<div class="a" style="left:2121px;top:896.5px;width:319px;height:19.5px;background:#323232;"></div>
<div class="a" style="left:2121px;top:896.5px;width:80px;height:19.5px;background:#3a3a3a;"></div>
<div class="a" style="left:2201px;top:896.5px;width:1px;height:19.5px;background:#2b2b2b;"></div>
<div class="a" style="left:2302px;top:896.5px;width:1px;height:19.5px;background:#2b2b2b;"></div>
<div class="a" style="left:2347px;top:896.5px;width:1px;height:19.5px;background:#2b2b2b;"></div>
<div class="a" style="left:2121px;top:916px;width:319px;height:1px;background:#2f2f2f;"></div>
<div class="t" style="left:2128px;top:900px;font-size:12px;color:#f2f2f2;font-weight:bold;">Bibliothèque</div>
<div class="t" style="left:2207px;top:900px;font-size:12px;color:#8c8c8c;font-weight:bold;">Bibliothèques CC</div>
<div class="t" style="left:2310px;top:900px;font-size:12px;color:#8c8c8c;font-weight:bold;">Actifs</div>
<svg class="a" style="left:0px;top:0px;" width="2440" height="1373" viewBox="0 0 2440 1373"><rect x="2125.5" y="922.5" width="330" height="19" rx="4" fill="#2f2f2f" stroke="#5a5a5a" stroke-width="1.1"/><rect x="2121" y="945.7" width="319" height="133" fill="#ffffff"/><polygon points="2358.6,1074.9 2362.3,1072.3 2367.0,1068.1 2371.8,1068.6 2371.2,1077.0 2365.4,1078.3 2358.9,1077.6" fill="#efb97a" stroke="#141414" stroke-width="0.8"/><polygon points="2385.4,1068.6 2392.8,1068.1 2394.1,1073.9 2396.0,1076.0 2394.9,1078.1 2386.5,1078.1" fill="#efb97a" stroke="#141414" stroke-width="0.8"/><polygon points="2390.2,980.2 2396.0,982.3 2398.1,997.0 2399.1,1005.5 2395.4,1007.6 2392.8,1001.3 2391.8,992.8" fill="#efb97a" stroke="#141414" stroke-width="0.8"/><polygon points="2374.7,997.0 2390.2,997.0 2389.9,1008.6 2380.2,1010.7 2373.3,1005.5" fill="#efb97a" stroke="#141414" stroke-width="0.8"/><polygon points="2372.8,1004.4 2380.2,1009.7 2389.7,1007.0 2390.2,1020.2 2388.6,1039.2 2393.3,1067.6 2383.3,1068.6 2380.2,1043.4 2377.0,1025.5 2370.7,1018.1" fill="#cfcfcf" stroke="#141414" stroke-width="0.9"/><polygon points="2368.1,1013.9 2373.9,1018.1 2377.6,1025.5 2371.8,1041.3 2372.3,1067.6 2361.8,1068.1 2361.8,1038.1 2365.4,1022.3" fill="#151515"/><polygon points="2367.0,1018.1 2369.1,1014.9 2372.3,1012.8 2373.3,1018.1 2377.0,1021.3 2377.6,1025.5 2374.4,1024.4 2372.3,1021.3 2368.1,1021.3" fill="#f2c322"/><polygon points="2380.7,977.6 2390.2,977.6 2385.4,986.0" fill="#efb97a"/><polygon points="2376.0,978.6 2381.8,978.6 2385.4,984.4 2389.7,978.6 2392.3,992.8 2390.2,999.7 2374.4,999.7 2374.1,988.6" fill="#141414"/><polygon points="2376.0,980.2 2370.7,982.3 2367.6,992.8 2368.6,997.0 2378.1,993.9 2387.0,992.8 2388.1,987.6 2381.2,986.5 2376.5,989.7" fill="#efb97a" stroke="#141414" stroke-width="0.8"/><polygon points="2380.0,968.6 2391.2,968.6 2390.7,973.9 2388.1,978.1 2384.4,979.2 2381.2,976.0" fill="#efb97a" stroke="#141414" stroke-width="0.8"/><path d="M2378.4 971.8 Q2377.6 961.3 2385.4 961.0 Q2393.3 961.8 2392.0 970.7 L2390.2 968.6 L2381.2 968.1Z" fill="#3d2a12"/><polygon points="2373.3,950.7 2377.9,946.0 2377.0,950.2 2382.3,952.3 2385.2,957.6 2383.3,960.7 2379.1,959.2 2374.9,955.5" fill="#3d2a12"/><rect x="2382.3" y="960.0" width="2.1" height="1.3" fill="#e8c020"/><rect x="2382.1" y="971.6" width="3.4" height="2.1" fill="#fff" stroke="#141414" stroke-width="0.8"/><rect x="2386.3" y="971.6" width="3.4" height="2.1" fill="#fff" stroke="#141414" stroke-width="0.8"/><rect x="2121" y="1078.8" width="319" height="6" fill="#494949"/><rect x="2287.5" y="1086.5" width="170" height="20" rx="4" fill="#1f1f1f" stroke="#6a6a6a" stroke-width="1.1"/><circle cx="2300" cy="1094.5" r="5" fill="none" stroke="#eee" stroke-width="1.6"/><line x1="2303.5" y1="1098" x2="2308" y2="1102.5" stroke="#eee" stroke-width="1.8"/><rect x="2121" y="1109" width="319" height="30" fill="#383838"/><rect x="2353" y="1109" width="1" height="30" fill="#2b2b2b"/><rect x="2424" y="1109" width="1" height="30" fill="#2b2b2b"/><rect x="2122.5" y="1139.5" width="330" height="240" rx="4" fill="#373737" stroke="#4a4a4a" stroke-width="1.1"/><rect x="2146.5" y="1144.5" width="14" height="13" fill="none" stroke="#d0d0d0" stroke-width="1.3"/><path d="M2148 1156 L2152 1151 L2155 1154 L2157 1152 L2160 1156Z" fill="#d0d0d0"/><rect x="2123" y="1165" width="317" height="24" fill="#3d4a5f"/><g transform="translate(2146.5 1169.5) scale(0.74)"><path d="M0 0 H2.6 V2.4 H5 L7 5.8 L4.6 8.6 L8.4 12.6 L10.8 9.8 L14.6 15.2 L19 13.8 V19.1 H0Z" fill="#d2d2d2"/><path d="M10.4 0.4 A8.6 8.6 0 0 0 19 9" fill="none" stroke="#d2d2d2" stroke-width="1.7"/><path d="M15 0.6 H19 V4.8 Q16 4.2 15 0.6Z" fill="#d2d2d2"/></g><g transform="translate(2146.5 1194.5) scale(0.74)"><path d="M0 0 H2.6 V2.4 H5 L7 5.8 L4.6 8.6 L8.4 12.6 L10.8 9.8 L14.6 15.2 L19 13.8 V19.1 H0Z" fill="#d2d2d2"/><path d="M10.4 0.4 A8.6 8.6 0 0 0 19 9" fill="none" stroke="#d2d2d2" stroke-width="1.7"/><path d="M15 0.6 H19 V4.8 Q16 4.2 15 0.6Z" fill="#d2d2d2"/></g><g transform="translate(2146.5 1219.5) scale(0.74)"><path d="M0 0 H2.6 V2.4 H5 L7 5.8 L4.6 8.6 L8.4 12.6 L10.8 9.8 L14.6 15.2 L19 13.8 V19.1 H0Z" fill="#d2d2d2"/><path d="M10.4 0.4 A8.6 8.6 0 0 0 19 9" fill="none" stroke="#d2d2d2" stroke-width="1.7"/><path d="M15 0.6 H19 V4.8 Q16 4.2 15 0.6Z" fill="#d2d2d2"/></g><g transform="translate(2146.5 1244.5) scale(0.74)"><path d="M0 0 H2.6 V2.4 H5 L7 5.8 L4.6 8.6 L8.4 12.6 L10.8 9.8 L14.6 15.2 L19 13.8 V19.1 H0Z" fill="#d2d2d2"/><path d="M10.4 0.4 A8.6 8.6 0 0 0 19 9" fill="none" stroke="#d2d2d2" stroke-width="1.7"/><path d="M15 0.6 H19 V4.8 Q16 4.2 15 0.6Z" fill="#d2d2d2"/></g><g transform="translate(2146.5 1269.5) scale(0.74)"><path d="M0 0 H2.6 V2.4 H5 L7 5.8 L4.6 8.6 L8.4 12.6 L10.8 9.8 L14.6 15.2 L19 13.8 V19.1 H0Z" fill="#d2d2d2"/><path d="M10.4 0.4 A8.6 8.6 0 0 0 19 9" fill="none" stroke="#d2d2d2" stroke-width="1.7"/><path d="M15 0.6 H19 V4.8 Q16 4.2 15 0.6Z" fill="#d2d2d2"/></g><g transform="translate(2146.5 1294.5) scale(0.74)"><path d="M0 0 H2.6 V2.4 H5 L7 5.8 L4.6 8.6 L8.4 12.6 L10.8 9.8 L14.6 15.2 L19 13.8 V19.1 H0Z" fill="#d2d2d2"/><path d="M10.4 0.4 A8.6 8.6 0 0 0 19 9" fill="none" stroke="#d2d2d2" stroke-width="1.7"/><path d="M15 0.6 H19 V4.8 Q16 4.2 15 0.6Z" fill="#d2d2d2"/></g><g transform="translate(2146.5 1319.5) scale(0.74)"><path d="M0 0 H2.6 V2.4 H5 L7 5.8 L4.6 8.6 L8.4 12.6 L10.8 9.8 L14.6 15.2 L19 13.8 V19.1 H0Z" fill="#d2d2d2"/><path d="M10.4 0.4 A8.6 8.6 0 0 0 19 9" fill="none" stroke="#d2d2d2" stroke-width="1.7"/><path d="M15 0.6 H19 V4.8 Q16 4.2 15 0.6Z" fill="#d2d2d2"/></g><path d="M2146 1356 L2156 1344 V1358 H2146Z" fill="none" stroke="#cfcfcf" stroke-width="1.3"/><circle cx="2151" cy="1354" r="3" fill="none" stroke="#cfcfcf" stroke-width="1.2"/><rect x="2121" y="1355" width="319" height="18" fill="#373737"/><rect x="2125.5" y="1357.5" width="11" height="11" fill="none" stroke="#ddd" stroke-width="1.2"/><path d="M2131 1360 V1366 M2128 1363 H2134" stroke="#ddd" stroke-width="1.2"/><path d="M2140 1357 H2146 L2148 1359 H2154 V1368 H2140Z" fill="#d6d6d6"/><circle cx="2161" cy="1363" r="6" fill="#d6d6d6"/><rect x="2160" y="1361" width="2" height="5" fill="#383838"/><rect x="2172" y="1358" width="9" height="11" fill="#aaa"/><rect x="2192" y="1360" width="260" height="6" rx="3" fill="#d8d8d8"/></svg>
<div class="t" style="left:2133px;top:925px;font-size:13px;color:#eaeaea;font-weight:normal;">animate.fla</div>
<div class="t" style="left:2124px;top:1090px;font-size:12.5px;color:#eaeaea;font-weight:normal;">62 éléments</div>
<div class="t" style="left:2137px;top:1117.5px;font-size:12px;color:#dcdcdc;font-weight:normal;">Nom</div>
<div class="t" style="left:2368px;top:1117.5px;font-size:12px;color:#dcdcdc;font-weight:normal;">Liaison</div>
<div class="t" style="left:2166px;top:1145px;font-size:13px;color:#ececec;font-weight:normal;">20240416_093427.jpg</div>
<div class="t" style="left:2428px;top:1145px;font-size:13px;color:#ececec;font-weight:normal;">0</div>
<div class="t" style="left:2166px;top:1170px;font-size:13px;color:#ececec;font-weight:normal;">clipAvatar</div>
<div class="t" style="left:2358px;top:1170px;font-size:13px;color:#ececec;font-weight:normal;">ClipAvatar</div>
<div class="t" style="left:2428px;top:1170px;font-size:13px;color:#ececec;font-weight:normal;">0</div>
<div class="t" style="left:2166px;top:1195px;font-size:13px;color:#ececec;font-weight:normal;">clipBoss</div>
<div class="t" style="left:2358px;top:1195px;font-size:13px;color:#ececec;font-weight:normal;">ClipBoss</div>
<div class="t" style="left:2428px;top:1195px;font-size:13px;color:#ececec;font-weight:normal;">0</div>
<div class="t" style="left:2166px;top:1220px;font-size:13px;color:#ececec;font-weight:normal;">clipChargement</div>
<div class="t" style="left:2428px;top:1220px;font-size:13px;color:#ececec;font-weight:normal;">0</div>
<div class="t" style="left:2166px;top:1245px;font-size:13px;color:#ececec;font-weight:normal;">clipDecorDefilant</div>
<div class="t" style="left:2358px;top:1245px;font-size:13px;color:#ececec;font-weight:normal;">ClipDecor..</div>
<div class="t" style="left:2428px;top:1245px;font-size:13px;color:#ececec;font-weight:normal;">0</div>
<div class="t" style="left:2166px;top:1270px;font-size:13px;color:#ececec;font-weight:normal;">clipDecorFixe</div>
<div class="t" style="left:2358px;top:1270px;font-size:13px;color:#ececec;font-weight:normal;">ClipDecorF..</div>
<div class="t" style="left:2428px;top:1270px;font-size:13px;color:#ececec;font-weight:normal;">0</div>
<div class="t" style="left:2166px;top:1295px;font-size:13px;color:#ececec;font-weight:normal;">clipEnnemi</div>
<div class="t" style="left:2358px;top:1295px;font-size:13px;color:#ececec;font-weight:normal;">ClipEnnemi</div>
<div class="t" style="left:2428px;top:1295px;font-size:13px;color:#ececec;font-weight:normal;">0</div>
<div class="t" style="left:2166px;top:1320px;font-size:13px;color:#ececec;font-weight:normal;">clipObstacle</div>
<div class="t" style="left:2358px;top:1320px;font-size:13px;color:#ececec;font-weight:normal;">ClipObstacle</div>
<div class="t" style="left:2428px;top:1320px;font-size:13px;color:#ececec;font-weight:normal;">0</div>
<div class="t" style="left:2166px;top:1344px;font-size:13px;color:#ececec;font-weight:normal;">Interpoler 15</div>
<div class="t" style="left:2428px;top:1344px;font-size:13px;color:#ececec;font-weight:normal;">0</div>
</div>
<div class="a" id="TR" style="left:1272px;top:0;width:1168px;height:587px;overflow:hidden;background:#373737">
<div class="a" style="left:-757.53px;top:-503.57px;width:2440px;height:1373px;transform:scale(0.795);transform-origin:0 0">
<div class="a" style="left:0;top:0.7px;width:2440px;height:1373px"><div class="a" id="C" style="left:953px;top:353px;width:358px;height:1020px;background:#373737;overflow:hidden;border-top-left-radius:9px">
<div class="a" style="left:0px;top:0px;width:358px;height:36px;background:#373737;"></div>
<div class="a" style="left:0px;top:35.5px;width:358px;height:1.2px;background:#2d2d2d;"></div>
<div class="a" style="left:0px;top:36.5px;width:358px;height:11px;background:#353535;"></div>
<div class="a" style="left:0px;top:47px;width:358px;height:18px;background:#323232;"></div>
<div class="a" style="left:0px;top:47px;width:54px;height:18px;background:#393939;"></div>
<div class="a" style="left:54px;top:47px;width:1.2px;height:18px;background:#2b2b2b;"></div>
<div class="a" style="left:120px;top:47px;width:1.2px;height:18px;background:#2b2b2b;"></div>
<div class="a" style="left:0px;top:64.5px;width:358px;height:1px;background:#2e2e2e;"></div>
<svg class="a" style="left:0px;top:0px;" width="358" height="440" viewBox="0 0 358 440"><circle cx="14.5" cy="13.5" r="6.3" fill="#ec6a5e"/><circle cx="34.5" cy="13.5" r="6.3" fill="#f4bf4f"/><circle cx="54.5" cy="13.5" r="6.3" fill="#61c554"/><path d="M78 16.5 L86.20000000000005 8.300000000000011 L94.40000000000009 16.5 L92.59999999999991 16.5 L92.59999999999991 22.69999999999999 L88.79999999999995 22.69999999999999 L88.79999999999995 18 L83.59999999999991 18 L83.59999999999991 22.69999999999999 L79.79999999999995 22.69999999999999 L79.79999999999995 16.5Z" fill="#e6e6e6"/><rect x="106" y="29" width="62" height="2.5" fill="#cfcfcf"/><rect x="174" y="5" width="1.2" height="22" fill="#474747"/><path d="M9 38 L6 41 L9 44 M13 38 L10 41 L13 44" fill="none" stroke="#bbb" stroke-width="1"/><rect x="20" y="82" width="32" height="20" rx="3" fill="#5d5d5d"/><path d="M28 91 L35 85 L43 93 L36 99Z" fill="#f0f0f0"/><path d="M43 93 Q46 96 44 99" fill="none" stroke="#f0f0f0" stroke-width="1.5"/><rect x="56.5" y="82" width="27" height="20" rx="2" fill="#b83a2e" stroke="#4a2020" stroke-width="0.5"/><path d="M29 123 L31 117 L41 108 L44 111 L35 120Z" fill="#dcdcdc"/><rect x="56.5" y="106" width="27" height="20" rx="2" fill="#8c7226"/><rect x="25" y="133" width="7" height="7" fill="none" stroke="#eee" stroke-width="1.2"/><rect x="28" y="136" width="7" height="7" fill="#111" stroke="#eee" stroke-width="1.2"/><rect x="46.5" y="133" width="11" height="11" fill="#f2f2f2"/><line x1="47" y1="143.5" x2="57" y2="133.5" stroke="#e03020" stroke-width="1.5"/><rect x="67" y="133" width="5" height="5" fill="#eee"/><rect x="67" y="139" width="5" height="5" fill="#eee"/><path d="M74 135 Q79 138 74 142" fill="none" stroke="#eee" stroke-width="1.3"/><rect x="117.5" y="82.5" width="119" height="19.5" rx="3" fill="#303030" stroke="#717171" stroke-width="1.2"/><path d="M218 89 L223 94 L228 89" fill="none" stroke="#eee" stroke-width="1.5"/><defs><linearGradient id="gsat" x1="0" x2="1" y1="0" y2="0"><stop offset="0" stop-color="#fff"/><stop offset="1" stop-color="#f00"/></linearGradient><linearGradient id="gval" x1="0" x2="0" y1="0" y2="1"><stop offset="0" stop-color="#000" stop-opacity="0"/><stop offset="1" stop-color="#000"/></linearGradient><linearGradient id="ghue" x1="0" x2="0" y1="0" y2="1"><stop offset="0" stop-color="#f00"/><stop offset="0.17" stop-color="#f0f"/><stop offset="0.33" stop-color="#00f"/><stop offset="0.5" stop-color="#0ff"/><stop offset="0.67" stop-color="#0f0"/><stop offset="0.83" stop-color="#ff0"/><stop offset="1" stop-color="#ff3a10"/></linearGradient></defs><rect x="14.5" y="158.5" width="156" height="155" fill="#111"/><rect x="16" y="160" width="153" height="152" fill="url(#gsat)"/><rect x="16" y="160" width="153" height="152" fill="url(#gval)"/><circle cx="141" cy="196.5" r="5" fill="none" stroke="#fff" stroke-width="1.3"/><rect x="177.5" y="158.5" width="11.5" height="155" fill="#111"/><rect x="179" y="160" width="8.5" height="152" fill="url(#ghue)"/><path d="M173 306 L178 310 L173 314Z M194 306 L189 310 L194 314Z" fill="none" stroke="#111" stroke-width="1"/><circle cx="206.5" cy="169" r="5.3" fill="none" stroke="#e6e6e6" stroke-width="1.6"/><circle cx="206.5" cy="169" r="2.6" fill="#f0f0f0"/><circle cx="206.5" cy="193" r="5.3" fill="none" stroke="#e6e6e6" stroke-width="1.6"/><circle cx="206.5" cy="217" r="5.3" fill="none" stroke="#e6e6e6" stroke-width="1.6"/><circle cx="206.5" cy="253" r="5.3" fill="none" stroke="#e6e6e6" stroke-width="1.6"/><circle cx="206.5" cy="277" r="5.3" fill="none" stroke="#e6e6e6" stroke-width="1.6"/><circle cx="206.5" cy="301" r="5.3" fill="none" stroke="#e6e6e6" stroke-width="1.6"/><rect x="63.5" y="319" width="73" height="22" rx="3" fill="#1f1f1f" stroke="#8a8a8a" stroke-width="1.2"/><rect x="13" y="348.5" width="199" height="39" fill="#1e1e1e"/><rect x="15" y="350.5" width="195" height="35" fill="#b6392d"/><rect x="13.5" y="402.5" width="140" height="24" rx="3" fill="#313131" stroke="#7a7a7a" stroke-width="1.2"/></svg>
<div class="t" style="left:116px;top:7px;font-size:13.5px;color:#ececec;font-weight:normal;">Animate</div>
<div class="t" style="left:7px;top:50px;font-size:12.5px;color:#f2f2f2;font-weight:bold;">Couleur</div>
<div class="t" style="left:60px;top:50px;font-size:12.5px;color:#8e8e8e;font-weight:bold;">Nuanciers</div>
<div class="t" style="left:126px;top:85.5px;font-size:13.5px;color:#eeeeee;font-weight:normal;">Couleur unie</div>
<div class="t" style="left:221px;top:162.5px;font-size:12.5px;color:#e6e6e6;font-weight:normal;">H:</div>
<div class="t" style="left:241px;top:162.5px;font-size:12.5px;color:#8ebcf2;font-weight:normal;">0</div>
<div class="t" style="left:250.29999999999995px;top:162.5px;font-size:12.5px;color:#eeeeee;font-weight:normal;">°</div>
<div class="t" style="left:221px;top:186.5px;font-size:12.5px;color:#e6e6e6;font-weight:normal;">S:</div>
<div class="t" style="left:241px;top:186.5px;font-size:12.5px;color:#8ebcf2;font-weight:normal;">83</div>
<div class="t" style="left:257.5999999999999px;top:186.5px;font-size:12.5px;color:#eeeeee;font-weight:normal;">%</div>
<div class="t" style="left:221px;top:210.5px;font-size:12.5px;color:#e6e6e6;font-weight:normal;">B:</div>
<div class="t" style="left:241px;top:210.5px;font-size:12.5px;color:#8ebcf2;font-weight:normal;">76</div>
<div class="t" style="left:257.5999999999999px;top:210.5px;font-size:12.5px;color:#eeeeee;font-weight:normal;">%</div>
<div class="t" style="left:221px;top:246.5px;font-size:12.5px;color:#e6e6e6;font-weight:normal;">R:</div>
<div class="t" style="left:241px;top:246.5px;font-size:12.5px;color:#8ebcf2;font-weight:normal;">195</div>
<div class="t" style="left:221px;top:270.5px;font-size:12.5px;color:#e6e6e6;font-weight:normal;">G:</div>
<div class="t" style="left:241px;top:270.5px;font-size:12.5px;color:#8ebcf2;font-weight:normal;">34</div>
<div class="t" style="left:221px;top:294.5px;font-size:12.5px;color:#e6e6e6;font-weight:normal;">B:</div>
<div class="t" style="left:241px;top:294.5px;font-size:12.5px;color:#8ebcf2;font-weight:normal;">34</div>
<div class="t" style="left:222px;top:319.5px;font-size:12.5px;color:#e6e6e6;font-weight:normal;">A :</div>
<div class="t" style="left:241px;top:319.5px;font-size:12.5px;color:#8ebcf2;font-weight:normal;">100</div>
<div class="t" style="left:264px;top:319.5px;font-size:12.5px;color:#eeeeee;font-weight:normal;">%</div>
<div class="t" style="left:51px;top:325px;font-size:11px;color:#cfcfcf;font-weight:normal;">#</div>
<div class="t" style="left:71px;top:325px;font-size:12.5px;color:#f2f2f2;font-weight:normal;">C32222</div>
<div class="t" style="left:30px;top:408px;font-size:12.5px;color:#f0f0f0;font-weight:normal;">Ajouter aux nuanciers</div>
<div class="a" style="left:0px;top:431px;width:358px;height:2px;background:#2b2b2b;"></div>
<div class="a" style="left:0px;top:433px;width:358px;height:17px;background:#323232;"></div>
<div class="a" style="left:0px;top:433px;width:51px;height:17px;background:#393939;"></div>
<div class="a" style="left:51px;top:433px;width:1px;height:17px;background:#2b2b2b;"></div>
<div class="a" style="left:131px;top:433px;width:1px;height:17px;background:#2b2b2b;"></div>
<div class="a" style="left:171px;top:433px;width:1px;height:17px;background:#2b2b2b;"></div>
<div class="a" style="left:0px;top:449.5px;width:358px;height:1px;background:#2e2e2e;"></div>
<div class="t" style="left:7px;top:435px;font-size:12px;color:#f2f2f2;font-weight:bold;">Aligner</div>
<div class="t" style="left:58px;top:435px;font-size:12px;color:#8c8c8c;font-weight:bold;">Transformer</div>
<div class="t" style="left:138px;top:435px;font-size:12px;color:#8c8c8c;font-weight:bold;">Infos</div>
<div class="t" style="left:16px;top:462.5px;font-size:12.5px;color:#e8e8e8;font-weight:normal;">Aligner :</div>
<div class="t" style="left:15px;top:509px;font-size:12.5px;color:#e8e8e8;font-weight:normal;">Distribuer :</div>
<div class="t" style="left:16px;top:555px;font-size:12.5px;color:#e8e8e8;font-weight:normal;">Ajuster la taille :</div>
<div class="t" style="left:115px;top:555px;font-size:12.5px;color:#e8e8e8;font-weight:normal;">Espace :</div>
<div class="t" style="left:40px;top:613.5px;font-size:12.5px;color:#ececec;font-weight:normal;">Aligner sur la scène</div>
<svg class="a" style="left:0;top:0" width="358" height="1020" viewBox="0 0 358 1020"><path d="M342 437h13M342 439.70000000000005h13M342 442.29999999999995h13M342 445h13" stroke="#c4c4c4" stroke-width="1"/><rect x="20" y="481.5" width="1.5" height="18" fill="#e0e0e0"/><rect x="22" y="483.5" width="8" height="5" fill="#e0e0e0"/><rect x="22" y="491.5" width="13" height="5" fill="#e0e0e0"/><rect x="55.3" y="481.5" width="1.5" height="18" fill="#e0e0e0"/><rect x="52" y="483.5" width="8" height="5" fill="#e0e0e0"/><rect x="49.5" y="491.5" width="13" height="5" fill="#e0e0e0"/><rect x="91" y="481.5" width="1.5" height="18" fill="#e0e0e0"/><rect x="82" y="483.5" width="8" height="5" fill="#e0e0e0"/><rect x="77" y="491.5" width="13" height="5" fill="#e0e0e0"/><rect x="119" y="482.5" width="18" height="1.5" fill="#e0e0e0"/><rect x="121" y="484.5" width="5" height="13" fill="#e0e0e0"/><rect x="129" y="484.5" width="5" height="8" fill="#e0e0e0"/><rect x="146" y="489.8" width="18" height="1.5" fill="#e0e0e0"/><rect x="148" y="484.0" width="5" height="13" fill="#e0e0e0"/><rect x="156" y="486.5" width="5" height="8" fill="#e0e0e0"/><rect x="173" y="497.5" width="18" height="1.5" fill="#e0e0e0"/><rect x="175" y="484.5" width="5" height="13" fill="#e0e0e0"/><rect x="183" y="489.5" width="5" height="8" fill="#e0e0e0"/><rect x="19" y="528" width="18" height="1.3" fill="#e0e0e0"/><rect x="22" y="530" width="12" height="4" fill="#e0e0e0"/><rect x="19" y="536" width="18" height="1.3" fill="#e0e0e0"/><rect x="22" y="538" width="12" height="5" fill="#e0e0e0"/><rect x="46" y="531" width="18" height="1.3" fill="#e0e0e0"/><rect x="50" y="528.5" width="10" height="5" fill="#e0e0e0"/><rect x="46" y="540" width="18" height="1.3" fill="#e0e0e0"/><rect x="49" y="537.5" width="12" height="5" fill="#e0e0e0"/><rect x="78" y="528" width="10" height="4" fill="#e0e0e0"/><rect x="74" y="533" width="18" height="1.3" fill="#e0e0e0"/><rect x="77" y="536" width="12" height="5" fill="#e0e0e0"/><rect x="74" y="543" width="18" height="1.3" fill="#e0e0e0"/><rect x="118" y="527" width="1.3" height="18" fill="#e0e0e0"/><rect x="120" y="529" width="5" height="14" fill="#e0e0e0"/><rect x="126" y="527" width="1.3" height="18" fill="#e0e0e0"/><rect x="128" y="532" width="4" height="8" fill="#e0e0e0"/><rect x="147" y="529" width="5" height="14" fill="#e0e0e0"/><rect x="149" y="527" width="1.3" height="18" fill="#e0e0e0"/><rect x="156" y="529" width="5" height="14" fill="#e0e0e0"/><rect x="158" y="527" width="1.3" height="18" fill="#e0e0e0"/><rect x="174" y="529" width="5" height="14" fill="#e0e0e0"/><rect x="180" y="527" width="1.3" height="18" fill="#e0e0e0"/><rect x="182" y="532" width="4" height="8" fill="#e0e0e0"/><rect x="188" y="527" width="1.3" height="18" fill="#e0e0e0"/><rect x="22" y="575" width="14" height="1.3" fill="#e0e0e0"/><rect x="23" y="577" width="12" height="6" fill="#e0e0e0"/><rect x="22" y="585" width="14" height="5" fill="#e0e0e0"/><rect x="49" y="575" width="5" height="14" fill="#e0e0e0"/><rect x="55" y="577" width="6" height="10" fill="#e0e0e0"/><rect x="54" y="589" width="9" height="1.3" fill="#e0e0e0"/><rect x="75" y="574" width="6" height="8" fill="#e0e0e0"/><rect x="75" y="583" width="8" height="6" fill="#e0e0e0"/><rect x="84" y="584" width="7" height="6" fill="#e0e0e0"/><rect x="123" y="575" width="10" height="7" fill="#e0e0e0"/><rect x="123" y="583" width="14" height="6" fill="#e0e0e0"/><path d="M119 579 V587" stroke="#e0e0e0" stroke-width="1.3"/><rect x="148" y="578" width="6" height="13" fill="#e0e0e0"/><rect x="155" y="580" width="6" height="8" fill="#e0e0e0"/><path d="M150 575 H158" stroke="#e0e0e0" stroke-width="1.3"/><rect x="15" y="603" width="326" height="1.2" fill="#4a4a4a"/><rect x="19.5" y="614.5" width="11" height="11" rx="1.5" fill="none" stroke="#cfcfcf" stroke-width="1.6"/><rect x="0" y="633" width="358" height="4" fill="#2b2b2b"/><rect x="0" y="637" width="358" height="16" fill="#323232"/><rect x="0" y="637" width="62" height="16" fill="#393939"/><rect x="62" y="637" width="1" height="16" fill="#2b2b2b"/><path d="M342 640h13M342 642.7h13M342 645.3h13M342 648h13" stroke="#c4c4c4" stroke-width="1"/><rect x="2.5" y="655.5" width="355" height="171" rx="4" fill="#373737" stroke="#4a4a4a" stroke-width="1.2"/><rect x="5" y="665" width="14" height="10" fill="#8a8a8a"/><path d="M5 664 L18 660" stroke="#8a8a8a" stroke-width="2.5" stroke-dasharray="2 1.5"/><rect x="4.5" y="810" width="11" height="11" fill="none" stroke="#555" stroke-width="1.2"/><rect x="21" y="810" width="10" height="10" fill="#4e4e4e"/><rect x="25" y="814" width="8" height="8" fill="#555"/><rect x="38" y="811" width="10" height="11" fill="#4a4a4a"/><rect x="0" y="829" width="358" height="18" fill="#323232"/><rect x="0" y="829" width="163" height="18" fill="#393939"/><rect x="163" y="829" width="1" height="18" fill="#2b2b2b"/><rect x="0" y="847" width="358" height="6.5" fill="#494949"/><path d="M342 833h13M342 835.7h13M342 838.3h13M342 841h13" stroke="#c4c4c4" stroke-width="1"/><circle cx="92" cy="865" r="4.5" fill="none" stroke="#ddd" stroke-width="1.5"/><line x1="95" y1="868" x2="99" y2="872" stroke="#ddd" stroke-width="1.8"/><rect x="103.5" y="856.5" width="250" height="18" rx="4" fill="#1f1f1f" stroke="#6e6e6e" stroke-width="1.2"/><rect x="4.5" y="879.5" width="349" height="108" rx="4" fill="#373737" stroke="#4a4a4a" stroke-width="1.2"/><path d="M11 887 L16 892.5 L11 898" fill="none" stroke="#eee" stroke-width="1.8"/><path d="M29 885 H36 L38 887 H45 V898 H29Z" fill="#d6d6d6"/><path d="M29 910 H36 L38 912 H44 V915 H34 L29 923Z" fill="#d0d0d0"/><path d="M33 915 H46 L42 923 H29Z" fill="#e6e6e6"/><rect x="9.5" y="998.5" width="11" height="11" fill="none" stroke="#e0e0e0" stroke-width="1.3"/><path d="M15 1001 V1007 M12 1004 H18" stroke="#e0e0e0" stroke-width="1.3"/><path d="M32 998 H38 L40 1000 H46 V1009 H32Z" fill="#d6d6d6"/><rect x="58" y="999" width="9" height="11" fill="none" stroke="#555" stroke-width="1.2"/><rect x="263.5" y="995.5" width="79" height="19" rx="3" fill="#373737" stroke="#555" stroke-width="1.2"/><rect x="358" y="0" width="3" height="1020" fill="#2b2b2b"/></svg>
<div class="t" style="left:7px;top:638.5px;font-size:12px;color:#f2f2f2;font-weight:bold;">Séquence</div>
<div class="t" style="left:25px;top:662.5px;font-size:12.5px;color:#bdbdbd;font-weight:normal;">Séquence 1</div>
<div class="t" style="left:7px;top:831px;font-size:12px;color:#f2f2f2;font-weight:bold;">Présélections de mouvement</div>
<div class="t" style="left:6px;top:860.5px;font-size:12.5px;color:#eaeaea;font-weight:normal;">32 éléments</div>
<div class="t" style="left:51px;top:886.5px;font-size:12.5px;color:#eaeaea;font-weight:normal;">Présélections par défaut</div>
<div class="t" style="left:51px;top:911px;font-size:12.5px;color:#eaeaea;font-weight:normal;">Présélections personnalisées</div>
<div class="t" style="left:279px;top:998px;font-size:13px;color:#8a8a8a;font-weight:normal;">Appliquer</div>
</div>
</div>
<div class="a" style="left:1311px;top:587px;width:1129px;height:786px;background:#373737;"></div>
<div class="a" style="left:1311px;top:587px;width:3px;height:786px;background:#2b2b2b;"></div>
<div class="a" style="left:1314px;top:587px;width:804px;height:16px;background:#3a3a3a;"></div>
<div class="a" style="left:1543px;top:587px;width:1px;height:16px;background:#2f2f2f;"></div>
<div class="a" style="left:1583px;top:590px;width:31.5px;height:8px;background:#d6d6d6;border-radius:3px"></div>
<div class="a" style="left:1314px;top:602px;width:807px;height:2.5px;background:#2b2b2b;"></div>
<div class="a" style="left:1314px;top:604.5px;width:804px;height:17px;background:#373737;"></div>
<div class="a" style="left:1314px;top:604.5px;width:45px;height:17px;background:#393939;"></div>
<div class="a" style="left:1359px;top:604.5px;width:1px;height:17px;background:#2f2f2f;"></div>
<div class="a" style="left:1314px;top:621px;width:804px;height:1px;background:#2f2f2f;"></div>
<div class="t" style="left:1321px;top:606.5px;font-size:12.5px;color:#f2f2f2;font-weight:bold;">Outils</div>
<div class="a" style="left:1314px;top:622px;width:804px;height:49px;background:#383838;"></div>
<div class="a" style="left:1314px;top:670.5px;width:807px;height:2.5px;background:#2b2b2b;"></div>
<svg class="a" style="left:0px;top:0px;" width="2440" height="700" viewBox="0 0 2440 700"><rect x="1318.4" y="633.2" width="31.5" height="25.7" rx="4" fill="#575757"/><path d="M1328 637 L1328 654 L1332.5 649.5 L1342 647 Z" fill="none" stroke="#eee" stroke-width="1.5" stroke-linejoin="round"/><path d="M1345 657 L1348 657 L1348 654Z" fill="#ddd"/><path d="M1361 637 V651 L1364.5 647.5 L1370 646Z" fill="#ddd"/><rect x="1365" y="640" width="14" height="13" fill="none" stroke="#e6e6e6" stroke-width="1.3" stroke-dasharray="2 1"/><path d="M1382 657 L1385 657 L1385 654Z" fill="#ddd"/><g transform="translate(1383.2 348.73) scale(0.74316)"><ellipse cx="31" cy="396" rx="11" ry="7.5" fill="none" stroke="#e6e6e6" stroke-width="1.6"/><path d="M25 401 Q22 406 27 408 Q31 410 27 411" fill="none" stroke="#e6e6e6" stroke-width="1.5"/><path d="M44.6 414.6 L49.5 410 L49.5 415Z" fill="#e6e6e6"/><rect x="59" y="382" width="1.5" height="34" fill="#2b2b2b"/><path d="M98.5 390 L90.5 399" stroke="#e6e6e6" stroke-width="4.6" stroke-linecap="round"/><path d="M88.5 401.2 Q83 401 80.5 405 Q79 408.5 76.6 410.6 Q83 411.6 87 408.5 Q90 405.5 89.2 402.2Z" fill="#e6e6e6"/><circle cx="94.3" cy="404.5" r="5.6" fill="#c4c4c4" stroke="#eaeaea" stroke-width="1.2"/><path d="M146.5 390 L138.5 399" stroke="#e6e6e6" stroke-width="4.6" stroke-linecap="round"/><path d="M136.5 401.2 Q131 401 128.5 405 Q127 408.5 124.6 410.6 Q131 411.6 135 408.5 Q138 405.5 137.2 402.2Z" fill="#e6e6e6"/><g transform="translate(184.7 399.1) rotate(-45)"><rect x="-9.4" y="-7" width="18.8" height="14" rx="1.2" fill="none" stroke="#e6e6e6" stroke-width="1.6"/><rect x="-3.2" y="-7" width="12.6" height="14" rx="1" fill="#e6e6e6"/></g><rect x="222.9" y="390.9" width="20" height="17" rx="0.8" fill="#acacac" stroke="#e8e8e8" stroke-width="2"/><path d="M247 414.6 L252.1 409.8 L252.1 415Z" fill="#e6e6e6"/><line x1="272" y1="409" x2="290" y2="390" stroke="#e6e6e6" stroke-width="1.8"/><rect x="309" y="382" width="1.5" height="34" fill="#2b2b2b"/><path d="M327.3 410.3 L330.5 399.5 L337.5 393 L345 400.5 L338.5 407.5Z" fill="#e6e6e6"/><path d="M327.8 409.8 L335 402.6" stroke="#3a3a3a" stroke-width="1.1"/><circle cx="335.6" cy="402" r="1.3" fill="#3a3a3a"/><g transform="translate(344.5 393.5) rotate(45)"><rect x="-5" y="-2.8" width="10" height="5.6" rx="0.6" fill="#e6e6e6"/></g><path d="M351.5 414.6 L356.4 410 L356.4 415Z" fill="#e6e6e6"/><path d="M377 390 H395 V395 M377 390 V395 M386 390 V409 M381 409 H391" fill="none" stroke="#e6e6e6" stroke-width="2.6"/><path d="M423.2 402.4 L433.7 391.9 L443.2 399.3 L431.5 410.3Z" fill="#e6e6e6"/><path d="M427.2 389.1 L435.2 396.5" stroke="#f0f0f0" stroke-width="2.4"/><path d="M432.5 394.5 L435.2 396.8" stroke="#222" stroke-width="1.2"/><path d="M442.5 398.5 Q445.5 400 445 404.5" stroke="#e6e6e6" stroke-width="2" fill="none"/><circle cx="444.6" cy="405.6" r="2" fill="#e6e6e6"/><path d="M449.3 414.3 L453.9 410 L453.9 414.6Z" fill="#e6e6e6"/><path d="M474.5 408.8 L487 396.3" stroke="#e6e6e6" stroke-width="4.4" stroke-linecap="round"/><path d="M474.5 408.8 L487 396.3" stroke="#3a3a3a" stroke-width="1.6" stroke-linecap="round"/><path d="M482.8 393.6 L487.5 388.9 L492.7 394.1 L488 398.8Z" fill="#e6e6e6"/><circle cx="491.6" cy="390.3" r="3.4" fill="#e6e6e6"/><path d="M519.3 408.3 L526.5 402.5" stroke="#e6e6e6" stroke-width="2" stroke-linecap="round"/><path d="M522 396 L527 396.5 L531.5 389.5 L538.8 396.8 L532 401.3 L532.3 406 Z" fill="#e6e6e6"/><rect x="558" y="382" width="1.5" height="34" fill="#2b2b2b"/><g stroke="#e6e6e6" stroke-width="2.9" stroke-linecap="round"><path d="M583.3 392.5 L585 400"/><path d="M588.2 390.5 L588.6 400"/><path d="M592.4 393 L591.6 401"/><path d="M596.4 396.4 L594.2 402.5"/><path d="M578.5 399.5 L583.5 403.5"/></g><path d="M582.5 399 Q590 396 594.8 401.5 Q594 409.5 588.5 410.6 Q583.5 411 581 405Z" fill="#e6e6e6"/><path d="M598.6 414.6 L603.5 410 L603.5 415Z" fill="#e6e6e6"/><circle cx="634" cy="397" r="7.5" fill="none" stroke="#e6e6e6" stroke-width="2"/><line x1="639.5" y1="402.5" x2="646" y2="409" stroke="#e6e6e6" stroke-width="2.5"/><circle cx="677" cy="403.5" r="2.4" fill="#e6e6e6"/><circle cx="685" cy="403.5" r="2.4" fill="#e6e6e6"/><circle cx="693" cy="403.5" r="2.4" fill="#e6e6e6"/><path d="M725 394 Q727 386 735 386" fill="none" stroke="#e6e6e6" stroke-width="1.8"/><path d="M733 383 L737 386 L733 389Z" fill="#e6e6e6"/><path d="M723 391 L726 396 L729 391Z" fill="#e6e6e6"/><rect x="723.5" y="406" width="9" height="9" fill="#111" stroke="#eee" stroke-width="1.3"/><rect x="727.5" y="410" width="9" height="9" fill="#111" stroke="#eee" stroke-width="1.3"/><rect x="724.5" y="407" width="5" height="5" fill="#fff"/><rect x="760.5" y="397.5" width="27" height="27" fill="#8c7426" stroke="#fff" stroke-width="1"/><rect x="766" y="403" width="16" height="16" fill="#111"/><rect x="768.5" y="405.5" width="11" height="11" fill="#4a4a4a"/><rect x="747" y="383" width="27" height="27" fill="#b83a2d" stroke="#fff" stroke-width="1.5"/></g><path d="M2102 608h13M2102 610.7h13M2102 613.4h13M2102 616.1h13" stroke="#c4c4c4" stroke-width="1"/></svg>
<div class="a" style="left:1314px;top:673px;width:804px;height:20px;background:#333333;"></div>
<div class="a" style="left:1314px;top:673px;width:142.5px;height:20px;background:#3a3a3a;"></div>
<div class="a" style="left:1456.5px;top:673px;width:1px;height:20px;background:#2b2b2b;"></div>
<div class="a" style="left:1314px;top:692.5px;width:804px;height:1px;background:#2f2f2f;"></div>
<div class="t" style="left:1338px;top:676.5px;font-size:13px;color:#f2f2f2;font-weight:bold;">animate.fla (Canvas)*</div>
<div class="a" style="left:1314px;top:693.5px;width:804px;height:30.5px;background:#383838;"></div>
<svg class="a" style="left:0px;top:0px;" width="2440" height="730" viewBox="0 0 2440 730"><path d="M1321.5 679.5 L1328.5 686.5 M1328.5 679.5 L1321.5 686.5" stroke="#777" stroke-width="1"/><rect x="1402.3" y="696.7" width="98.5" height="24" rx="3" fill="#2f2f2f"/><circle cx="1330" cy="705" r="3.6" fill="#eee"/><circle cx="1326" cy="710" r="3.6" fill="#eee"/><circle cx="1334" cy="710" r="3.6" fill="#eee"/><path d="M1330 709 L1327 716 H1333Z" fill="#eee"/><path d="M1335 717 L1337 717 L1337 715Z" fill="#ddd"/><circle cx="1362" cy="708.5" r="0.8" fill="#666"/><path d="M1376 708.5 H1389 M1381 703 L1375.5 708.5 L1381 714" fill="none" stroke="#eee" stroke-width="2.4"/><g transform="translate(1409.3 701.5) scale(0.74)"><path d="M0 0 H2.6 V2.4 H5 L7 5.8 L4.6 8.6 L8.4 12.6 L10.8 9.8 L14.6 15.2 L19 13.8 V19.1 H0Z" fill="#d2d2d2"/><path d="M10.4 0.4 A8.6 8.6 0 0 0 19 9" fill="none" stroke="#d2d2d2" stroke-width="1.7"/><path d="M15 0.6 H19 V4.8 Q16 4.2 15 0.6Z" fill="#d2d2d2"/></g><g transform="translate(1383.2 348.73) scale(0.74316)"><path d="M730 476 V494 M721 485 H739" stroke="#eee" stroke-width="1.8"/><rect x="724" y="479" width="12" height="12" fill="none" stroke="#eee" stroke-width="1.6"/><path d="M763 487 V481 Q765 479 767 481 V486 V479 Q769 477 771 479 V486 V480 Q773 478 775 480 V491 Q774 496 769 496 Q765 496 762 492 L760 488Z" fill="#d6d6d6"/><path d="M775 479 L784 486 L777 493" fill="none" stroke="#ddd" stroke-width="1.4"/><rect x="808" y="476" width="17" height="17" fill="none" stroke="#5a5a5a" stroke-width="3" stroke-dasharray="1.5 1.5"/><rect x="811" y="479" width="11" height="11" fill="none" stroke="#666" stroke-width="1.5"/><path d="M848 478 L854 472 L860 478 M848 489 L854 495 L860 489" fill="none" stroke="#eee" stroke-width="2"/></g><rect x="2093" y="697" width="18" height="24" rx="4" fill="#2b2b2b"/><path d="M2096 706 L2101 711 L2106 706" fill="none" stroke="#ddd" stroke-width="1.5"/><rect x="2028.5" y="697.5" width="65" height="23" fill="#1e1e1e" stroke="#6a6a6a" stroke-width="1"/></svg>
<div class="t" style="left:1437.5px;top:700.5px;font-size:14px;color:#eaeaea;font-weight:normal;">clipEnnemi</div>
<div class="t" style="left:2036px;top:702.5px;font-size:12.5px;color:#f2f2f2;font-weight:normal;">100%</div>
<div class="a" style="left:1314px;top:724px;width:804px;height:15.6px;background:#474747;"></div>
<div class="a" style="left:1314px;top:739.6px;width:16px;height:633.4px;background:#474747;"></div>
<svg class="a" style="left:0px;top:0px;" width="2440" height="1373" viewBox="0 0 2440 1373"><rect x="1330.9" y="735" width="1" height="4.6" fill="#bdbdbd"/><rect x="1336" y="737" width="0.9" height="2.6" fill="#bdbdbd"/><rect x="1340.9" y="735" width="1" height="4.6" fill="#bdbdbd"/><rect x="1346" y="737" width="0.9" height="2.6" fill="#bdbdbd"/><rect x="1350.9" y="735" width="1" height="4.6" fill="#bdbdbd"/><rect x="1356" y="737" width="0.9" height="2.6" fill="#bdbdbd"/><rect x="1360.9" y="724" width="1" height="15.6" fill="#d4d4d4"/><rect x="1366" y="737" width="0.9" height="2.6" fill="#bdbdbd"/><rect x="1370.9" y="735" width="1" height="4.6" fill="#bdbdbd"/><rect x="1376" y="737" width="0.9" height="2.6" fill="#bdbdbd"/><rect x="1380.9" y="735" width="1" height="4.6" fill="#bdbdbd"/><rect x="1386" y="737" width="0.9" height="2.6" fill="#bdbdbd"/><rect x="1390.9" y="735" width="1" height="4.6" fill="#bdbdbd"/><rect x="1396" y="737" width="0.9" height="2.6" fill="#bdbdbd"/><rect x="1400.9" y="735" width="1" height="4.6" fill="#bdbdbd"/><rect x="1406" y="737" width="0.9" height="2.6" fill="#bdbdbd"/><rect x="1410.9" y="724" width="1" height="15.6" fill="#d4d4d4"/><rect x="1416" y="737" width="0.9" height="2.6" fill="#bdbdbd"/><rect x="1420.9" y="735" width="1" height="4.6" fill="#bdbdbd"/><rect x="1426" y="737" width="0.9" height="2.6" fill="#bdbdbd"/><rect x="1430.9" y="735" width="1" height="4.6" fill="#bdbdbd"/><rect x="1436" y="737" width="0.9" height="2.6" fill="#bdbdbd"/><rect x="1440.9" y="735" width="1" height="4.6" fill="#bdbdbd"/><rect x="1446" y="737" width="0.9" height="2.6" fill="#bdbdbd"/><rect x="1450.9" y="735" width="1" height="4.6" fill="#bdbdbd"/><rect x="1456" y="737" width="0.9" height="2.6" fill="#bdbdbd"/><rect x="1460.9" y="724" width="1" height="15.6" fill="#d4d4d4"/><rect x="1466" y="737" width="0.9" height="2.6" fill="#bdbdbd"/><rect x="1470.9" y="735" width="1" height="4.6" fill="#bdbdbd"/><rect x="1476" y="737" width="0.9" height="2.6" fill="#bdbdbd"/><rect x="1480.9" y="735" width="1" height="4.6" fill="#bdbdbd"/><rect x="1486" y="737" width="0.9" height="2.6" fill="#bdbdbd"/><rect x="1490.9" y="735" width="1" height="4.6" fill="#bdbdbd"/><rect x="1496" y="737" width="0.9" height="2.6" fill="#bdbdbd"/><rect x="1500.9" y="735" width="1" height="4.6" fill="#bdbdbd"/><rect x="1506" y="737" width="0.9" height="2.6" fill="#bdbdbd"/><rect x="1510.9" y="724" width="1" height="15.6" fill="#d4d4d4"/><rect x="1516" y="737" width="0.9" height="2.6" fill="#bdbdbd"/><rect x="1520.9" y="735" width="1" height="4.6" fill="#bdbdbd"/><rect x="1526" y="737" width="0.9" height="2.6" fill="#bdbdbd"/><rect x="1530.9" y="735" width="1" height="4.6" fill="#bdbdbd"/><rect x="1536" y="737" width="0.9" height="2.6" fill="#bdbdbd"/><rect x="1540.9" y="735" width="1" height="4.6" fill="#bdbdbd"/><rect x="1546" y="737" width="0.9" height="2.6" fill="#bdbdbd"/><rect x="1550.9" y="735" width="1" height="4.6" fill="#bdbdbd"/><rect x="1556" y="737" width="0.9" height="2.6" fill="#bdbdbd"/><rect x="1560.9" y="724" width="1" height="15.6" fill="#d4d4d4"/><rect x="1566" y="737" width="0.9" height="2.6" fill="#bdbdbd"/><rect x="1570.9" y="735" width="1" height="4.6" fill="#bdbdbd"/><rect x="1576" y="737" width="0.9" height="2.6" fill="#bdbdbd"/><rect x="1580.9" y="735" width="1" height="4.6" fill="#bdbdbd"/><rect x="1586" y="737" width="0.9" height="2.6" fill="#bdbdbd"/><rect x="1590.9" y="735" width="1" height="4.6" fill="#bdbdbd"/><rect x="1596" y="737" width="0.9" height="2.6" fill="#bdbdbd"/><rect x="1600.9" y="735" width="1" height="4.6" fill="#bdbdbd"/><rect x="1606" y="737" width="0.9" height="2.6" fill="#bdbdbd"/><rect x="1610.9" y="724" width="1" height="15.6" fill="#d4d4d4"/><rect x="1616" y="737" width="0.9" height="2.6" fill="#bdbdbd"/><rect x="1620.9" y="735" width="1" height="4.6" fill="#bdbdbd"/><rect x="1626" y="737" width="0.9" height="2.6" fill="#bdbdbd"/><rect x="1630.9" y="735" width="1" height="4.6" fill="#bdbdbd"/><rect x="1636" y="737" width="0.9" height="2.6" fill="#bdbdbd"/><rect x="1640.9" y="735" width="1" height="4.6" fill="#bdbdbd"/><rect x="1646" y="737" width="0.9" height="2.6" fill="#bdbdbd"/><rect x="1650.9" y="735" width="1" height="4.6" fill="#bdbdbd"/><rect x="1656" y="737" width="0.9" height="2.6" fill="#bdbdbd"/><rect x="1660.9" y="724" width="1" height="15.6" fill="#d4d4d4"/><rect x="1666" y="737" width="0.9" height="2.6" fill="#bdbdbd"/><rect x="1670.9" y="735" width="1" height="4.6" fill="#bdbdbd"/><rect x="1676" y="737" width="0.9" height="2.6" fill="#bdbdbd"/><rect x="1680.9" y="735" width="1" height="4.6" fill="#bdbdbd"/><rect x="1686" y="737" width="0.9" height="2.6" fill="#bdbdbd"/><rect x="1690.9" y="735" width="1" height="4.6" fill="#bdbdbd"/><rect x="1696" y="737" width="0.9" height="2.6" fill="#bdbdbd"/><rect x="1700.9" y="735" width="1" height="4.6" fill="#bdbdbd"/><rect x="1706" y="737" width="0.9" height="2.6" fill="#bdbdbd"/><rect x="1710.9" y="724" width="1" height="15.6" fill="#d4d4d4"/><rect x="1716" y="737" width="0.9" height="2.6" fill="#bdbdbd"/><rect x="1720.9" y="735" width="1" height="4.6" fill="#bdbdbd"/><rect x="1726" y="737" width="0.9" height="2.6" fill="#bdbdbd"/><rect x="1730.9" y="735" width="1" height="4.6" fill="#bdbdbd"/><rect x="1736" y="737" width="0.9" height="2.6" fill="#bdbdbd"/><rect x="1740.9" y="735" width="1" height="4.6" fill="#bdbdbd"/><rect x="1746" y="737" width="0.9" height="2.6" fill="#bdbdbd"/><rect x="1750.9" y="735" width="1" height="4.6" fill="#bdbdbd"/><rect x="1756" y="737" width="0.9" height="2.6" fill="#bdbdbd"/><rect x="1760.9" y="724" width="1" height="15.6" fill="#d4d4d4"/><rect x="1766" y="737" width="0.9" height="2.6" fill="#bdbdbd"/><rect x="1770.9" y="735" width="1" height="4.6" fill="#bdbdbd"/><rect x="1776" y="737" width="0.9" height="2.6" fill="#bdbdbd"/><rect x="1780.9" y="735" width="1" height="4.6" fill="#bdbdbd"/><rect x="1786" y="737" width="0.9" height="2.6" fill="#bdbdbd"/><rect x="1790.9" y="735" width="1" height="4.6" fill="#bdbdbd"/><rect x="1796" y="737" width="0.9" height="2.6" fill="#bdbdbd"/><rect x="1800.9" y="735" width="1" height="4.6" fill="#bdbdbd"/><rect x="1806" y="737" width="0.9" height="2.6" fill="#bdbdbd"/><rect x="1810.9" y="724" width="1" height="15.6" fill="#d4d4d4"/><rect x="1816" y="737" width="0.9" height="2.6" fill="#bdbdbd"/><rect x="1820.9" y="735" width="1" height="4.6" fill="#bdbdbd"/><rect x="1826" y="737" width="0.9" height="2.6" fill="#bdbdbd"/><rect x="1830.9" y="735" width="1" height="4.6" fill="#bdbdbd"/><rect x="1836" y="737" width="0.9" height="2.6" fill="#bdbdbd"/><rect x="1840.9" y="735" width="1" height="4.6" fill="#bdbdbd"/><rect x="1846" y="737" width="0.9" height="2.6" fill="#bdbdbd"/><rect x="1850.9" y="735" width="1" height="4.6" fill="#bdbdbd"/><rect x="1856" y="737" width="0.9" height="2.6" fill="#bdbdbd"/><rect x="1860.9" y="724" width="1" height="15.6" fill="#d4d4d4"/><rect x="1866" y="737" width="0.9" height="2.6" fill="#bdbdbd"/><rect x="1870.9" y="735" width="1" height="4.6" fill="#bdbdbd"/><rect x="1876" y="737" width="0.9" height="2.6" fill="#bdbdbd"/><rect x="1880.9" y="735" width="1" height="4.6" fill="#bdbdbd"/><rect x="1886" y="737" width="0.9" height="2.6" fill="#bdbdbd"/><rect x="1890.9" y="735" width="1" height="4.6" fill="#bdbdbd"/><rect x="1896" y="737" width="0.9" height="2.6" fill="#bdbdbd"/><rect x="1900.9" y="735" width="1" height="4.6" fill="#bdbdbd"/><rect x="1906" y="737" width="0.9" height="2.6" fill="#bdbdbd"/><rect x="1910.9" y="724" width="1" height="15.6" fill="#d4d4d4"/><rect x="1916" y="737" width="0.9" height="2.6" fill="#bdbdbd"/><rect x="1920.9" y="735" width="1" height="4.6" fill="#bdbdbd"/><rect x="1926" y="737" width="0.9" height="2.6" fill="#bdbdbd"/><rect x="1930.9" y="735" width="1" height="4.6" fill="#bdbdbd"/><rect x="1936" y="737" width="0.9" height="2.6" fill="#bdbdbd"/><rect x="1940.9" y="735" width="1" height="4.6" fill="#bdbdbd"/><rect x="1946" y="737" width="0.9" height="2.6" fill="#bdbdbd"/><rect x="1950.9" y="735" width="1" height="4.6" fill="#bdbdbd"/><rect x="1956" y="737" width="0.9" height="2.6" fill="#bdbdbd"/><rect x="1960.9" y="724" width="1" height="15.6" fill="#d4d4d4"/><rect x="1966" y="737" width="0.9" height="2.6" fill="#bdbdbd"/><rect x="1970.9" y="735" width="1" height="4.6" fill="#bdbdbd"/><rect x="1976" y="737" width="0.9" height="2.6" fill="#bdbdbd"/><rect x="1980.9" y="735" width="1" height="4.6" fill="#bdbdbd"/><rect x="1986" y="737" width="0.9" height="2.6" fill="#bdbdbd"/><rect x="1990.9" y="735" width="1" height="4.6" fill="#bdbdbd"/><rect x="1996" y="737" width="0.9" height="2.6" fill="#bdbdbd"/><rect x="2000.9" y="735" width="1" height="4.6" fill="#bdbdbd"/><rect x="2006" y="737" width="0.9" height="2.6" fill="#bdbdbd"/><rect x="2010.9" y="724" width="1" height="15.6" fill="#d4d4d4"/><rect x="2016" y="737" width="0.9" height="2.6" fill="#bdbdbd"/><rect x="2020.9" y="735" width="1" height="4.6" fill="#bdbdbd"/><rect x="2026" y="737" width="0.9" height="2.6" fill="#bdbdbd"/><rect x="2030.9" y="735" width="1" height="4.6" fill="#bdbdbd"/><rect x="2036" y="737" width="0.9" height="2.6" fill="#bdbdbd"/><rect x="2040.9" y="735" width="1" height="4.6" fill="#bdbdbd"/><rect x="2046" y="737" width="0.9" height="2.6" fill="#bdbdbd"/><rect x="2050.9" y="735" width="1" height="4.6" fill="#bdbdbd"/><rect x="2056" y="737" width="0.9" height="2.6" fill="#bdbdbd"/><rect x="2060.9" y="724" width="1" height="15.6" fill="#d4d4d4"/><rect x="2066" y="737" width="0.9" height="2.6" fill="#bdbdbd"/><rect x="2070.9" y="735" width="1" height="4.6" fill="#bdbdbd"/><rect x="2076" y="737" width="0.9" height="2.6" fill="#bdbdbd"/><rect x="2080.9" y="735" width="1" height="4.6" fill="#bdbdbd"/><rect x="2086" y="737" width="0.9" height="2.6" fill="#bdbdbd"/><rect x="2090.9" y="735" width="1" height="4.6" fill="#bdbdbd"/><rect x="2096" y="737" width="0.9" height="2.6" fill="#bdbdbd"/><rect x="2100.9" y="735" width="1" height="4.6" fill="#bdbdbd"/><rect x="2106" y="737" width="0.9" height="2.6" fill="#bdbdbd"/><rect x="2110.9" y="724" width="1" height="15.6" fill="#d4d4d4"/><rect x="2116" y="737" width="0.9" height="2.6" fill="#bdbdbd"/><rect x="1327.5" y="743.4" width="2.5" height="0.9" fill="#bdbdbd"/><rect x="1314" y="748.3" width="16" height="1" fill="#d4d4d4"/><rect x="1327.5" y="753.4" width="2.5" height="0.9" fill="#bdbdbd"/><rect x="1325.5" y="758.3" width="4.5" height="1" fill="#bdbdbd"/><rect x="1327.5" y="763.4" width="2.5" height="0.9" fill="#bdbdbd"/><rect x="1325.5" y="768.3" width="4.5" height="1" fill="#bdbdbd"/><rect x="1327.5" y="773.4" width="2.5" height="0.9" fill="#bdbdbd"/><rect x="1325.5" y="778.3" width="4.5" height="1" fill="#bdbdbd"/><rect x="1327.5" y="783.4" width="2.5" height="0.9" fill="#bdbdbd"/><rect x="1325.5" y="788.3" width="4.5" height="1" fill="#bdbdbd"/><rect x="1327.5" y="793.4" width="2.5" height="0.9" fill="#bdbdbd"/><rect x="1314" y="798.3" width="16" height="1" fill="#d4d4d4"/><rect x="1327.5" y="803.4" width="2.5" height="0.9" fill="#bdbdbd"/><rect x="1325.5" y="808.3" width="4.5" height="1" fill="#bdbdbd"/><rect x="1327.5" y="813.4" width="2.5" height="0.9" fill="#bdbdbd"/><rect x="1325.5" y="818.3" width="4.5" height="1" fill="#bdbdbd"/><rect x="1327.5" y="823.4" width="2.5" height="0.9" fill="#bdbdbd"/><rect x="1325.5" y="828.3" width="4.5" height="1" fill="#bdbdbd"/><rect x="1327.5" y="833.4" width="2.5" height="0.9" fill="#bdbdbd"/><rect x="1325.5" y="838.3" width="4.5" height="1" fill="#bdbdbd"/><rect x="1327.5" y="843.4" width="2.5" height="0.9" fill="#bdbdbd"/><rect x="1314" y="848.3" width="16" height="1" fill="#d4d4d4"/><rect x="1327.5" y="853.4" width="2.5" height="0.9" fill="#bdbdbd"/><rect x="1325.5" y="858.3" width="4.5" height="1" fill="#bdbdbd"/><rect x="1327.5" y="863.4" width="2.5" height="0.9" fill="#bdbdbd"/><rect x="1325.5" y="868.3" width="4.5" height="1" fill="#bdbdbd"/><rect x="1327.5" y="873.4" width="2.5" height="0.9" fill="#bdbdbd"/><rect x="1325.5" y="878.3" width="4.5" height="1" fill="#bdbdbd"/><rect x="1327.5" y="883.4" width="2.5" height="0.9" fill="#bdbdbd"/><rect x="1325.5" y="888.3" width="4.5" height="1" fill="#bdbdbd"/><rect x="1327.5" y="893.4" width="2.5" height="0.9" fill="#bdbdbd"/><rect x="1314" y="898.3" width="16" height="1" fill="#d4d4d4"/><rect x="1327.5" y="903.4" width="2.5" height="0.9" fill="#bdbdbd"/><rect x="1325.5" y="908.3" width="4.5" height="1" fill="#bdbdbd"/><rect x="1327.5" y="913.4" width="2.5" height="0.9" fill="#bdbdbd"/><rect x="1325.5" y="918.3" width="4.5" height="1" fill="#bdbdbd"/><rect x="1327.5" y="923.4" width="2.5" height="0.9" fill="#bdbdbd"/><rect x="1325.5" y="928.3" width="4.5" height="1" fill="#bdbdbd"/><rect x="1327.5" y="933.4" width="2.5" height="0.9" fill="#bdbdbd"/><rect x="1325.5" y="938.3" width="4.5" height="1" fill="#bdbdbd"/><rect x="1327.5" y="943.4" width="2.5" height="0.9" fill="#bdbdbd"/><rect x="1314" y="948.3" width="16" height="1" fill="#d4d4d4"/><rect x="1327.5" y="953.4" width="2.5" height="0.9" fill="#bdbdbd"/><rect x="1325.5" y="958.3" width="4.5" height="1" fill="#bdbdbd"/><rect x="1327.5" y="963.4" width="2.5" height="0.9" fill="#bdbdbd"/><rect x="1325.5" y="968.3" width="4.5" height="1" fill="#bdbdbd"/><rect x="1327.5" y="973.4" width="2.5" height="0.9" fill="#bdbdbd"/><rect x="1325.5" y="978.3" width="4.5" height="1" fill="#bdbdbd"/><rect x="1327.5" y="983.4" width="2.5" height="0.9" fill="#bdbdbd"/><rect x="1325.5" y="988.3" width="4.5" height="1" fill="#bdbdbd"/><rect x="1327.5" y="993.4" width="2.5" height="0.9" fill="#bdbdbd"/><rect x="1314" y="998.3" width="16" height="1" fill="#d4d4d4"/><rect x="1327.5" y="1003.4" width="2.5" height="0.9" fill="#bdbdbd"/><rect x="1325.5" y="1008.3" width="4.5" height="1" fill="#bdbdbd"/><rect x="1327.5" y="1013.4" width="2.5" height="0.9" fill="#bdbdbd"/><rect x="1325.5" y="1018.3" width="4.5" height="1" fill="#bdbdbd"/><rect x="1327.5" y="1023.4" width="2.5" height="0.9" fill="#bdbdbd"/><rect x="1325.5" y="1028.3" width="4.5" height="1" fill="#bdbdbd"/><rect x="1327.5" y="1033.4" width="2.5" height="0.9" fill="#bdbdbd"/><rect x="1325.5" y="1038.3" width="4.5" height="1" fill="#bdbdbd"/><rect x="1327.5" y="1043.4" width="2.5" height="0.9" fill="#bdbdbd"/><rect x="1314" y="1048.3" width="16" height="1" fill="#d4d4d4"/><rect x="1327.5" y="1053.4" width="2.5" height="0.9" fill="#bdbdbd"/><rect x="1325.5" y="1058.3" width="4.5" height="1" fill="#bdbdbd"/><rect x="1327.5" y="1063.4" width="2.5" height="0.9" fill="#bdbdbd"/><rect x="1325.5" y="1068.3" width="4.5" height="1" fill="#bdbdbd"/><rect x="1327.5" y="1073.4" width="2.5" height="0.9" fill="#bdbdbd"/><rect x="1325.5" y="1078.3" width="4.5" height="1" fill="#bdbdbd"/><rect x="1327.5" y="1083.4" width="2.5" height="0.9" fill="#bdbdbd"/><rect x="1325.5" y="1088.3" width="4.5" height="1" fill="#bdbdbd"/><rect x="1327.5" y="1093.4" width="2.5" height="0.9" fill="#bdbdbd"/><rect x="1314" y="1098.3" width="16" height="1" fill="#d4d4d4"/><rect x="1327.5" y="1103.4" width="2.5" height="0.9" fill="#bdbdbd"/><rect x="1325.5" y="1108.3" width="4.5" height="1" fill="#bdbdbd"/><rect x="1327.5" y="1113.4" width="2.5" height="0.9" fill="#bdbdbd"/><rect x="1325.5" y="1118.3" width="4.5" height="1" fill="#bdbdbd"/><rect x="1327.5" y="1123.4" width="2.5" height="0.9" fill="#bdbdbd"/><rect x="1325.5" y="1128.3" width="4.5" height="1" fill="#bdbdbd"/><rect x="1327.5" y="1133.4" width="2.5" height="0.9" fill="#bdbdbd"/><rect x="1325.5" y="1138.3" width="4.5" height="1" fill="#bdbdbd"/><rect x="1327.5" y="1143.4" width="2.5" height="0.9" fill="#bdbdbd"/><rect x="1314" y="1148.3" width="16" height="1" fill="#d4d4d4"/><rect x="1327.5" y="1153.4" width="2.5" height="0.9" fill="#bdbdbd"/><rect x="1325.5" y="1158.3" width="4.5" height="1" fill="#bdbdbd"/><rect x="1327.5" y="1163.4" width="2.5" height="0.9" fill="#bdbdbd"/><rect x="1325.5" y="1168.3" width="4.5" height="1" fill="#bdbdbd"/><rect x="1327.5" y="1173.4" width="2.5" height="0.9" fill="#bdbdbd"/><rect x="1325.5" y="1178.3" width="4.5" height="1" fill="#bdbdbd"/><rect x="1327.5" y="1183.4" width="2.5" height="0.9" fill="#bdbdbd"/><rect x="1325.5" y="1188.3" width="4.5" height="1" fill="#bdbdbd"/><rect x="1327.5" y="1193.4" width="2.5" height="0.9" fill="#bdbdbd"/><rect x="1314" y="1198.3" width="16" height="1" fill="#d4d4d4"/><rect x="1327.5" y="1203.4" width="2.5" height="0.9" fill="#bdbdbd"/><rect x="1325.5" y="1208.3" width="4.5" height="1" fill="#bdbdbd"/><rect x="1327.5" y="1213.4" width="2.5" height="0.9" fill="#bdbdbd"/><rect x="1325.5" y="1218.3" width="4.5" height="1" fill="#bdbdbd"/><rect x="1327.5" y="1223.4" width="2.5" height="0.9" fill="#bdbdbd"/><rect x="1325.5" y="1228.3" width="4.5" height="1" fill="#bdbdbd"/><rect x="1327.5" y="1233.4" width="2.5" height="0.9" fill="#bdbdbd"/><rect x="1325.5" y="1238.3" width="4.5" height="1" fill="#bdbdbd"/><rect x="1327.5" y="1243.4" width="2.5" height="0.9" fill="#bdbdbd"/><rect x="1314" y="1248.3" width="16" height="1" fill="#d4d4d4"/><rect x="1327.5" y="1253.4" width="2.5" height="0.9" fill="#bdbdbd"/><rect x="1325.5" y="1258.3" width="4.5" height="1" fill="#bdbdbd"/><rect x="1327.5" y="1263.4" width="2.5" height="0.9" fill="#bdbdbd"/><rect x="1325.5" y="1268.3" width="4.5" height="1" fill="#bdbdbd"/><rect x="1327.5" y="1273.4" width="2.5" height="0.9" fill="#bdbdbd"/><rect x="1325.5" y="1278.3" width="4.5" height="1" fill="#bdbdbd"/><rect x="1327.5" y="1283.4" width="2.5" height="0.9" fill="#bdbdbd"/><rect x="1325.5" y="1288.3" width="4.5" height="1" fill="#bdbdbd"/><rect x="1327.5" y="1293.4" width="2.5" height="0.9" fill="#bdbdbd"/><rect x="1314" y="1298.3" width="16" height="1" fill="#d4d4d4"/><rect x="1327.5" y="1303.4" width="2.5" height="0.9" fill="#bdbdbd"/><rect x="1325.5" y="1308.3" width="4.5" height="1" fill="#bdbdbd"/><rect x="1327.5" y="1313.4" width="2.5" height="0.9" fill="#bdbdbd"/><rect x="1325.5" y="1318.3" width="4.5" height="1" fill="#bdbdbd"/><rect x="1327.5" y="1323.4" width="2.5" height="0.9" fill="#bdbdbd"/><rect x="1325.5" y="1328.3" width="4.5" height="1" fill="#bdbdbd"/><rect x="1327.5" y="1333.4" width="2.5" height="0.9" fill="#bdbdbd"/><rect x="1325.5" y="1338.3" width="4.5" height="1" fill="#bdbdbd"/><rect x="1327.5" y="1343.4" width="2.5" height="0.9" fill="#bdbdbd"/><rect x="1314" y="1348.3" width="16" height="1" fill="#d4d4d4"/><rect x="1327.5" y="1353.4" width="2.5" height="0.9" fill="#bdbdbd"/><rect x="1325.5" y="1358.3" width="4.5" height="1" fill="#bdbdbd"/><rect x="1327.5" y="1363.4" width="2.5" height="0.9" fill="#bdbdbd"/><rect x="1325.5" y="1368.3" width="4.5" height="1" fill="#bdbdbd"/></svg>
<div class="t" style="left:1363.9px;top:726px;font-size:10.2px;color:#dcdcdc;font-weight:normal;transform:none">350</div>
<div class="t" style="left:1413.9px;top:726px;font-size:10.2px;color:#dcdcdc;font-weight:normal;transform:none">300</div>
<div class="t" style="left:1463.9px;top:726px;font-size:10.2px;color:#dcdcdc;font-weight:normal;transform:none">250</div>
<div class="t" style="left:1513.9px;top:726px;font-size:10.2px;color:#dcdcdc;font-weight:normal;transform:none">200</div>
<div class="t" style="left:1563.9px;top:726px;font-size:10.2px;color:#dcdcdc;font-weight:normal;transform:none">150</div>
<div class="t" style="left:1613.9px;top:726px;font-size:10.2px;color:#dcdcdc;font-weight:normal;transform:none">100</div>
<div class="t" style="left:1663.9px;top:726px;font-size:10.2px;color:#dcdcdc;font-weight:normal;transform:none">50</div>
<div class="t" style="left:1713.9px;top:726px;font-size:10.2px;color:#dcdcdc;font-weight:normal;transform:none">0</div>
<div class="t" style="left:1763.9px;top:726px;font-size:10.2px;color:#dcdcdc;font-weight:normal;transform:none">50</div>
<div class="t" style="left:1813.9px;top:726px;font-size:10.2px;color:#dcdcdc;font-weight:normal;transform:none">100</div>
<div class="t" style="left:1863.9px;top:726px;font-size:10.2px;color:#dcdcdc;font-weight:normal;transform:none">150</div>
<div class="t" style="left:1913.9px;top:726px;font-size:10.2px;color:#dcdcdc;font-weight:normal;transform:none">200</div>
<div class="t" style="left:1963.9px;top:726px;font-size:10.2px;color:#dcdcdc;font-weight:normal;transform:none">250</div>
<div class="t" style="left:2013.9px;top:726px;font-size:10.2px;color:#dcdcdc;font-weight:normal;transform:none">300</div>
<div class="t" style="left:2063.9px;top:726px;font-size:10.2px;color:#dcdcdc;font-weight:normal;transform:none">350</div>
<div class="t" style="left:1314px;top:767.31px;font-size:10.2px;color:#dcdcdc;transform:rotate(-90deg);transform-origin:0 0">450</div>
<div class="t" style="left:1314px;top:817.31px;font-size:10.2px;color:#dcdcdc;transform:rotate(-90deg);transform-origin:0 0">400</div>
<div class="t" style="left:1314px;top:867.31px;font-size:10.2px;color:#dcdcdc;transform:rotate(-90deg);transform-origin:0 0">350</div>
<div class="t" style="left:1314px;top:917.31px;font-size:10.2px;color:#dcdcdc;transform:rotate(-90deg);transform-origin:0 0">300</div>
<div class="t" style="left:1314px;top:967.31px;font-size:10.2px;color:#dcdcdc;transform:rotate(-90deg);transform-origin:0 0">250</div>
<div class="t" style="left:1314px;top:1017.31px;font-size:10.2px;color:#dcdcdc;transform:rotate(-90deg);transform-origin:0 0">200</div>
<div class="t" style="left:1314px;top:1067.31px;font-size:10.2px;color:#dcdcdc;transform:rotate(-90deg);transform-origin:0 0">150</div>
<div class="t" style="left:1314px;top:1117.31px;font-size:10.2px;color:#dcdcdc;transform:rotate(-90deg);transform-origin:0 0">100</div>
<div class="t" style="left:1314px;top:1161.64px;font-size:10.2px;color:#dcdcdc;transform:rotate(-90deg);transform-origin:0 0">50</div>
<div class="t" style="left:1314px;top:1205.97px;font-size:10.2px;color:#dcdcdc;transform:rotate(-90deg);transform-origin:0 0">0</div>
<div class="t" style="left:1314px;top:1261.64px;font-size:10.2px;color:#dcdcdc;transform:rotate(-90deg);transform-origin:0 0">50</div>
<div class="t" style="left:1314px;top:1317.31px;font-size:10.2px;color:#dcdcdc;transform:rotate(-90deg);transform-origin:0 0">100</div>
<div class="t" style="left:1314px;top:1367.31px;font-size:10.2px;color:#dcdcdc;transform:rotate(-90deg);transform-origin:0 0">150</div>
<svg class="a" style="left:1330px;top:739.6px;background:#fff;" width="772" height="615.8000000000001" viewBox="0 0 772 615.8000000000001"><path d="M1.4 0V615.8000000000001M11.4 0V615.8000000000001M21.4 0V615.8000000000001M31.4 0V615.8000000000001M41.4 0V615.8000000000001M51.4 0V615.8000000000001M61.4 0V615.8000000000001M71.4 0V615.8000000000001M81.4 0V615.8000000000001M91.4 0V615.8000000000001M101.4 0V615.8000000000001M111.4 0V615.8000000000001M121.4 0V615.8000000000001M131.4 0V615.8000000000001M141.4 0V615.8000000000001M151.4 0V615.8000000000001M161.4 0V615.8000000000001M171.4 0V615.8000000000001M181.4 0V615.8000000000001M191.4 0V615.8000000000001M201.4 0V615.8000000000001M211.4 0V615.8000000000001M221.4 0V615.8000000000001M231.4 0V615.8000000000001M241.4 0V615.8000000000001M251.4 0V615.8000000000001M261.4 0V615.8000000000001M271.4 0V615.8000000000001M281.4 0V615.8000000000001M291.4 0V615.8000000000001M301.4 0V615.8000000000001M311.4 0V615.8000000000001M321.4 0V615.8000000000001M331.4 0V615.8000000000001M341.4 0V615.8000000000001M351.4 0V615.8000000000001M361.4 0V615.8000000000001M371.4 0V615.8000000000001M381.4 0V615.8000000000001M391.4 0V615.8000000000001M401.4 0V615.8000000000001M411.4 0V615.8000000000001M421.4 0V615.8000000000001M431.4 0V615.8000000000001M441.4 0V615.8000000000001M451.4 0V615.8000000000001M461.4 0V615.8000000000001M471.4 0V615.8000000000001M481.4 0V615.8000000000001M491.4 0V615.8000000000001M501.4 0V615.8000000000001M511.4 0V615.8000000000001M521.4 0V615.8000000000001M531.4 0V615.8000000000001M541.4 0V615.8000000000001M551.4 0V615.8000000000001M561.4 0V615.8000000000001M571.4 0V615.8000000000001M581.4 0V615.8000000000001M591.4 0V615.8000000000001M601.4 0V615.8000000000001M611.4 0V615.8000000000001M621.4 0V615.8000000000001M631.4 0V615.8000000000001M641.4 0V615.8000000000001M651.4 0V615.8000000000001M661.4 0V615.8000000000001M671.4 0V615.8000000000001M681.4 0V615.8000000000001M691.4 0V615.8000000000001M701.4 0V615.8000000000001M711.4 0V615.8000000000001M721.4 0V615.8000000000001M731.4 0V615.8000000000001M741.4 0V615.8000000000001M751.4 0V615.8000000000001M761.4 0V615.8000000000001M771.4 0V615.8000000000001M0 -0.8H772M0 9.2H772M0 19.2H772M0 29.2H772M0 39.2H772M0 49.2H772M0 59.2H772M0 69.2H772M0 79.2H772M0 89.2H772M0 99.2H772M0 109.2H772M0 119.2H772M0 129.2H772M0 139.2H772M0 149.2H772M0 159.2H772M0 169.2H772M0 179.2H772M0 189.2H772M0 199.2H772M0 209.2H772M0 219.2H772M0 229.2H772M0 239.2H772M0 249.2H772M0 259.2H772M0 269.2H772M0 279.2H772M0 289.2H772M0 299.2H772M0 309.2H772M0 319.2H772M0 329.2H772M0 339.2H772M0 349.2H772M0 359.2H772M0 369.2H772M0 379.2H772M0 389.2H772M0 399.2H772M0 409.2H772M0 419.2H772M0 429.2H772M0 439.2H772M0 449.2H772M0 459.2H772M0 469.2H772M0 479.2H772M0 489.2H772M0 499.2H772M0 509.2H772M0 519.2H772M0 529.2H772M0 539.2H772M0 549.2H772M0 559.2H772M0 569.2H772M0 579.2H772M0 589.2H772M0 599.2H772M0 609.2H772" stroke="#9a9a9a" stroke-width="1.45" fill="none"/><rect x="0" y="218.45" width="772" height="1.6" fill="#7ff3f6"/><rect x="0" y="272.95" width="772" height="1.6" fill="#7ff3f6"/><rect x="0" y="458.45" width="772" height="1.6" fill="#7ff3f6"/></svg>
<svg class="a" style="left:0;top:0" width="2440" height="1373"><g stroke="#ffffff" stroke-width="1.57" stroke-linejoin="round"><polygon points="1685.8,917.3 1702.6,935.3 1703.7,949.9 1695.9,947.7 1689.1,930.8" fill="#8a4fa8"/><polygon points="1652.1,989.2 1675.6,1026.3 1670.0,1029.6 1657.7,1007.2" fill="#8a4fa8"/><polygon points="1677.9,982.5 1691.4,1001.6 1684.6,1009.4 1675.6,996.0" fill="#8a4fa8"/><polygon points="1675.6,993.7 1685.8,1013.9 1680.1,1020.7" fill="#8a4fa8"/><polygon points="1690.2,1004.9 1699.2,1020.7 1683.5,1047.6 1694.7,1074.6 1685.8,1081.3 1672.3,1049.9 1674.5,1029.6" fill="#8a4fa8"/><polygon points="1677.9,1038.6 1688.0,1036.4 1683.5,1052.1 1692.5,1070.1 1685.8,1074.6 1676.8,1052.1" fill="#a86cc6"/><polygon points="1730.7,1004.9 1744.2,1009.4 1752.0,1043.1 1748.6,1079.1 1739.7,1076.8 1741.9,1045.4 1735.2,1025.2" fill="#a86cc6"/><polygon points="1694.7,1000.4 1719.4,998.2 1732.9,1007.2 1737.4,1029.6 1728.4,1056.6 1735.2,1083.6 1703.7,1088.0 1701.5,1061.1 1692.5,1029.6" fill="#8a4fa8"/><polygon points="1719.4,1000.4 1732.9,1007.2 1737.4,1029.6 1728.4,1056.6 1732.9,1081.3 1723.9,1061.1 1721.7,1029.6" fill="#a86cc6"/><polygon points="1703.7,960.0 1717.2,952.2 1729.6,969.0 1728.4,987.0 1719.4,996.0 1708.2,993.7 1701.5,975.7" fill="#8a4fa8"/><polygon points="1710.5,971.2 1728.4,969.0 1728.0,987.0 1719.4,993.7 1710.9,984.7" fill="#a86cc6"/><polygon points="1701.5,1085.8 1719.4,1090.3 1699.2,1139.7 1694.7,1173.4 1699.2,1193.6 1680.1,1192.5 1685.8,1142.0" fill="#8a4fa8"/><polygon points="1717.2,1088.0 1735.2,1085.8 1734.7,1142.0 1729.6,1173.4 1749.8,1193.6 1726.2,1192.5 1720.6,1142.0" fill="#a86cc6"/></g><path d="M1707 1199 h10 M1712 1194 v10" stroke="#222" stroke-width="0.9"/></svg>
<div class="a" style="left:2102px;top:739.6px;width:16px;height:615.8000000000001px;background:#3a3a3a;"></div>
<div class="a" style="left:2108.5px;top:823px;width:7px;height:175px;background:#d8d8d8;border-radius:4px"></div>
<div class="a" style="left:1330px;top:1355.4px;width:788px;height:17.6px;background:#3a3a3a;"></div>
<div class="a" style="left:1330px;top:1355.4px;width:788px;height:1.5px;background:#2b2b2b;"></div>
<div class="a" style="left:1452.3px;top:1361px;width:257.6px;height:6.5px;background:#d8d8d8;border-radius:4px"></div>
<div class="a" style="left:2118px;top:587px;width:3px;height:786px;background:#2b2b2b;"></div>
<div class="a" style="left:2121px;top:587px;width:319px;height:310px;background:#373737;"></div>
<div class="a" style="left:2121px;top:587px;width:319px;height:3px;background:#2f2f2f;"></div>
<svg class="a" style="left:0px;top:0px;" width="2440" height="1373" viewBox="0 0 2440 1373"><rect x="2178.5" y="594.5" width="270" height="22" rx="4" fill="#2f2f2f" stroke="#636363" stroke-width="1.1"/><rect x="2141.5" y="622.5" width="310" height="22" rx="4" fill="#2f2f2f" stroke="#636363" stroke-width="1.1"/><rect x="2121" y="653" width="319" height="2.5" fill="#2b2b2b"/><path d="M2141.5 666 L2146 671 L2150.5 666" fill="none" stroke="#eee" stroke-width="1.8"/><path d="M2202 698.5 H2213 V705 M2202 725.5 H2213 V720" fill="none" stroke="#bbb" stroke-width="1.1"/><path d="M2210 712 V708.5 A3.5 3.5 0 0 1 2217 708.5" fill="none" stroke="#ddd" stroke-width="1.5"/><rect x="2207.5" y="712" width="12" height="8.5" rx="1" fill="#ddd"/><circle cx="2213.5" cy="716" r="1.3" fill="#383838"/><rect x="2250.5" y="688.5" width="200" height="22" rx="4" fill="#2f2f2f" stroke="#636363" stroke-width="1.1"/><rect x="2250.5" y="719.5" width="11" height="11" rx="1" fill="none" stroke="#d8d8d8" stroke-width="1.4"/><rect x="2250.5" y="745.5" width="11" height="11" rx="1" fill="none" stroke="#d8d8d8" stroke-width="1.4"/><rect x="2250.5" y="771.5" width="11" height="11" rx="1" fill="none" stroke="#d8d8d8" stroke-width="1.4"/><rect x="2190" y="743" width="38.5" height="18" rx="4" fill="#ffffff"/><rect x="2141.5" y="792.5" width="310" height="23" rx="4" fill="#2f2f2f" stroke="#636363" stroke-width="1.1"/><rect x="2121" y="823" width="319" height="2.5" fill="#2b2b2b"/></svg>
<div class="t" style="left:2141px;top:598px;font-size:13.5px;color:#eaeaea;font-weight:normal;">Profil</div>
<div class="t" style="left:2186px;top:598px;font-size:13.5px;color:#f0f0f0;font-weight:normal;">Par défaut</div>
<div class="t" style="left:2306px;top:626px;font-size:13px;color:#f0f0f0;font-weight:normal;">Paramètres supplémentaires</div>
<div class="t" style="left:2161px;top:662.5px;font-size:13px;color:#f0f0f0;font-weight:bold;">Paramètres du document</div>
<div class="t" style="left:2141px;top:694px;font-size:13px;color:#e6e6e6;font-weight:normal;">L</div>
<div class="t" style="left:2159px;top:694px;font-size:12.5px;color:#8ebcf2;font-weight:normal;">800</div>
<div class="t" style="left:2141px;top:717px;font-size:13px;color:#e6e6e6;font-weight:normal;">H</div>
<div class="t" style="left:2161px;top:717px;font-size:12.5px;color:#8ebcf2;font-weight:normal;">600</div>
<div class="t" style="left:2383px;top:692px;font-size:13px;color:#f0f0f0;font-weight:normal;">Ajuster au c</div>
<div class="t" style="left:2271px;top:718px;font-size:12.5px;color:#eaeaea;font-weight:normal;">Mettre à l'échelle le contenu</div>
<div class="t" style="left:2271px;top:744px;font-size:12.5px;color:#eaeaea;font-weight:normal;">Appliquer à la zone de travail</div>
<div class="t" style="left:2271px;top:770px;font-size:12.5px;color:#eaeaea;font-weight:normal;">Plages de l'échelle</div>
<div class="t" style="left:2141px;top:746px;font-size:13px;color:#e6e6e6;font-weight:normal;">Scène</div>
<div class="t" style="left:2141px;top:769px;font-size:13px;color:#e6e6e6;font-weight:normal;">I/S</div>
<div class="t" style="left:2192px;top:769px;font-size:12.5px;color:#8ebcf2;font-weight:normal;">24</div>
<div class="t" style="left:2306px;top:796.5px;font-size:13px;color:#f0f0f0;font-weight:normal;">Paramètres supplémentaires</div>
<div class="a" style="left:2121px;top:896.5px;width:319px;height:19.5px;background:#323232;"></div>
<div class="a" style="left:2121px;top:896.5px;width:80px;height:19.5px;background:#3a3a3a;"></div>
<div class="a" style="left:2201px;top:896.5px;width:1px;height:19.5px;background:#2b2b2b;"></div>
<div class="a" style="left:2302px;top:896.5px;width:1px;height:19.5px;background:#2b2b2b;"></div>
<div class="a" style="left:2347px;top:896.5px;width:1px;height:19.5px;background:#2b2b2b;"></div>
<div class="a" style="left:2121px;top:916px;width:319px;height:1px;background:#2f2f2f;"></div>
<div class="t" style="left:2128px;top:900px;font-size:12px;color:#f2f2f2;font-weight:bold;">Bibliothèque</div>
<div class="t" style="left:2207px;top:900px;font-size:12px;color:#8c8c8c;font-weight:bold;">Bibliothèques CC</div>
<div class="t" style="left:2310px;top:900px;font-size:12px;color:#8c8c8c;font-weight:bold;">Actifs</div>
<svg class="a" style="left:0px;top:0px;" width="2440" height="1373" viewBox="0 0 2440 1373"><rect x="2125.5" y="922.5" width="330" height="19" rx="4" fill="#2f2f2f" stroke="#5a5a5a" stroke-width="1.1"/><rect x="2121" y="945.7" width="319" height="133" fill="#ffffff"/><g stroke="#ffffff" stroke-width="0.75" stroke-linejoin="round"><polygon points="2368.4,945.3 2376.4,953.9 2377.0,960.8 2373.2,959.8 2370.0,951.7" fill="#8a4fa8"/><polygon points="2352.3,979.7 2363.5,997.4 2360.9,999.0 2354.9,988.3" fill="#8a4fa8"/><polygon points="2364.6,976.4 2371.1,985.6 2367.8,989.3 2363.5,982.9" fill="#8a4fa8"/><polygon points="2363.5,981.8 2368.4,991.5 2365.7,994.7" fill="#8a4fa8"/><polygon points="2370.5,987.2 2374.8,994.7 2367.3,1007.6 2372.7,1020.5 2368.4,1023.7 2361.9,1008.7 2363.0,999.0" fill="#8a4fa8"/><polygon points="2364.6,1003.3 2369.5,1002.2 2367.3,1009.8 2371.6,1018.4 2368.4,1020.5 2364.1,1009.8" fill="#a86cc6"/><polygon points="2389.9,987.2 2396.3,989.3 2400.1,1005.5 2398.5,1022.7 2394.2,1021.6 2395.3,1006.5 2392.0,996.9" fill="#a86cc6"/><polygon points="2372.7,985.0 2384.5,984.0 2391.0,988.3 2393.1,999.0 2388.8,1011.9 2392.0,1024.8 2377.0,1027.0 2375.9,1014.1 2371.6,999.0" fill="#8a4fa8"/><polygon points="2384.5,985.0 2391.0,988.3 2393.1,999.0 2388.8,1011.9 2391.0,1023.7 2386.7,1014.1 2385.6,999.0" fill="#a86cc6"/><polygon points="2377.0,965.7 2383.4,961.9 2389.3,970.0 2388.8,978.6 2384.5,982.9 2379.1,981.8 2375.9,973.2" fill="#8a4fa8"/><polygon points="2380.2,971.1 2388.8,970.0 2388.6,978.6 2384.5,981.8 2380.4,977.5" fill="#a86cc6"/><polygon points="2375.9,1025.9 2384.5,1028.0 2374.8,1051.7 2372.7,1067.8 2374.8,1077.5 2365.7,1077.0 2368.4,1052.8" fill="#8a4fa8"/><polygon points="2383.4,1027.0 2392.0,1025.9 2391.8,1052.8 2389.3,1067.8 2399.0,1077.5 2387.7,1077.0 2385.0,1052.8" fill="#a86cc6"/></g><rect x="2121" y="1078.8" width="319" height="6" fill="#494949"/><rect x="2287.5" y="1086.5" width="170" height="20" rx="4" fill="#1f1f1f" stroke="#6a6a6a" stroke-width="1.1"/><circle cx="2300" cy="1094.5" r="5" fill="none" stroke="#eee" stroke-width="1.6"/><line x1="2303.5" y1="1098" x2="2308" y2="1102.5" stroke="#eee" stroke-width="1.8"/><rect x="2121" y="1109" width="319" height="30" fill="#383838"/><rect x="2353" y="1109" width="1" height="30" fill="#2b2b2b"/><rect x="2424" y="1109" width="1" height="30" fill="#2b2b2b"/><rect x="2122.5" y="1139.5" width="330" height="240" rx="4" fill="#373737" stroke="#4a4a4a" stroke-width="1.1"/><g transform="translate(2146.5 1136.6) scale(0.74)"><path d="M0 0 H2.6 V2.4 H5 L7 5.8 L4.6 8.6 L8.4 12.6 L10.8 9.8 L14.6 15.2 L19 13.8 V19.1 H0Z" fill="#d2d2d2"/><path d="M10.4 0.4 A8.6 8.6 0 0 0 19 9" fill="none" stroke="#d2d2d2" stroke-width="1.7"/><path d="M15 0.6 H19 V4.8 Q16 4.2 15 0.6Z" fill="#d2d2d2"/></g><g transform="translate(2146.5 1161.1) scale(0.74)"><path d="M0 0 H2.6 V2.4 H5 L7 5.8 L4.6 8.6 L8.4 12.6 L10.8 9.8 L14.6 15.2 L19 13.8 V19.1 H0Z" fill="#d2d2d2"/><path d="M10.4 0.4 A8.6 8.6 0 0 0 19 9" fill="none" stroke="#d2d2d2" stroke-width="1.7"/><path d="M15 0.6 H19 V4.8 Q16 4.2 15 0.6Z" fill="#d2d2d2"/></g><g transform="translate(2146.5 1186.3) scale(0.74)"><path d="M0 0 H2.6 V2.4 H5 L7 5.8 L4.6 8.6 L8.4 12.6 L10.8 9.8 L14.6 15.2 L19 13.8 V19.1 H0Z" fill="#d2d2d2"/><path d="M10.4 0.4 A8.6 8.6 0 0 0 19 9" fill="none" stroke="#d2d2d2" stroke-width="1.7"/><path d="M15 0.6 H19 V4.8 Q16 4.2 15 0.6Z" fill="#d2d2d2"/></g><g transform="translate(2146.5 1211.5) scale(0.74)"><path d="M0 0 H2.6 V2.4 H5 L7 5.8 L4.6 8.6 L8.4 12.6 L10.8 9.8 L14.6 15.2 L19 13.8 V19.1 H0Z" fill="#d2d2d2"/><path d="M10.4 0.4 A8.6 8.6 0 0 0 19 9" fill="none" stroke="#d2d2d2" stroke-width="1.7"/><path d="M15 0.6 H19 V4.8 Q16 4.2 15 0.6Z" fill="#d2d2d2"/></g><rect x="2123" y="1231.5" width="317" height="24" fill="#3d4a5f"/><g transform="translate(2146.5 1236.0) scale(0.74)"><path d="M0 0 H2.6 V2.4 H5 L7 5.8 L4.6 8.6 L8.4 12.6 L10.8 9.8 L14.6 15.2 L19 13.8 V19.1 H0Z" fill="#d2d2d2"/><path d="M10.4 0.4 A8.6 8.6 0 0 0 19 9" fill="none" stroke="#d2d2d2" stroke-width="1.7"/><path d="M15 0.6 H19 V4.8 Q16 4.2 15 0.6Z" fill="#d2d2d2"/></g><g transform="translate(2146.5 1261.2) scale(0.74)"><path d="M0 0 H2.6 V2.4 H5 L7 5.8 L4.6 8.6 L8.4 12.6 L10.8 9.8 L14.6 15.2 L19 13.8 V19.1 H0Z" fill="#d2d2d2"/><path d="M10.4 0.4 A8.6 8.6 0 0 0 19 9" fill="none" stroke="#d2d2d2" stroke-width="1.7"/><path d="M15 0.6 H19 V4.8 Q16 4.2 15 0.6Z" fill="#d2d2d2"/></g><path d="M2146 1298.8 L2156 1286.8 V1300.8 H2146Z" fill="none" stroke="#cfcfcf" stroke-width="1.3"/><circle cx="2151" cy="1296.8" r="3" fill="none" stroke="#cfcfcf" stroke-width="1.2"/><path d="M2146 1324 L2156 1312 V1326 H2146Z" fill="none" stroke="#cfcfcf" stroke-width="1.3"/><circle cx="2151" cy="1322" r="3" fill="none" stroke="#cfcfcf" stroke-width="1.2"/><path d="M2146 1349 L2156 1337 V1351 H2146Z" fill="none" stroke="#cfcfcf" stroke-width="1.3"/><circle cx="2151" cy="1347" r="3" fill="none" stroke="#cfcfcf" stroke-width="1.2"/><rect x="2121" y="1355" width="319" height="18" fill="#373737"/><rect x="2125.5" y="1357.5" width="11" height="11" fill="none" stroke="#ddd" stroke-width="1.2"/><path d="M2131 1360 V1366 M2128 1363 H2134" stroke="#ddd" stroke-width="1.2"/><path d="M2140 1357 H2146 L2148 1359 H2154 V1368 H2140Z" fill="#d6d6d6"/><circle cx="2161" cy="1363" r="6" fill="#d6d6d6"/><rect x="2160" y="1361" width="2" height="5" fill="#383838"/><rect x="2172" y="1358" width="9" height="11" fill="#aaa"/><rect x="2192" y="1360" width="260" height="6" rx="3" fill="#d8d8d8"/></svg>
<div class="t" style="left:2133px;top:925px;font-size:13px;color:#eaeaea;font-weight:normal;">animate.fla</div>
<div class="t" style="left:2124px;top:1090px;font-size:12.5px;color:#eaeaea;font-weight:normal;">62 éléments</div>
<div class="t" style="left:2137px;top:1117.5px;font-size:12px;color:#dcdcdc;font-weight:normal;">Nom</div>
<div class="t" style="left:2368px;top:1117.5px;font-size:12px;color:#dcdcdc;font-weight:normal;">Liaison</div>
<div class="t" style="left:2166px;top:1137.1px;font-size:13px;color:#ececec;font-weight:normal;">clipBoss</div>
<div class="t" style="left:2358px;top:1137.1px;font-size:13px;color:#ececec;font-weight:normal;">ClipBoss</div>
<div class="t" style="left:2166px;top:1161.6px;font-size:13px;color:#ececec;font-weight:normal;">clipChargement</div>
<div class="t" style="left:2166px;top:1186.8px;font-size:13px;color:#ececec;font-weight:normal;">clipDecorDefilant</div>
<div class="t" style="left:2358px;top:1186.8px;font-size:13px;color:#ececec;font-weight:normal;">ClipDecor..</div>
<div class="t" style="left:2166px;top:1212px;font-size:13px;color:#ececec;font-weight:normal;">clipDecorFixe</div>
<div class="t" style="left:2358px;top:1212px;font-size:13px;color:#ececec;font-weight:normal;">ClipDecorF..</div>
<div class="t" style="left:2166px;top:1236.5px;font-size:13px;color:#ececec;font-weight:normal;">clipEnnemi</div>
<div class="t" style="left:2358px;top:1236.5px;font-size:13px;color:#ececec;font-weight:normal;">ClipEnnemi</div>
<div class="t" style="left:2166px;top:1261.7px;font-size:13px;color:#ececec;font-weight:normal;">clipObstacle</div>
<div class="t" style="left:2358px;top:1261.7px;font-size:13px;color:#ececec;font-weight:normal;">ClipObstacle</div>
<div class="t" style="left:2166px;top:1286.8px;font-size:13px;color:#ececec;font-weight:normal;">Interpoler 15</div>
<div class="t" style="left:2166px;top:1312px;font-size:13px;color:#ececec;font-weight:normal;">Interpoler 16</div>
<div class="t" style="left:2166px;top:1337px;font-size:13px;color:#ececec;font-weight:normal;">PlayStation_Directional_button.svg</div>
</div><div class="a" style="left:0;top:586px;width:1168px;height:1px;background:#2f2f2f"></div></div>
</body></html>
